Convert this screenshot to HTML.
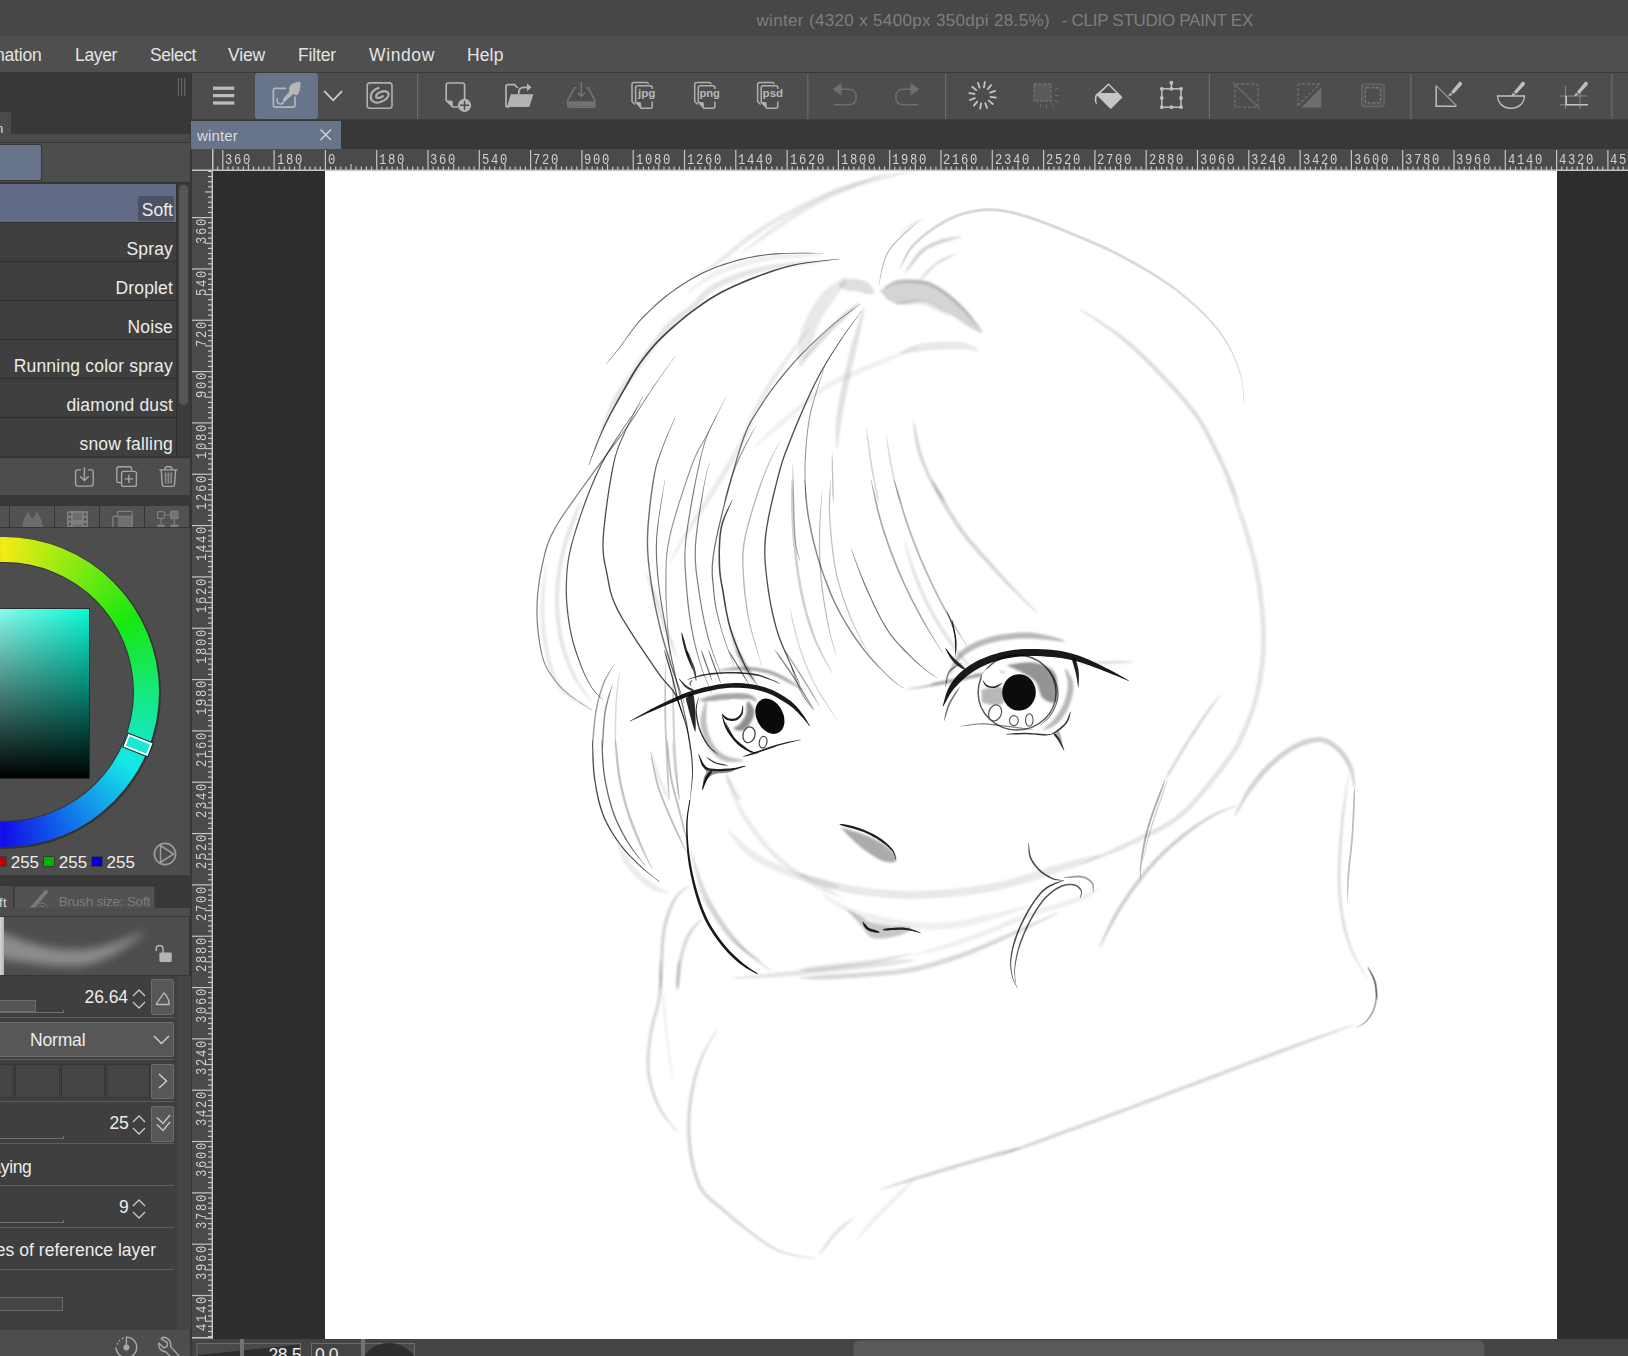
<!DOCTYPE html>
<html><head><meta charset="utf-8"><title>winter - CLIP STUDIO PAINT EX</title>
<style>
*{box-sizing:border-box;margin:0;padding:0}
html,body{width:1628px;height:1356px;overflow:hidden;background:#4d4d4d;font-family:"Liberation Sans",sans-serif;color:#e6e6e6}
.abs,.abs>div,.abs>svg{position:absolute}
#title{left:0;top:0;width:1628px;height:36px;background:#474747}
#menu{left:0;top:36px;width:1628px;height:36px;background:#4f4f4f}
#toolbar{left:192px;top:72px;width:1436px;height:48px;background:#4d4d4d}
#tabstrip{left:190px;top:120px;width:1438px;height:30px;background:#383838}
#doctab{left:191px;top:121px;width:150px;height:28px;background:#68738c}
#hruler{left:192px;top:149px;width:1436px;height:22px;background:#4a4a4a;overflow:hidden}
#vruler{left:192px;top:171px;width:21px;height:1168px;background:#4a4a4a;overflow:hidden}
#canvasbg{left:213px;top:171px;width:1415px;height:1168px;background:#2e2e2e}
#paper{left:325px;top:171px;width:1232px;height:1168px;background:#fff;overflow:hidden}
#status{left:190px;top:1339px;width:1438px;height:17px;background:#444;overflow:hidden}
#left{left:0;top:72px;width:191px;height:1284px;background:#363636;overflow:hidden}
#gap{left:190px;top:72px;width:2px;height:1284px;background:#363636}
#left .row{left:0;width:176px;height:38px;background:#3f3f3f}
#left .sep{left:0;width:177px;height:1px;background:#2f2f2f}
#left .psep{left:0;width:174px;height:1px;background:#5c5c5c}
#left .btn{background:#575757;border:1px solid #6c6c6c;border-radius:2px}
</style></head><body>
<div id="title" class="abs"><span style="position:absolute;left:756.50px;top:11.61px;font-family:'Liberation Sans',sans-serif;font-size:17px;line-height:17px;letter-spacing:0.337px;color:#7e7e7e;white-space:pre;">winter (4320 x 5400px 350dpi 28.5%) </span><span style="position:absolute;left:1061.70px;top:11.61px;font-family:'Liberation Sans',sans-serif;font-size:17px;line-height:17px;letter-spacing:-0.279px;color:#7e7e7e;white-space:pre;">- CLIP STUDIO PAINT EX</span></div>
<div id="menu" class="abs"><span style="position:absolute;left:-34.50px;top:11.19px;font-family:'Liberation Sans',sans-serif;font-size:17.5px;line-height:17.5px;letter-spacing:-0.203px;color:#e4e4e4;white-space:pre;">Animation</span><span style="position:absolute;left:75.00px;top:11.19px;font-family:'Liberation Sans',sans-serif;font-size:17.5px;line-height:17.5px;letter-spacing:-0.356px;color:#e4e4e4;white-space:pre;">Layer</span><span style="position:absolute;left:150.00px;top:11.19px;font-family:'Liberation Sans',sans-serif;font-size:17.5px;line-height:17.5px;letter-spacing:-0.440px;color:#e4e4e4;white-space:pre;">Select</span><span style="position:absolute;left:228.00px;top:11.19px;font-family:'Liberation Sans',sans-serif;font-size:17.5px;line-height:17.5px;letter-spacing:-0.156px;color:#e4e4e4;white-space:pre;">View</span><span style="position:absolute;left:298.00px;top:11.19px;font-family:'Liberation Sans',sans-serif;font-size:17.5px;line-height:17.5px;letter-spacing:-0.148px;color:#e4e4e4;white-space:pre;">Filter</span><span style="position:absolute;left:369.00px;top:11.19px;font-family:'Liberation Sans',sans-serif;font-size:17.5px;line-height:17.5px;letter-spacing:0.625px;color:#e4e4e4;white-space:pre;">Window</span><span style="position:absolute;left:467.00px;top:11.19px;font-family:'Liberation Sans',sans-serif;font-size:17.5px;line-height:17.5px;letter-spacing:0.125px;color:#e4e4e4;white-space:pre;">Help</span></div>
<div id="gap" class="abs"></div>
<div id="left" class="abs"><!-- coordinates are relative to #left (page y - 72) -->
<div style="left:0;top:0;width:191px;height:30px;background:#383838"></div>
<svg width="9" height="20" viewBox="0 0 9 20" style="left:177px;top:6px"><path d="M1.3 0V18M4.6 0V18M7.8 0V18" stroke="#767676" stroke-width="0.9"/></svg>
<div style="left:0;top:30px;width:191px;height:32px;background:#383838;border-top:1px solid #333"></div>
<div style="left:0;top:40px;width:11px;height:22px;background:#4a4a4a"></div>
<span style="position:absolute;left:-140.00px;top:120.50px;font-family:'Liberation Sans',sans-serif;font-size:13.0px;line-height:13.0px;letter-spacing:1.335px;color:#dcdcdc;white-space:pre;margin-top:-71px">Sub tool: Decoration</span>
<div style="left:0;top:62px;width:190px;height:8px;background:#4a4a4a"></div>
<div style="left:0;top:70px;width:190px;height:1px;background:#363636"></div>
<div style="left:0;top:71px;width:190px;height:39px;background:#4d4d4d"></div>
<div style="left:-4px;top:72px;width:46px;height:37px;background:#68738c;border:1px solid #363636;border-radius:3px"></div>
<div style="left:0;top:110px;width:190px;height:2px;background:#363636"></div>
<!-- list -->
<div style="left:0;top:112px;width:177px;height:274px;background:#2f2f2f"></div>
<div class="row" style="top:112px;background:#616b85"></div>
<div style="left:138px;top:124px;width:36px;height:25px;background:#4c5263;border-radius:2px"></div>
<div class="row" style="top:151px"></div>
<div class="row" style="top:190px"></div>
<div class="row" style="top:229px"></div>
<div class="row" style="top:268px"></div>
<div class="row" style="top:307px"></div>
<div class="row" style="top:346px"></div>
<span style="position:absolute;left:141.80px;top:200.69px;font-family:'Liberation Sans',sans-serif;font-size:17.5px;line-height:17.5px;letter-spacing:0.015px;color:#ececec;white-space:pre;margin-top:-71px">Soft</span>
<span style="position:absolute;left:126.50px;top:239.69px;font-family:'Liberation Sans',sans-serif;font-size:17.5px;line-height:17.5px;letter-spacing:0.156px;color:#ececec;white-space:pre;margin-top:-71px">Spray</span>
<span style="position:absolute;left:115.50px;top:278.69px;font-family:'Liberation Sans',sans-serif;font-size:17.5px;line-height:17.5px;letter-spacing:0.154px;color:#ececec;white-space:pre;margin-top:-71px">Droplet</span>
<span style="position:absolute;left:127.50px;top:317.69px;font-family:'Liberation Sans',sans-serif;font-size:17.5px;line-height:17.5px;letter-spacing:0.150px;color:#ececec;white-space:pre;margin-top:-71px">Noise</span>
<span style="position:absolute;left:13.70px;top:356.69px;font-family:'Liberation Sans',sans-serif;font-size:17.5px;line-height:17.5px;letter-spacing:0.193px;color:#ececec;white-space:pre;margin-top:-71px">Running color spray</span>
<span style="position:absolute;left:66.50px;top:395.69px;font-family:'Liberation Sans',sans-serif;font-size:17.5px;line-height:17.5px;letter-spacing:0.118px;color:#ececec;white-space:pre;margin-top:-71px">diamond dust</span>
<span style="position:absolute;left:79.50px;top:434.69px;font-family:'Liberation Sans',sans-serif;font-size:17.5px;line-height:17.5px;letter-spacing:0.171px;color:#ececec;white-space:pre;margin-top:-71px">snow falling</span>
<!-- list scrollbar -->
<div style="left:177px;top:112px;width:13px;height:274px;background:#3c3c3c"></div>
<div style="left:178.5px;top:113px;width:9.5px;height:220px;background:#565656;border-radius:5px"></div>
<div style="left:0;top:384px;width:190px;height:2px;background:#363636"></div>
<!-- icon bar -->
<div style="left:0;top:386px;width:190px;height:37px;background:#4d4d4d"></div>
<div style="left:0;top:423px;width:190px;height:11px;background:#383838"></div>
<!-- colour tabs -->
<div style="left:0;top:434px;width:190px;height:22px;background:#353535"></div>
<div style="left:-36px;top:434px;width:45px;height:21px;background:#525252"></div>
<div style="left:10px;top:434px;width:44px;height:21px;background:#525252"></div>
<div style="left:55px;top:434px;width:44px;height:21px;background:#525252"></div>
<div style="left:100px;top:434px;width:44px;height:21px;background:#525252"></div>
<div style="left:145px;top:434px;width:44px;height:21px;background:#525252"></div>
<!-- colour panel -->
<div style="left:0;top:456px;width:190px;height:347px;background:#4d4d4d"></div>
<div style="left:-151.5px;top:464.5px;width:312px;height:312px;border-radius:50%;background:#333"></div>
<div style="left:-150.7px;top:465.3px;width:310px;height:310px;border-radius:50%;background:conic-gradient(#f2ec14 0deg,#18e810 60deg,#14e8e8 120deg,#1010e8 180deg,#e810e8 240deg,#e81010 300deg,#f2ec14 360deg)"></div>
<div style="left:-125.7px;top:490.3px;width:260px;height:260px;border-radius:50%;background:#333"></div>
<div style="left:-124.7px;top:491.3px;width:258px;height:258px;border-radius:50%;background:#4d4d4d"></div>
<div style="left:-81px;top:535.5px;width:171px;height:171px;background:#2a2a2a"></div>
<div style="left:-80px;top:536.5px;width:169px;height:169px;background:linear-gradient(to bottom,rgba(0,0,0,0),#000),linear-gradient(to right,#fff,#08f8d6)"></div>
<!-- hue marker -->
<div style="left:125px;top:666px;width:26px;height:14px;background:#19e8d6;border:2.5px solid #fff;outline:1px solid #222;transform:rotate(21.5deg)"></div>
<!-- rgb -->
<div style="left:-5px;top:783.5px;width:11.5px;height:11px;background:#c00000;border:1px solid #3a3a3a;border-radius:1.5px"></div>
<div style="left:43.3px;top:783.5px;width:11.5px;height:11px;background:#00b400;border:1px solid #3a3a3a;border-radius:1.5px"></div>
<div style="left:91.3px;top:783.5px;width:11.5px;height:11px;background:#0000d8;border:1px solid #3a3a3a;border-radius:1.5px"></div>
<span style="position:absolute;left:10.80px;top:852.61px;font-family:'Liberation Sans',sans-serif;font-size:17.0px;line-height:17.0px;letter-spacing:-0.058px;color:#ececec;white-space:pre;margin-top:-71px">255</span>
<span style="position:absolute;left:58.70px;top:852.61px;font-family:'Liberation Sans',sans-serif;font-size:17.0px;line-height:17.0px;letter-spacing:0.042px;color:#ececec;white-space:pre;margin-top:-71px">255</span>
<span style="position:absolute;left:106.60px;top:852.61px;font-family:'Liberation Sans',sans-serif;font-size:17.0px;line-height:17.0px;letter-spacing:0.008px;color:#ececec;white-space:pre;margin-top:-71px">255</span>
<svg width="26" height="26" viewBox="0 0 26 26" style="left:152px;top:768.5px"><circle cx="13" cy="13" r="10.6" fill="none" stroke="#9c9c9c" stroke-width="1.7"/><path d="M8.5 4.5L21.5 13L8.5 21.5Z" fill="none" stroke="#9c9c9c" stroke-width="1.5" stroke-linejoin="round"/></svg>
<!-- tool property tabs -->
<div style="left:0;top:803px;width:190px;height:11px;background:#383838"></div>
<div style="left:0;top:814px;width:190px;height:22px;background:#383838"></div>
<div style="left:0;top:814px;width:13px;height:22px;background:#4d4d4d"></div>
<span style="position:absolute;left:-104.00px;top:894.50px;font-family:'Liberation Sans',sans-serif;font-size:13.0px;line-height:13.0px;letter-spacing:0.279px;color:#dcdcdc;white-space:pre;margin-top:-71px">Tool property: Soft</span>
<div style="left:14px;top:814px;width:141px;height:22px;background:#525252;border:1px solid #404040;border-bottom:none"></div>
<span style="position:absolute;left:58.70px;top:894.07px;font-family:'Liberation Sans',sans-serif;font-size:13.5px;line-height:13.5px;letter-spacing:-0.203px;color:#7d7d7d;white-space:pre;margin-top:-71px">Brush size: Soft</span>
<div style="left:0;top:836px;width:190px;height:8px;background:#4d4d4d"></div>
<div style="left:0;top:844px;width:190px;height:1px;background:#363636"></div>
<!-- brush preview -->
<div style="left:0;top:845px;width:189px;height:58px;background:#4d4d4d;overflow:hidden">
<svg width="189" height="58" viewBox="0 0 189 58" style="position:absolute;left:0;top:0"><defs><filter id="bl" x="-20%" y="-100%" width="140%" height="300%"><feGaussianBlur stdDeviation="4"/></filter></defs><path d="M-8 12C10 18 40 33 74 33C95 33 120 26 143 14L143 17C125 32 100 49 74 49C45 49 15 44 -8 40Z" fill="#8c8c8c" filter="url(#bl)"/></svg>
<div style="position:absolute;left:0;top:0;width:4px;height:58px;background:linear-gradient(to right,#d6d6d6,#b4b4b4)"></div>
</div>
<div style="left:0;top:903px;width:190px;height:1px;background:#363636"></div>
<!-- properties -->
<div style="left:0;top:904px;width:177px;height:354px;background:#3f3f3f"></div>
<div style="left:177px;top:904px;width:14px;height:354px;background:#454545"></div>
<div class="psep" style="top:945px"></div>
<div class="psep" style="top:987px"></div>
<div class="psep" style="top:1029px"></div>
<div class="psep" style="top:1071px"></div>
<div class="psep" style="top:1113px"></div>
<div class="psep" style="top:1155px"></div>
<div class="psep" style="top:1197px"></div>
<!-- row1 -->
<div style="left:-2px;top:928px;width:38px;height:12px;background:#555;border:1px solid #6c6c6c"></div>
<div style="left:0;top:940px;width:63px;height:1px;background:#707070"></div>
<div style="left:62.5px;top:938px;width:1px;height:3px;background:#707070"></div>
<span style="position:absolute;left:84.50px;top:988.19px;font-family:'Liberation Sans',sans-serif;font-size:17.5px;line-height:17.5px;letter-spacing:-0.059px;color:#ececec;white-space:pre;margin-top:-71px">26.64</span>
<svg width="14" height="20" viewBox="0 0 14 20" style="left:131.5px;top:917px"><path d="M1 7L7 1L13 7M1 13L7 19L13 13" fill="none" stroke="#c8c8c8" stroke-width="1.3"/></svg>
<div class="btn" style="left:151px;top:907px;width:23px;height:36px"></div>
<svg width="16" height="14" viewBox="0 0 16 14" style="left:155px;top:920px"><path d="M1 12.5H14.5M1 12.5L8.5 1.5M8.5 0.5C11.5 3 14 8 14.3 12.5" fill="none" stroke="#bdbdbd" stroke-width="1.3"/></svg>
<!-- row2 dropdown -->
<div class="btn" style="left:-3px;top:949.5px;width:177px;height:35.5px"></div>
<span style="position:absolute;left:29.90px;top:1030.69px;font-family:'Liberation Sans',sans-serif;font-size:17.5px;line-height:17.5px;letter-spacing:-0.151px;color:#ececec;white-space:pre;margin-top:-71px">Normal</span>
<svg width="17" height="10" viewBox="0 0 17 10" style="left:152.5px;top:962.5px"><path d="M1 1L8.5 8.5L16 1" fill="none" stroke="#d0d0d0" stroke-width="1.4"/></svg>
<!-- row3 cells -->
<div style="left:-20px;top:992px;width:33.5px;height:33.5px;background:#444;border:1px solid #353535"></div>
<div style="left:15px;top:992px;width:45px;height:33.5px;background:#444;border:1px solid #353535"></div>
<div style="left:61px;top:992px;width:44px;height:33.5px;background:#444;border:1px solid #353535"></div>
<div style="left:106px;top:992px;width:44px;height:33.5px;background:#444;border:1px solid #353535"></div>
<div class="btn" style="left:151px;top:991.5px;width:23px;height:35px"></div>
<svg width="10" height="16" viewBox="0 0 10 16" style="left:157.5px;top:1001px"><path d="M1 1L8.5 8L1 15" fill="none" stroke="#d0d0d0" stroke-width="1.4"/></svg>
<!-- row4 -->
<div style="left:0;top:1065.5px;width:63px;height:1px;background:#707070"></div>
<div style="left:62.5px;top:1063.5px;width:1px;height:3px;background:#707070"></div>
<span style="position:absolute;left:109.50px;top:1114.19px;font-family:'Liberation Sans',sans-serif;font-size:17.5px;line-height:17.5px;letter-spacing:-0.284px;color:#ececec;white-space:pre;margin-top:-71px">25</span>
<svg width="14" height="20" viewBox="0 0 14 20" style="left:131.5px;top:1043px"><path d="M1 7L7 1L13 7M1 13L7 19L13 13" fill="none" stroke="#c8c8c8" stroke-width="1.3"/></svg>
<div class="btn" style="left:151px;top:1033.5px;width:23px;height:36px"></div>
<svg width="15" height="18" viewBox="0 0 15 18" style="left:155.5px;top:1042px"><path d="M1 3.5L7 9.5L14 1M1 10.5L7 16.5L14 8" fill="none" stroke="#c8c8c8" stroke-width="1.4"/></svg>
<!-- row5 -->
<span style="position:absolute;left:-121.00px;top:1157.69px;font-family:'Liberation Sans',sans-serif;font-size:17.5px;line-height:17.5px;letter-spacing:-0.376px;color:#ececec;white-space:pre;margin-top:-71px">Continuous spraying</span>
<!-- row6 -->
<div style="left:0;top:1149.5px;width:63px;height:1px;background:#707070"></div>
<div style="left:62.5px;top:1147.5px;width:1px;height:3px;background:#707070"></div>
<span style="position:absolute;left:119.00px;top:1197.69px;font-family:'Liberation Sans',sans-serif;font-size:17.5px;line-height:17.5px;letter-spacing:-0.334px;color:#ececec;white-space:pre;margin-top:-71px">9</span>
<svg width="14" height="20" viewBox="0 0 14 20" style="left:131.5px;top:1127px"><path d="M1 7L7 1L13 7M1 13L7 19L13 13" fill="none" stroke="#c8c8c8" stroke-width="1.3"/></svg>
<!-- row7 -->
<span style="position:absolute;left:-140.00px;top:1240.99px;font-family:'Liberation Sans',sans-serif;font-size:17.5px;line-height:17.5px;letter-spacing:0.033px;color:#ececec;white-space:pre;margin-top:-71px">Do not exceed lines of reference layer</span>
<!-- row8 -->
<div style="left:-3px;top:1224.5px;width:66px;height:14.5px;background:#444;border:1px solid #6c6c6c"></div>
<!-- bottom bar -->
<div style="left:0;top:1258px;width:190px;height:26px;background:#4d4d4d"></div>
<!-- icons overlay in page coords -->
<svg width="190" height="1284" viewBox="0 72 190 1284" style="left:0;top:0" fill="none">
<!-- import -->
<g stroke="#a6a6a6" stroke-width="1.4">
<path d="M81 469.9H77.6a2 2 0 0 0-2 2V484.1a2 2 0 0 0 2 2H91.2a2 2 0 0 0 2-2V471.9a2 2 0 0 0-2-2H87.8"/>
<path d="M84.4 467.2V480.4M80 476.3L84.4 480.6L88.8 476.3"/>
<path d="M121 482.6H118.8a2 2 0 0 1-2-2V468.7a2 2 0 0 1 2-2H129.6a2 2 0 0 1 2 2V470.6"/>
<rect x="121.6" y="471.4" width="14.8" height="15" rx="2"/>
<path d="M124.8 478.9H133M128.9 474.8V483"/>
<path d="M159.4 469.9H177.4M164.8 469.6C164.8 467.6 166 466.7 167.2 466.7H169.6C170.8 466.7 172 467.6 172 469.6M161.2 470.3L162.3 484.6a2 2 0 0 0 2 1.8H172.5a2 2 0 0 0 2-1.8L175.6 470.3"/>
</g>
<path d="M164.6 472.5H166.4V483.5H164.9ZM167.5 472.5H169.3V483.5H167.5ZM170.4 472.5H172.2L171.9 483.5H170.4Z" fill="#8a8a8a"/>
<!-- tab icons (clipped to tab row) -->
<clipPath id="tc"><rect x="0" y="506" width="190" height="21"/></clipPath>
<g clip-path="url(#tc)">
<path d="M22 529C22 522 25 516 28 512L32.5 519L37 512C40 516 43 522 43 529Z" fill="#6c6c6c"/>
<rect x="67" y="511" width="21" height="20" rx="1.5" fill="#7e7e7e"/>
<g fill="#525252"><rect x="68.6" y="513" width="2.4" height="2.4"/><rect x="68.6" y="518" width="2.4" height="2.4"/><rect x="68.6" y="523" width="2.4" height="2.4"/><rect x="84" y="513" width="2.4" height="2.4"/><rect x="84" y="518" width="2.4" height="2.4"/><rect x="84" y="523" width="2.4" height="2.4"/></g>
<rect x="73.2" y="513" width="8.6" height="7" fill="#6c6c6c"/><rect x="73.2" y="524.6" width="8.6" height="4" fill="#6c6c6c"/>
<path d="M117.6 516V513a1.6 1.6 0 0 1 1.6-1.6H130.6a1.6 1.6 0 0 1 1.6 1.6V530" stroke="#7e7e7e" stroke-width="1.3"/>
<rect x="112.8" y="516.4" width="19" height="14" rx="1.6" stroke="#7e7e7e" stroke-width="1.3"/>
<rect x="117.8" y="516.8" width="13.6" height="12" fill="#707070"/>
<rect x="157.6" y="511.6" width="6.8" height="6.8" rx="1" stroke="#7e7e7e" stroke-width="1.3"/>
<rect x="170.6" y="511.2" width="7.4" height="7.4" rx="1" fill="#747474" stroke="#7e7e7e" stroke-width="1.2"/>
<path d="M164.4 515H170.6M161 518.4V524.6M174.4 518.4V524.6" stroke="#7e7e7e" stroke-width="1.2"/>
<rect x="157" y="524.6" width="8" height="3" rx="1" fill="#7e7e7e"/><rect x="170.4" y="524.6" width="8" height="3" rx="1" fill="#7e7e7e"/>
</g>
<!-- brush tab icon -->
<clipPath id="tc2"><rect x="15" y="887" width="139" height="20.6"/></clipPath>
<g clip-path="url(#tc2)"><path d="M31 909L46 892" stroke="#7a7a7a" stroke-width="3.6" stroke-linecap="round"/><circle cx="41.5" cy="909" r="3" stroke="#7a7a7a" stroke-width="1"/><circle cx="41.5" cy="909" r="6" stroke="#7a7a7a" stroke-width="1"/></g>
<!-- lock -->
<path d="M156.2 951V949C156.2 946.7 157.8 945.4 159.6 945.4C161.4 945.4 163 946.7 163 949V953" stroke="#b4b4b4" stroke-width="1.5"/>
<rect x="159.4" y="952.6" width="12.4" height="9.4" rx="1.4" fill="#b4b4b4"/>
<!-- bottom icons -->
<clipPath id="bc"><rect x="0" y="1330" width="190" height="26"/></clipPath>
<g clip-path="url(#bc)" stroke="#a8a8a8" stroke-width="1.4">
<path d="M126.4 1347.4V1337.1A10.3 10.3 0 1 1 116.1 1347.4"/>
<circle cx="126.4" cy="1347.4" r="3" fill="#a8a8a8" stroke="none"/>
<g fill="#a8a8a8" stroke="none"><circle cx="117.4" cy="1343.8" r="0.9"/><circle cx="119.4" cy="1340.6" r="0.9"/><circle cx="122.6" cy="1338.4" r="0.9"/></g>
<path d="M161.2 1338.8L167.4 1342.6V1346.2L163.8 1348L158.9 1343C158 1347.5 161 1351.6 165.6 1351.8L174 1360L178.6 1355.4L170.6 1346.6C171.6 1342 168.6 1337.4 163.4 1337.2C162.4 1337.2 161.6 1337.6 161.2 1338.8Z" stroke-linejoin="round"/>
</g>
</svg>
</div>
<div id="toolbar" class="abs"><svg width="1436" height="48" viewBox="192 72 1436 48" style="left:0;top:0" fill="none" stroke-linecap="butt">
<rect x="192" y="72" width="1436" height="1" fill="#3a3a3a"/>
<rect x="192" y="119" width="1436" height="1" fill="#404040"/>
<!-- hamburger -->
<g fill="#bdbdbd"><rect x="213" y="86.6" width="21.3" height="3.2"/><rect x="213" y="94" width="21.3" height="3.2"/><rect x="213" y="101.4" width="21.3" height="3.2"/></g>
<!-- selected button -->
<rect x="255" y="73" width="63" height="46" rx="3" fill="#68738c"/>
<g stroke="#b6b6b6" stroke-width="1.7">
<path d="M286 88.3H275.2a1.8 1.8 0 0 0-1.8 1.8V105.3a1.8 1.8 0 0 0 1.8 1.8H293.2a1.8 1.8 0 0 0 1.8-1.8V96.5"/>
<path d="M277.4 98.2c-1 3 0.4 5.8 3 5.8c2.6 0 4-2.4 3.4-5" stroke-width="1.7"/>
</g>
<path d="M282.6 99.6L289.6 91.2C288.2 87.6 290.2 84.4 293.6 83.2C296.6 82.2 299.6 81.4 300.2 82C300.9 83 300.6 90.6 298.2 94C297 95.6 295.6 95.6 294.6 94.6C293.8 94 293 94.2 292.4 94.8L284.8 101.8Z" fill="#b6b6b6"/>
<!-- chevron -->
<path d="M324.3 91.2L333.2 100.3L342 91.2" stroke="#cfcfcf" stroke-width="1.7"/>
<!-- csp icon -->
<rect x="367.2" y="82.9" width="24.8" height="25.4" rx="2.8" stroke="#b0b0b0" stroke-width="1.6"/>
<path d="M378.5 88C374 89.5 370.5 93 370.8 97.5C371.2 102 376 103.5 380.5 102C385.5 100.3 389 97 388.5 93.8C388 91 384.5 90.5 381 91.8C377.5 93.2 375.5 95.3 376.2 97C377 98.6 380 98 382.8 96.3" stroke="#b0b0b0" stroke-width="2.3" stroke-linecap="round"/>
<!-- separators -->
<g fill="#6c6c6c"><rect x="417" y="74" width="1.2" height="45"/><rect x="807.2" y="74" width="1.2" height="45"/><rect x="945" y="74" width="1.2" height="45"/><rect x="1208.7" y="74" width="1.2" height="45"/><rect x="1410.2" y="74" width="1.2" height="45"/><rect x="1611.2" y="74" width="1.2" height="45"/></g>
<!-- new file -->
<path d="M464.6 101V85.2a2.2 2.2 0 0 0-2.2-2.2H448.4a2.2 2.2 0 0 0-2.2 2.2V100.5L452.8 107H458" stroke="#b4b4b4" stroke-width="1.7"/>
<path d="M446.2 100.5H450.8a2 2 0 0 1 2 2V107Z" fill="#b4b4b4"/>
<circle cx="464.5" cy="105.3" r="6.6" fill="#b4b4b4"/>
<path d="M460 105.3H469M464.5 100.8V109.8" stroke="#4d4d4d" stroke-width="1.5"/>
<!-- open -->
<path d="M509 107H508a2 2 0 0 1-2-2V86.6a2 2 0 0 1 2-2H514.5L517.8 88" stroke="#b4b4b4" stroke-width="1.7"/>
<path d="M510.8 94.3H533.4L529.6 106a1.5 1.5 0 0 1-1.4 1H506.8Z" fill="#b4b4b4"/>
<path d="M518.8 94.5V92.5C518.8 89 521 87.3 524 87.3H529" stroke="#b4b4b4" stroke-width="1.7"/>
<path d="M527 83.5L531.6 87.3L527 91.2Z" fill="#b4b4b4"/>
<!-- save (dim) -->
<g stroke="#727272" stroke-width="1.6">
<path d="M576.5 87.8H574.5L567.6 100.5V105.2a2 2 0 0 0 2 2H593a2 2 0 0 0 2-2V100.5L588.2 87.8H586"/>
<path d="M581.3 82V95.5M577.6 92.5L581.3 96.3L585 92.5"/>
</g>
<rect x="568.4" y="101.3" width="25.8" height="5.2" fill="#727272"/>
<!-- jpg png psd -->
<g id="fi" stroke="#b0b0b0" stroke-width="1.5">
<path d="M635 104.5L632 101.5V84.6a2 2 0 0 1 2-2H646.5a2 2 0 0 1 2 1.6"/>
<path d="M652.2 89V87.8a2 2 0 0 0-2-2H637.6a2 2 0 0 0-2 2V102L641.2 108.2H650.2a2 2 0 0 0 2-2V101.5"/>
<path d="M635.6 102H639.4a1.8 1.8 0 0 1 1.8 1.8V108.2Z" fill="#b0b0b0" stroke="none"/>
</g>
<use href="#fi" x="62.7"/><use href="#fi" x="125.6"/>
<g fill="#b8b8b8" font-family="'Liberation Sans',sans-serif" font-weight="700" font-size="10.5px" stroke="none">
<text x="638" y="97.2" textLength="17.5" lengthAdjust="spacingAndGlyphs">jpg</text>
<text x="699.4" y="97.2" textLength="20.5" lengthAdjust="spacingAndGlyphs">png</text>
<text x="762.6" y="97.2" textLength="20.5" lengthAdjust="spacingAndGlyphs">psd</text>
</g>
<!-- undo / redo (dim) -->
<g stroke="#6e6e6e" stroke-width="1.6">
<path d="M840 89.3H848.8C853.5 89.3 856.2 92.5 856.2 97C856.2 101.5 853.5 104.8 848.8 104.8H834"/>
<path d="M912 89.3H903.2C898.5 89.3 895.8 92.5 895.8 97C895.8 101.5 898.5 104.8 903.2 104.8H918"/>
</g>
<path d="M841.5 82.8V95.8L832.6 89.3Z" fill="#6e6e6e"/><path d="M910.5 82.8V95.8L919.4 89.3Z" fill="#6e6e6e"/>
<!-- burst -->
<g stroke="#c6c6c6" stroke-width="1.8" stroke-linecap="round" transform="translate(982.5 95.4)"><path d="M0 -8.2V-13.4" transform="rotate(10)"/><path d="M0 -8.2V-13.4" transform="rotate(40)"/><path d="M0 -8.2V-13.4" transform="rotate(70)"/><path d="M0 -8.2V-13.4" transform="rotate(100)"/><path d="M0 -8.2V-13.4" transform="rotate(130)"/><path d="M0 -8.2V-13.4" transform="rotate(160)"/><path d="M0 -8.2V-13.4" transform="rotate(190)"/><path d="M0 -8.2V-13.4" transform="rotate(220)"/><path d="M0 -8.2V-13.4" transform="rotate(250)"/><path d="M0 -8.2V-13.4" transform="rotate(280)"/><path d="M0 -8.2V-13.4" transform="rotate(310)"/><path d="M0 -8.2V-13.4" transform="rotate(340)"/></g>
<!-- dashed square w/ rays (dim) -->
<rect x="1034" y="84" width="17" height="17" fill="#5a5a5a" stroke="#727272" stroke-width="1.3" stroke-dasharray="3 1.6"/>
<g stroke="#6a6a6a" stroke-width="1.1" stroke-linecap="round"><path d="M1054.5 90L1058 88.5M1055 95.5H1059M1054.5 100L1058 102M1051.5 103.5L1053.5 107M1046.5 104.5V108M1041.5 104L1040 107.5"/></g>
<!-- fill bucket -->
<path d="M1108.5 83.2L1122.6 97.3L1111.5 108.4a1 1 0 0 1-1.4 0L1097 95.4C1095.8 99 1096.5 103.5 1097.6 104.4C1096 104.6 1094.6 102 1094.8 98C1095 95 1096.2 93.6 1097.6 93.2Z" fill="#c6c6c6"/>
<path d="M1100.6 93L1108.5 85.2L1116.3 93Z" fill="#4d4d4d"/>
<!-- transform -->
<g stroke="#c0c0c0" stroke-width="1.5"><rect x="1161.8" y="88.8" width="19.2" height="18.4"/><path d="M1171.4 88.8V83.5"/></g>
<g fill="#c0c0c0"><circle cx="1171.4" cy="82.7" r="2"/><circle cx="1161.8" cy="88.8" r="1.9"/><circle cx="1171.4" cy="88.8" r="1.9"/><circle cx="1181" cy="88.8" r="1.9"/><circle cx="1161.8" cy="98" r="1.9"/><circle cx="1181" cy="98" r="1.9"/><circle cx="1161.8" cy="107.2" r="1.9"/><circle cx="1171.4" cy="107.2" r="1.9"/><circle cx="1181" cy="107.2" r="1.9"/></g>
<!-- deselect (dim) -->
<g stroke="#6e6e6e" stroke-width="1.3"><rect x="1234.8" y="84" width="23.2" height="23.2" rx="1.5" stroke-dasharray="3.2 1.8"/><path d="M1233 82.6L1260 108.8"/></g>
<!-- invert (dim) -->
<g stroke="#6e6e6e" stroke-width="1.3"><path d="M1320 84H1299.5a1.5 1.5 0 0 0-1.5 1.5V106" stroke-dasharray="3.2 1.8"/><path d="M1298 105.5L1319.5 84" stroke-dasharray="3.2 1.8"/></g>
<path d="M1321.3 87.5V107.4H1301.4Z" fill="#6e6e6e"/>
<!-- border select (dim) -->
<rect x="1361.6" y="84" width="22.6" height="22.6" rx="2.5" stroke="#686868" stroke-width="1.2" fill="#555"/>
<rect x="1365.4" y="87.8" width="15" height="15" rx="1" stroke="#7a7a7a" stroke-width="1.3" stroke-dasharray="3 1.7" fill="#4d4d4d"/>
<!-- snap ruler -->
<g stroke="#bebebe" stroke-width="1.5"><path d="M1436.2 85.5V106.2H1456" /><path d="M1436.5 85.8L1456.8 106" stroke="#9a9a9a" stroke-width="1.1"/></g>
<g id="pen"><path d="M1451 92L1458.8 82.4a1.6 1.6 0 0 1 2.4-0.2L1461.6 82.6a1.6 1.6 0 0 1 0.1 2.3L1453.4 94Z" fill="#bebebe"/><path d="M1450.2 92.8L1452.6 94.8L1448 96.4Z" fill="#bebebe"/></g>
<!-- snap special ruler -->
<path d="M1497.5 96H1524.5C1524 104 1518 108.2 1511 108.2C1504 108.2 1498 104 1497.5 96Z" stroke="#bebebe" stroke-width="1.4"/>
<use href="#pen" x="62.8" y="0"/>
<!-- snap grid -->
<g stroke="#8a8a8a" stroke-width="1"><path d="M1565.5 86V109M1580 93V109M1560 96H1587M1560 104.8H1569"/></g>
<path d="M1566.2 96V104.8H1588" stroke="#c4c4c4" stroke-width="1.6"/>
<use href="#pen" x="125.8" y="0"/>
</svg>
</div>
<div id="tabstrip" class="abs"></div>
<div id="doctab" class="abs"><span style="position:absolute;left:6.00px;top:6.80px;font-family:'Liberation Sans',sans-serif;font-size:15px;line-height:15px;letter-spacing:0.164px;color:#dcdcdc;white-space:pre;">winter</span><svg width="14" height="14" viewBox="0 0 14 14" style="left:128px;top:7px"><path d="M1.5 1.5L12 12M12 1.5L1.5 12" stroke="#d6d6d6" stroke-width="1.4" fill="none"/></svg></div>
<div id="canvasbg" class="abs"></div>
<div id="paper" class="abs"><svg width="1232" height="1168" viewBox="325 171 1232 1168" style="left:0;top:0" fill="#000" stroke="none">
<defs><filter id="sb" x="-5%" y="-5%" width="110%" height="110%"><feGaussianBlur stdDeviation="0.9"/></filter></defs>
<g filter="url(#sb)"><path d="M917.9 169.4L909.2 171.0L897.2 173.1L882.9 175.7L867.6 178.9L852.4 182.8L838.6 187.3L825.6 192.5L812.5 198.4L799.6 204.8L787.1 211.4L775.3 218.0L764.4 224.4L754.4 230.8L745.1 237.6L736.6 244.5L728.9 251.1L721.9 257.0L715.6 262.0L710.0 266.1L705.0 269.4L700.7 272.1L697.0 274.3L694.0 276.1L691.7 277.6L692.3 278.7L694.7 277.4L697.9 275.9L701.7 273.9L706.3 271.5L711.5 268.5L717.5 264.7L724.2 260.0L731.6 254.4L739.5 248.1L748.1 241.6L757.2 235.0L767.0 228.6L777.7 222.3L789.5 215.8L801.8 209.2L814.6 202.9L827.5 197.1L840.3 192.0L853.8 187.5L868.7 183.3L883.7 179.4L897.8 175.8L909.6 172.9L918.2 170.6Z" fill-opacity="0.08750000000000001"/>
<path d="M888.3 171.9L881.4 174.1L871.6 177.2L860.2 180.9L848.1 185.3L836.4 190.1L826.0 194.8L816.9 199.5L808.1 204.4L799.7 209.5L791.7 214.6L784.0 219.6L776.6 224.5L769.4 229.6L762.2 235.0L755.5 240.5L749.5 245.6L744.5 249.9L740.8 253.0L741.5 254.0L745.5 251.3L751.0 247.6L757.5 243.2L764.6 238.4L772.0 233.4L779.4 228.6L786.7 223.8L794.3 218.8L802.3 213.7L810.6 208.7L819.3 203.9L828.2 199.3L838.4 194.7L849.9 189.8L861.7 184.9L872.7 180.1L882.1 176.1L888.8 173.0Z" fill-opacity="0.075"/>
<path d="M827.1 260.2L820.2 260.6L810.6 261.1L799.3 261.8L787.3 262.7L775.6 264.0L765.2 265.7L755.8 267.8L746.6 270.3L737.8 273.1L729.6 276.2L721.9 279.5L715.1 282.9L709.3 286.5L704.5 290.3L700.6 294.3L697.1 298.2L693.7 301.9L690.0 305.3L686.2 308.4L682.3 311.1L678.3 313.9L674.1 317.0L669.8 320.7L665.2 325.2L660.4 330.8L655.4 337.2L650.3 344.1L645.1 351.2L640.2 358.2L635.5 364.8L631.1 370.9L626.8 376.9L622.7 382.7L618.7 388.8L614.9 395.3L611.2 402.3L607.6 410.6L603.9 420.0L600.5 429.7L597.4 438.9L594.9 446.7L593.0 452.3L594.4 452.8L596.7 447.4L599.8 439.8L603.5 430.9L607.5 421.4L611.6 412.4L615.5 404.5L619.4 397.9L623.3 391.8L627.4 386.0L631.6 380.3L635.9 374.5L640.4 368.3L645.1 361.7L650.0 354.7L655.1 347.6L660.2 340.8L665.1 334.6L669.6 329.3L673.8 325.1L677.8 321.7L681.8 318.8L685.7 316.1L689.8 313.2L694.0 309.9L697.9 306.1L701.5 302.2L704.9 298.5L708.6 294.8L712.8 291.4L718.0 288.1L724.4 284.9L731.8 281.8L739.8 278.8L748.4 275.9L757.2 273.2L766.2 270.9L776.3 268.8L787.8 266.9L799.7 265.2L810.9 263.8L820.4 262.6L827.2 261.7Z" fill-opacity="0.1"/>
<path d="M822.2 254.1L815.9 254.0L807.2 253.7L796.9 253.6L785.9 253.8L775.1 254.7L765.3 256.0L756.3 257.8L747.4 259.9L738.7 262.4L730.4 265.1L722.6 268.0L715.6 271.0L709.1 274.5L703.1 278.5L697.8 282.7L693.3 286.6L689.5 290.0L686.7 292.3L687.4 293.4L690.6 291.4L694.7 288.5L699.7 285.2L705.3 281.7L711.3 278.4L717.6 275.4L724.4 272.7L732.0 269.9L740.2 267.2L748.7 264.8L757.4 262.7L766.1 260.9L775.6 259.6L786.2 258.7L797.1 257.8L807.3 256.9L816.0 256.1L822.2 255.4Z" fill-opacity="0.0625"/>
<path d="M845.6 276.8L842.9 278.3L839.2 280.2L834.8 282.6L830.1 285.7L825.6 289.4L821.6 293.5L818.3 297.9L815.1 302.6L811.9 307.7L808.9 313.0L806.0 318.7L803.4 324.8L801.0 331.7L799.1 339.4L798.1 347.4L798.0 355.1L798.2 361.5L798.4 366.2L801.8 366.9L804.0 362.8L806.8 356.9L809.7 350.1L812.4 342.8L814.4 335.7L816.5 329.7L818.7 324.6L821.2 319.6L823.9 314.9L826.8 310.4L829.7 306.0L832.6 302.0L835.4 298.0L838.3 293.8L841.3 289.5L844.0 285.5L846.3 282.0L848.0 279.4Z" fill-opacity="0.08750000000000001"/>
<path d="M874.6 291.5L873.6 289.7L872.3 287.2L870.3 284.5L867.5 282.3L864.1 280.7L860.3 279.6L856.3 279.1L852.2 278.9L848.1 279.2L844.4 280.6L841.5 282.5L839.4 284.0L839.5 287.0L841.8 288.3L844.9 289.8L848.5 290.8L852.1 290.9L855.4 291.0L857.8 291.3L859.9 292.0L862.2 293.0L865.0 293.8L868.0 294.2L870.9 294.2L873.1 294.2Z" fill-opacity="0.125"/>
<path d="M863.3 307.4L861.1 313.8L858.0 322.7L854.7 333.4L851.4 344.7L848.7 355.9L846.3 365.9L844.3 374.9L842.4 383.7L840.6 392.2L839.0 400.4L837.6 408.1L836.6 415.3L836.0 422.1L835.8 428.6L835.8 434.6L835.9 439.9L836.1 444.3L836.2 447.6L837.7 447.7L838.2 444.4L838.7 440.1L839.3 434.8L840.1 429.0L841.1 422.7L842.2 416.1L843.5 409.1L844.9 401.5L846.5 393.4L848.3 384.9L850.2 376.2L852.2 367.2L854.5 357.3L857.2 346.2L859.8 334.7L861.9 323.7L863.6 314.4L864.7 307.8Z" fill-opacity="0.11249999999999999"/>
<path d="M858.6 302.2L854.7 305.0L849.3 308.9L843.0 313.8L836.7 319.4L830.7 325.1L825.3 330.4L820.4 335.8L815.6 341.5L811.1 347.3L807.3 352.9L804.3 357.7L802.1 361.3L803.0 362.0L806.0 359.1L810.0 355.1L814.6 350.2L819.4 344.7L824.2 339.1L828.9 333.9L834.1 328.7L840.1 323.1L846.2 317.4L851.8 311.7L856.3 306.8L859.5 303.1Z" fill-opacity="0.15"/>
<path d="M917.8 346.3L913.2 347.9L907.0 350.1L899.6 352.7L891.6 355.6L883.3 358.7L875.3 361.9L867.4 365.1L859.0 368.5L850.4 372.1L841.8 375.8L833.5 379.8L825.8 384.1L818.8 388.6L812.4 393.4L806.3 398.4L800.5 403.5L794.6 408.7L788.7 413.8L782.2 419.5L775.3 425.8L768.5 432.3L762.1 438.3L756.8 443.5L753.0 447.2L753.8 448.1L758.0 444.8L763.8 440.2L770.6 434.8L777.9 428.9L785.2 423.0L791.8 417.6L797.9 412.4L803.7 407.3L809.5 402.3L815.5 397.4L821.7 392.7L828.4 388.4L835.8 384.3L843.9 380.4L852.4 376.7L860.9 373.1L869.3 369.7L877.2 366.3L885.0 362.8L893.0 359.1L900.8 355.6L907.9 352.3L913.9 349.5L918.3 347.5Z" fill-opacity="0.0625"/>
<path d="M809.4 326.9L804.2 333.7L796.8 343.1L788.2 354.3L779.2 366.4L770.7 378.6L763.6 389.9L758.0 400.1L753.3 409.9L749.1 419.6L744.9 429.5L740.0 439.9L734.0 451.3L726.3 464.7L717.1 479.8L707.3 495.5L697.8 510.9L689.4 524.8L682.9 536.0L678.4 544.4L675.1 550.8L672.9 555.5L671.3 559.1L670.1 561.9L669.1 564.2L670.2 564.8L671.4 562.5L672.8 559.8L674.6 556.4L677.2 551.9L680.8 545.8L685.8 537.7L692.8 526.9L701.7 513.4L711.5 498.2L721.3 482.4L730.6 467.2L738.4 453.8L744.5 442.1L749.4 431.5L753.7 421.6L757.9 412.0L762.4 402.4L767.8 392.4L774.7 381.2L782.8 368.9L791.1 356.4L799.0 344.7L805.7 334.8L810.4 327.6Z" fill-opacity="0.08125"/>
<path d="M905.3 273.5L907.4 271.1L910.2 267.7L913.5 263.6L916.9 259.4L920.2 255.5L923.3 252.4L926.2 250.1L929.3 248.2L932.5 246.7L935.8 245.3L939.1 244.1L942.3 242.9L945.7 241.8L949.4 240.7L953.1 239.6L956.5 238.7L959.4 237.9L961.5 237.3L961.3 236.4L959.2 236.6L956.2 236.9L952.6 237.2L948.7 237.8L944.8 238.5L941.2 239.6L937.9 240.8L934.5 242.0L931.1 243.5L927.6 245.2L924.3 247.2L920.9 249.8L917.6 253.1L914.2 257.3L911.1 261.9L908.3 266.4L906.2 270.2L904.6 272.9Z" fill-opacity="0.17500000000000002"/>
<path d="M919.9 280.8L922.0 279.1L924.9 276.6L928.1 273.6L931.4 270.3L934.6 267.1L937.7 264.6L941.0 262.5L944.6 260.5L948.3 258.6L951.7 256.8L954.6 255.1L956.7 253.9L956.4 253.2L954.1 253.9L950.9 254.9L947.2 256.1L943.3 257.8L939.5 259.9L936.0 262.2L932.7 264.9L929.2 268.1L926.0 271.6L923.2 275.1L921.0 278.1L919.4 280.3Z" fill-opacity="0.125"/>
<path d="M900.2 236.5L901.7 235.3L903.8 233.4L906.1 231.2L908.4 228.8L910.8 226.6L912.9 224.9L914.9 223.6L917.2 222.6L919.5 221.6L921.6 220.8L923.4 220.0L924.6 219.4L924.5 218.9L923.1 219.2L921.2 219.5L918.9 220.0L916.5 220.8L914.0 221.9L911.7 223.2L909.4 225.1L907.0 227.3L904.7 229.8L902.6 232.3L901.0 234.6L899.8 236.2Z" fill-opacity="0.1"/>
<path d="M880.0 291.0C881.7 289.7 886.7 284.9 890.0 283.0C893.3 281.1 894.2 279.9 900.0 279.5C905.8 279.1 917.7 278.8 925.0 280.5C932.3 282.2 937.5 285.5 944.0 290.0C950.5 294.5 957.7 300.7 964.0 307.5C970.3 314.3 980.3 327.3 982.0 331.0C983.7 334.7 979.5 332.6 974.0 329.7C968.5 326.8 957.2 318.4 949.0 313.7C940.8 309.0 933.2 303.1 925.0 301.5C916.8 299.9 906.2 304.2 900.0 304.0C893.8 303.8 890.0 300.7 888.0 300.0Z" fill-opacity="0.17"/>
<path d="M884.2 288.3L885.8 287.7L888.1 286.7L890.7 285.6L893.7 284.5L896.9 283.7L900.2 283.2L903.8 282.9L907.8 282.8L912.2 282.9L916.5 283.2L920.7 283.7L924.6 284.5L928.2 285.6L931.7 287.0L935.1 288.8L938.4 290.7L941.8 292.9L945.1 295.2L948.5 297.8L952.0 300.7L955.4 303.7L958.8 306.9L962.0 310.0L965.0 312.9L968.0 315.9L970.8 319.0L973.6 322.1L976.1 325.0L978.2 327.5L979.7 329.2L980.3 328.8L978.9 326.9L977.1 324.2L974.9 321.1L972.4 317.7L969.7 314.3L967.0 311.1L964.0 308.0L960.8 304.7L957.5 301.5L953.9 298.4L950.4 295.4L946.9 292.8L943.4 290.4L940.0 288.2L936.5 286.1L933.0 284.3L929.3 282.8L925.4 281.5L921.2 280.7L916.8 280.2L912.2 280.0L907.8 280.0L903.6 280.4L899.8 280.8L896.4 281.7L893.1 282.9L890.1 284.3L887.6 285.7L885.4 286.8L883.8 287.7Z" fill-opacity="0.15"/>
<path d="M895.1 304.5L898.5 304.8L903.1 304.9L908.5 304.9L914.1 304.6L919.5 304.6L924.1 305.1L928.4 306.4L932.9 308.5L937.6 310.8L942.0 312.8L945.9 314.4L948.8 315.5L949.4 314.4L947.1 312.5L943.9 309.8L939.8 306.7L935.1 304.0L930.1 301.7L925.1 300.2L919.7 299.6L913.9 299.6L908.1 300.2L902.7 301.2L898.2 302.4L895.0 303.3Z" fill-opacity="0.1"/>
<path d="M900.3 354.0L903.0 353.8L906.5 353.4L910.8 352.8L915.4 352.2L920.2 351.6L925.1 350.9L930.6 350.3L936.9 349.9L943.6 349.6L950.2 349.4L956.2 349.5L961.1 349.4L965.1 349.5L968.5 349.8L971.5 350.2L974.2 350.7L976.5 351.2L978.3 351.5L979.0 349.7L977.5 348.7L975.6 347.4L973.1 345.9L970.0 344.3L966.2 342.9L961.7 341.9L956.4 341.5L950.1 341.4L943.3 341.6L936.4 341.9L929.9 342.4L924.1 342.9L918.7 343.9L913.7 345.4L909.2 347.3L905.3 349.2L902.1 350.9L899.7 352.1Z" fill-opacity="0.08750000000000001"/>
<path d="M1079.1 309.2L1083.6 312.4L1089.9 316.7L1097.3 321.8L1105.2 327.3L1113.0 333.0L1120.0 338.5L1126.3 343.8L1132.5 349.3L1138.5 354.9L1144.5 360.7L1150.5 366.6L1156.5 372.9L1162.9 379.5L1169.4 386.5L1176.0 393.7L1182.3 400.9L1188.1 407.9L1193.2 414.4L1197.5 420.5L1201.1 426.4L1204.3 432.0L1207.2 437.5L1209.9 443.0L1212.7 448.5L1215.5 454.1L1218.1 459.6L1220.7 465.1L1223.0 470.5L1225.3 475.6L1227.5 480.4L1229.6 484.9L1231.8 489.5L1233.9 493.7L1235.8 497.6L1237.4 500.8L1238.6 503.1L1239.5 502.7L1238.7 500.2L1237.6 496.8L1236.2 492.8L1234.7 488.3L1232.9 483.5L1231.0 478.8L1229.0 474.0L1226.7 468.9L1224.3 463.5L1221.8 457.9L1219.1 452.3L1216.3 446.7L1213.5 441.2L1210.7 435.7L1207.8 430.1L1204.6 424.3L1200.8 418.3L1196.4 412.1L1191.2 405.4L1185.3 398.3L1179.0 391.0L1172.4 383.8L1165.8 376.7L1159.4 370.1L1153.3 363.8L1147.3 357.8L1141.2 352.0L1135.1 346.3L1128.8 340.9L1122.2 335.7L1114.9 330.4L1106.8 325.0L1098.6 319.8L1090.9 315.2L1084.3 311.3L1079.6 308.4Z" fill-opacity="0.1375"/>
<path d="M913.1 420.7L913.5 424.2L914.0 429.1L914.6 434.9L915.5 441.2L916.7 447.3L918.2 453.0L919.9 458.2L921.9 463.4L924.0 468.6L926.2 473.6L928.4 478.3L930.6 482.7L933.0 487.0L935.6 491.2L938.2 495.2L940.9 498.6L943.3 501.2L945.1 503.1L945.8 502.7L944.6 500.3L942.9 497.1L940.7 493.5L938.1 489.6L935.6 485.5L933.3 481.3L931.1 477.0L928.9 472.3L926.7 467.4L924.6 462.3L922.8 457.2L921.1 452.1L919.7 446.7L918.3 440.6L917.0 434.5L915.8 428.8L914.7 424.0L913.9 420.6Z" fill-opacity="0.17500000000000002"/>
<path d="M580.7 499.8L578.3 504.7L575.0 511.4L571.5 519.5L568.1 528.3L565.0 537.3L562.6 545.6L560.7 553.3L559.0 561.1L557.6 568.8L556.5 576.6L555.6 584.3L555.2 592.1L555.0 600.0L555.2 608.0L555.7 616.0L556.5 623.8L557.6 631.4L558.9 638.7L560.5 645.6L562.4 652.2L564.6 658.5L567.0 664.6L569.6 670.3L572.3 675.9L575.5 681.3L579.1 686.7L582.9 691.9L586.5 696.5L589.6 700.3L591.8 703.1L592.6 702.5L590.6 699.5L587.8 695.5L584.6 690.7L581.2 685.4L577.9 679.9L575.2 674.4L572.7 668.9L570.4 663.2L568.2 657.2L566.2 651.0L564.3 644.6L562.8 637.9L561.5 630.8L560.5 623.4L559.7 615.6L559.2 607.8L559.0 600.0L559.2 592.3L559.6 584.7L560.4 577.1L561.5 569.5L562.9 561.8L564.6 554.2L566.5 546.6L568.9 538.5L571.9 529.7L575.1 520.9L577.9 512.5L580.1 505.4L581.6 500.2Z" fill-opacity="0.1"/>
<path d="M545.6 564.5L544.8 569.5L543.7 576.4L542.5 584.6L541.4 593.4L540.6 602.3L540.4 610.6L540.7 618.6L541.3 626.7L542.1 634.8L543.2 642.7L544.5 650.3L546.0 657.2L547.5 663.4L549.1 669.2L550.9 674.6L553.1 679.7L555.9 684.6L559.4 689.3L564.2 693.9L570.2 698.2L576.6 702.2L582.9 705.6L588.2 708.5L591.9 710.6L592.5 709.8L588.9 707.3L583.9 703.9L578.0 700.0L572.0 695.7L566.5 691.2L562.3 686.8L559.2 682.5L556.7 677.9L554.6 673.2L552.9 668.0L551.4 662.4L549.9 656.3L548.4 649.5L547.2 642.1L546.1 634.3L545.3 626.4L544.7 618.4L544.4 610.6L544.4 602.5L544.8 593.7L545.3 584.8L545.8 576.6L546.3 569.6L546.6 564.6Z" fill-opacity="0.08750000000000001"/>
<path d="M646.2 573.9L647.0 577.0L648.3 581.3L649.8 586.3L651.5 591.7L653.3 597.1L655.1 602.0L656.6 606.6L658.1 611.2L659.6 615.8L661.1 620.4L662.6 625.0L664.3 629.7L666.2 634.6L668.4 639.9L670.8 645.1L673.1 649.9L675.1 654.0L676.6 656.9L677.4 656.5L676.4 653.4L675.0 649.2L673.3 644.1L671.4 638.7L669.4 633.4L667.6 628.5L666.0 623.9L664.4 619.3L662.9 614.7L661.4 610.1L659.9 605.5L658.4 600.8L656.6 595.9L654.5 590.6L652.3 585.4L650.2 580.6L648.3 576.5L647.0 573.6Z" fill-opacity="0.125"/>
<path d="M730.0 629.2L730.5 632.4L731.3 636.8L732.5 642.0L734.1 647.4L735.9 652.7L737.8 657.5L740.0 662.1L742.4 666.8L745.1 671.3L747.9 675.3L750.3 678.6L752.1 680.9L753.0 680.4L751.9 677.7L750.3 673.9L748.3 669.5L745.9 664.9L743.6 660.3L741.5 655.9L739.7 651.3L737.9 646.1L736.1 640.8L734.1 635.9L732.3 631.8L730.9 628.9Z" fill-opacity="0.17500000000000002"/>
<path d="M718.3 670.7L721.0 670.7L724.7 670.5L729.1 670.4L733.9 670.2L738.5 670.1L742.8 670.2L746.9 670.3L751.1 670.6L755.3 671.1L759.4 671.7L763.3 672.4L767.0 673.2L770.3 674.2L773.5 675.4L776.4 676.7L779.3 678.1L782.2 679.5L785.1 680.9L788.1 682.4L791.3 684.1L794.4 685.8L797.3 687.4L799.8 688.7L801.6 689.7L802.1 688.9L800.4 687.7L798.2 686.0L795.5 684.0L792.6 681.9L789.6 679.9L786.6 678.1L783.8 676.5L780.9 674.9L777.9 673.5L774.8 672.1L771.4 670.9L767.9 669.8L764.0 668.9L760.0 668.2L755.7 667.6L751.4 667.2L747.1 666.9L742.9 666.7L738.4 666.8L733.6 667.3L728.9 667.9L724.6 668.7L720.9 669.4L718.2 669.8Z" fill-opacity="0.35000000000000003"/>
<path d="M705.3 701.5L704.5 703.8L703.5 707.1L702.3 711.0L701.2 715.3L700.6 719.7L700.6 724.0L701.2 728.1L702.1 732.2L703.4 736.3L704.9 740.3L706.5 744.0L708.3 747.4L710.3 750.3L712.6 753.0L715.0 755.4L717.6 757.5L720.3 759.3L723.3 760.7L726.8 761.7L730.6 762.0L734.3 762.0L737.8 761.7L740.7 761.5L742.8 761.3L742.9 759.8L740.8 759.4L738.0 758.9L734.6 758.2L731.2 757.5L728.1 756.6L725.5 755.5L723.3 754.2L721.1 752.7L719.0 751.0L717.0 749.0L715.2 746.8L713.5 744.3L711.9 741.4L710.4 738.0L709.1 734.4L707.9 730.7L707.1 726.9L706.5 723.4L706.2 719.8L706.2 715.8L706.3 711.6L706.5 707.6L706.7 704.2L706.7 701.7Z" fill-opacity="0.25"/>
<path d="M700.0 701.1L702.7 701.2L706.6 701.2L711.0 701.1L715.8 700.7L720.4 700.1L724.7 699.7L728.9 699.4L733.3 699.2L737.8 699.1L742.0 699.2L745.7 699.1L748.6 699.0L750.6 699.2L752.1 699.6L753.2 700.2L754.2 700.9L755.1 701.6L755.8 702.1L756.9 701.1L756.5 700.4L756.0 699.4L755.2 698.1L753.9 696.7L752.0 695.4L749.4 694.3L746.1 693.6L742.2 693.2L737.8 693.1L733.2 693.2L728.6 693.4L724.2 693.7L719.7 694.1L714.9 694.8L710.2 695.9L705.9 697.3L702.3 698.7L699.7 699.6Z" fill-opacity="0.35000000000000003"/>
<path d="M746.8 701.9L746.6 703.4L746.5 705.5L746.4 707.8L746.3 710.0L746.4 711.9L746.3 713.2L745.8 714.6L745.0 716.5L743.8 718.5L742.5 720.4L741.2 722.1L740.3 723.2L739.7 724.0L738.8 724.8L737.7 725.6L736.3 726.4L735.0 727.1L734.1 727.6L734.4 729.6L735.4 729.9L736.7 730.3L738.5 730.7L740.7 730.8L743.1 730.4L745.4 729.1L747.3 727.3L749.0 725.2L750.6 722.8L752.1 720.2L753.3 717.5L754.2 714.6L754.3 711.5L753.7 708.6L752.5 706.1L751.0 704.0L749.7 702.5L748.7 701.3Z" fill-opacity="0.4375"/>
<path d="M650.4 752.1L651.1 755.2L652.0 759.5L653.2 764.5L654.8 769.8L656.5 774.9L658.1 779.4L659.8 783.6L661.7 787.7L663.6 791.7L665.4 795.3L667.3 798.2L668.9 800.1L669.4 799.9L668.8 797.4L667.7 794.2L665.9 790.6L664.0 786.7L662.1 782.6L660.5 778.5L658.9 774.1L657.2 769.0L655.6 763.8L653.8 758.9L652.2 754.8L651.0 751.9Z" fill-opacity="0.1"/>
<path d="M725.2 773.1L725.6 775.4L726.4 778.7L727.7 782.3L729.4 786.0L731.1 789.4L732.5 792.2L733.8 794.5L735.1 796.4L736.3 798.0L737.5 799.2L738.9 799.9L740.0 800.3L740.8 799.7L740.7 798.5L740.3 797.0L739.5 795.6L738.3 794.1L737.2 792.3L736.0 790.3L734.7 787.7L733.1 784.3L731.4 780.7L729.5 777.3L727.6 774.5L726.1 772.6Z" fill-opacity="0.1"/>
<path d="M736.4 650.2L736.7 652.1L737.6 654.5L739.1 657.1L740.7 659.9L742.4 662.7L744.0 665.5L745.7 668.4L747.6 671.7L749.5 675.0L751.6 678.0L753.4 680.4L754.8 682.1L755.5 681.8L754.7 679.7L753.5 676.8L752.0 673.5L750.2 670.2L748.3 666.9L746.6 664.0L745.0 661.2L743.3 658.3L741.7 655.5L740.2 653.0L738.5 651.0L737.0 649.8Z" fill-opacity="0.25"/>
<path d="M903.9 540.9L904.9 544.8L906.3 550.1L907.9 556.3L909.8 563.1L911.8 569.9L914.0 576.4L916.3 582.5L918.8 588.6L921.5 594.8L924.3 601.0L927.4 607.3L930.6 613.5L934.2 619.7L938.1 626.1L942.1 632.5L946.3 638.7L950.5 644.8L954.8 650.5L959.4 656.2L964.5 661.9L969.6 667.3L974.4 672.2L978.5 676.3L981.5 679.4L982.0 678.9L979.3 675.6L975.5 671.2L971.0 666.0L966.2 660.3L961.5 654.4L957.1 648.7L953.0 643.0L948.8 637.0L944.6 630.8L940.6 624.5L936.8 618.2L933.3 612.0L930.0 605.9L927.0 599.7L924.2 593.6L921.6 587.4L919.1 581.4L916.7 575.4L914.3 569.1L911.9 562.4L909.7 555.8L907.7 549.7L905.9 544.5L904.7 540.7Z" fill-opacity="0.125"/>
<path d="M931.5 480.2L932.7 483.4L934.4 487.8L936.6 492.9L939.2 498.4L942.1 503.7L945.0 508.7L947.8 513.3L950.7 517.9L953.7 522.6L956.8 527.2L960.1 531.9L963.6 536.5L967.3 541.2L971.3 546.0L975.4 550.7L979.6 555.4L983.7 559.9L987.7 564.3L991.5 568.4L995.1 572.4L998.8 576.2L1002.5 580.1L1006.2 583.9L1010.2 587.9L1014.7 592.3L1019.7 597.1L1024.9 602.0L1029.7 606.5L1033.8 610.3L1036.7 613.1L1037.4 612.4L1034.6 609.5L1030.8 605.4L1026.2 600.7L1021.3 595.6L1016.5 590.5L1012.3 585.9L1008.5 581.8L1004.9 577.8L1001.3 573.9L997.8 569.9L994.3 565.9L990.6 561.7L986.6 557.2L982.5 552.7L978.4 548.0L974.3 543.4L970.4 538.7L966.7 534.1L963.3 529.5L960.1 525.0L957.0 520.4L954.1 515.8L951.2 511.2L948.4 506.6L945.6 501.7L942.7 496.5L939.8 491.3L936.9 486.5L934.3 482.6L932.4 479.8Z" fill-opacity="0.1625"/>
<path d="M907.1 689.6L911.5 689.1L917.5 688.4L924.6 687.6L932.3 686.5L939.9 685.3L946.9 684.0L953.7 682.7L960.6 681.2L967.6 679.6L974.2 678.1L980.3 676.7L985.6 675.6L990.2 674.8L994.4 674.2L998.0 673.7L1001.2 673.4L1003.7 673.2L1005.7 673.0L1005.7 672.4L1003.7 672.4L1001.1 672.4L997.9 672.4L994.2 672.5L990.0 672.8L985.2 673.4L979.8 674.3L973.7 675.6L967.0 677.1L960.1 678.7L953.2 680.2L946.5 681.6L939.5 682.8L931.9 684.1L924.3 685.5L917.3 686.9L911.3 688.1L907.0 688.9Z" fill-opacity="0.25"/>
<path d="M950.0 674.5L951.5 672.3L953.4 669.1L955.7 665.5L958.2 661.7L961.0 658.3L964.0 655.5L967.3 653.2L971.1 650.9L975.3 648.8L979.6 646.8L984.2 645.1L988.9 643.5L993.8 642.2L999.1 641.0L1004.6 640.1L1010.1 639.4L1015.5 638.8L1020.4 638.5L1025.0 638.4L1029.5 638.5L1033.8 638.7L1038.0 639.1L1042.0 639.4L1045.8 639.7L1049.4 640.0L1053.0 640.4L1056.4 640.9L1059.5 641.3L1062.1 641.7L1064.0 642.0L1064.3 640.6L1062.5 639.9L1060.0 639.1L1057.1 638.1L1053.7 637.0L1050.1 636.0L1046.4 635.2L1042.7 634.4L1038.6 633.7L1034.4 633.0L1029.8 632.6L1025.1 632.4L1020.2 632.5L1015.0 632.9L1009.4 633.4L1003.7 634.2L998.0 635.1L992.4 636.3L987.2 637.8L982.2 639.4L977.3 641.3L972.6 643.4L968.2 645.8L964.1 648.5L960.5 651.6L957.4 655.3L954.8 659.5L952.7 663.9L951.0 668.0L949.7 671.4L948.7 673.8Z" fill-opacity="0.275"/>
<path d="M1064.8 669.3L1065.2 671.1L1065.8 673.5L1066.5 676.2L1067.2 679.2L1067.7 682.0L1067.8 684.7L1067.6 687.3L1067.3 690.3L1066.7 693.5L1065.9 696.7L1065.0 699.8L1064.0 702.7L1062.7 705.6L1061.2 708.5L1059.6 711.3L1057.8 714.0L1056.0 716.5L1054.4 718.7L1052.6 720.7L1050.5 722.7L1048.4 724.6L1046.2 726.4L1044.4 727.9L1043.1 729.0L1043.9 730.3L1045.5 729.6L1047.7 728.8L1050.3 727.7L1053.1 726.3L1055.9 724.6L1058.5 722.5L1060.7 720.1L1062.7 717.4L1064.7 714.5L1066.5 711.4L1068.1 708.2L1069.5 705.0L1070.7 701.7L1071.7 698.2L1072.6 694.7L1073.2 691.2L1073.5 687.7L1073.4 684.3L1072.8 681.0L1071.5 677.8L1070.0 674.9L1068.4 672.3L1067.1 670.2L1066.1 668.7Z" fill-opacity="0.275"/>
<path d="M1006.1 665.1C1010.6 664.7 1025.2 661.5 1033.2 662.6C1041.2 663.6 1049.8 666.7 1053.8 671.6C1057.9 676.5 1057.7 687.1 1057.7 692.2C1057.7 697.4 1056.4 701.7 1053.8 702.6C1051.3 703.4 1045.2 700.8 1042.2 697.4C1039.2 694.0 1039.4 686.2 1035.8 681.9C1032.1 677.6 1022.9 673.3 1020.3 671.6Z" fill-opacity="0.42"/>
<path d="M981.6 689.7C984.8 689.2 997.3 684.9 1000.9 687.1C1004.6 689.2 1004.6 699.5 1003.5 702.6C1002.5 705.6 998.2 705.1 994.5 705.1C990.8 705.1 983.7 703.0 981.6 702.6Z" fill-opacity="0.28"/>
<path d="M930.1 684.8L933.0 684.7L936.9 684.3L941.5 683.5L946.5 682.5L951.4 681.5L956.0 680.6L960.4 679.7L964.8 678.7L969.1 677.8L973.4 676.9L977.7 676.1L981.8 675.4L986.0 674.8L990.5 674.1L994.9 673.5L999.0 672.9L1002.4 672.3L1004.9 671.9L1004.8 671.3L1002.3 671.4L998.8 671.5L994.7 671.7L990.3 671.9L985.7 672.4L981.4 672.9L977.2 673.7L972.9 674.5L968.6 675.4L964.2 676.3L959.9 677.2L955.6 678.1L951.0 679.0L946.0 680.0L941.0 681.0L936.5 682.0L932.7 683.2L929.9 684.2Z" fill-opacity="0.275"/>
<path d="M1078.4 664.2L1081.1 664.4L1085.0 664.5L1089.5 664.6L1094.4 664.5L1099.4 664.3L1104.2 664.1L1109.3 663.9L1114.9 663.8L1120.6 663.6L1126.0 663.2L1130.6 662.7L1133.8 662.3L1133.8 661.5L1130.5 661.3L1126.0 660.9L1120.6 660.7L1114.8 660.8L1109.2 660.9L1104.1 661.1L1099.3 661.3L1094.2 661.5L1089.3 661.9L1084.8 662.5L1081.1 663.0L1078.3 663.5Z" fill-opacity="0.125"/>
<path d="M1226.4 480.2L1227.7 483.8L1229.5 488.6L1231.6 494.3L1233.9 500.7L1236.2 507.3L1238.3 513.9L1240.4 520.6L1242.7 527.8L1245.0 535.3L1247.2 542.9L1249.4 550.5L1251.2 558.0L1252.9 565.3L1254.4 572.6L1255.8 580.0L1257.0 587.3L1258.0 594.6L1258.9 602.0L1259.7 609.3L1260.3 616.6L1260.8 623.9L1261.2 631.2L1261.3 638.5L1261.1 645.8L1260.7 653.2L1260.1 660.6L1259.3 668.0L1258.3 675.4L1257.1 682.6L1255.6 689.7L1254.0 696.6L1252.0 703.4L1249.8 710.2L1247.5 716.7L1245.0 723.0L1242.5 729.1L1240.1 734.5L1238.0 739.2L1235.7 743.6L1233.0 748.2L1229.5 753.3L1225.1 759.6L1219.3 767.3L1212.4 776.3L1204.7 785.8L1196.8 795.3L1189.0 803.9L1181.6 811.1L1174.8 816.8L1168.0 821.4L1161.3 825.3L1154.5 828.8L1147.7 832.1L1140.9 835.5L1133.8 839.1L1126.4 842.6L1119.1 845.9L1112.1 849.2L1105.6 852.1L1100.0 854.8L1095.2 857.0L1091.0 859.0L1087.4 860.6L1084.3 862.0L1081.8 863.1L1079.8 864.0L1080.2 865.1L1082.3 864.4L1084.9 863.5L1088.1 862.5L1091.9 861.2L1096.3 859.6L1101.3 857.7L1107.1 855.5L1113.7 853.0L1120.9 850.1L1128.4 846.8L1135.8 843.4L1143.0 839.8L1149.8 836.3L1156.7 833.0L1163.6 829.5L1170.5 825.4L1177.6 820.6L1184.8 814.7L1192.4 807.2L1200.4 798.4L1208.4 788.8L1216.1 779.2L1223.1 770.2L1228.9 762.4L1233.5 756.1L1237.0 750.7L1239.8 745.9L1242.2 741.2L1244.5 736.4L1246.9 730.9L1249.4 724.8L1252.0 718.4L1254.3 711.7L1256.6 704.8L1258.5 697.8L1260.3 690.7L1261.8 683.5L1263.0 676.1L1264.1 668.6L1264.9 661.1L1265.5 653.5L1265.9 646.0L1266.0 638.6L1265.9 631.1L1265.6 623.7L1265.1 616.2L1264.4 608.8L1263.6 601.4L1262.7 594.0L1261.7 586.6L1260.4 579.1L1259.1 571.7L1257.5 564.3L1255.8 556.9L1253.9 549.3L1251.8 541.6L1249.5 533.9L1247.1 526.4L1244.7 519.2L1242.2 512.5L1239.6 506.0L1236.8 499.5L1234.0 493.3L1231.4 487.8L1229.2 483.2L1227.5 479.8Z" fill-opacity="0.10625000000000001"/>
<path d="M1220.1 694.4L1218.1 696.9L1215.3 700.3L1212.0 704.3L1208.5 708.8L1205.0 713.5L1201.6 718.2L1198.4 723.0L1195.1 728.1L1191.6 733.4L1188.2 738.7L1184.9 744.1L1181.7 749.3L1178.4 754.7L1174.9 760.5L1171.6 766.3L1168.5 771.6L1166.3 776.4L1164.8 779.8L1165.3 780.2L1167.6 777.1L1170.6 772.8L1173.7 767.5L1177.1 761.8L1180.5 756.0L1183.8 750.6L1187.0 745.4L1190.4 740.1L1193.8 734.7L1197.1 729.5L1200.5 724.4L1203.7 719.6L1206.9 714.9L1210.2 710.1L1213.5 705.4L1216.4 701.1L1218.8 697.5L1220.6 694.8Z" fill-opacity="0.17500000000000002"/>
<path d="M616.8 843.6L617.8 846.7L619.3 851.1L621.2 856.2L623.6 861.5L626.6 866.5L629.9 871.0L633.4 874.8L637.3 878.5L641.4 881.9L645.4 885.0L649.3 887.7L652.8 889.8L656.3 891.4L659.6 892.5L662.6 893.0L665.2 893.4L667.3 893.5L668.8 893.7L669.3 892.3L667.8 891.6L665.8 890.8L663.6 889.8L661.1 888.5L658.5 887.0L655.8 885.1L652.6 882.8L649.0 880.2L645.1 877.2L641.3 874.0L637.7 870.6L634.5 867.2L631.6 863.2L628.7 858.6L625.7 853.8L622.7 849.3L620.1 845.6L618.1 842.9Z" fill-opacity="0.075"/>
<path d="M690.8 850.7L691.7 854.8L692.9 860.5L694.4 867.3L696.2 874.5L698.3 881.7L700.6 888.1L703.3 894.0L706.2 899.8L709.2 905.5L712.5 911.1L715.8 916.4L719.2 921.6L722.7 926.7L726.2 931.6L729.8 936.3L733.5 940.9L737.5 945.3L741.6 949.5L746.4 953.8L751.8 958.0L757.3 962.0L762.6 965.6L767.0 968.6L770.2 970.8L770.7 970.1L767.8 967.6L763.6 964.2L758.7 960.2L753.5 955.9L748.4 951.4L744.0 947.1L740.0 942.9L736.2 938.6L732.5 934.1L729.0 929.5L725.5 924.7L722.1 919.7L718.8 914.6L715.5 909.3L712.3 903.8L709.3 898.2L706.4 892.6L703.8 886.8L701.4 880.6L699.0 873.7L696.7 866.7L694.6 860.1L692.9 854.5L691.6 850.5Z" fill-opacity="0.1625"/>
<path d="M696.4 884.0L698.2 887.8L700.6 893.1L703.6 899.4L706.9 905.9L710.5 912.3L713.9 917.8L717.1 922.6L720.3 927.3L723.6 931.7L727.0 936.0L730.6 940.0L734.4 943.9L738.8 947.7L743.8 951.3L749.0 954.6L753.9 957.4L758.1 959.8L761.0 961.6L761.4 960.9L758.7 958.8L754.8 956.0L750.2 952.7L745.4 949.1L740.6 945.4L736.5 941.7L732.8 938.0L729.3 934.1L726.0 929.9L722.8 925.5L719.6 921.0L716.4 916.2L713.0 910.7L709.4 904.5L705.7 898.2L702.2 892.2L699.2 887.2L697.0 883.6Z" fill-opacity="0.125"/>
<path d="M689.1 885.3L687.6 886.3L685.4 887.6L682.9 889.2L680.2 891.1L677.6 893.4L675.3 895.9L673.3 898.7L671.5 901.8L669.8 905.2L668.2 908.8L666.8 912.6L665.5 916.5L664.5 920.3L663.5 924.0L662.7 927.9L662.0 932.2L661.4 937.0L660.9 942.7L660.4 949.9L660.0 958.6L659.6 968.0L659.4 976.9L659.7 984.6L660.3 990.0L661.2 990.0L662.1 984.7L662.9 977.0L663.1 968.1L663.5 958.8L663.9 950.1L664.3 942.9L664.9 937.4L665.5 932.7L666.2 928.5L666.9 924.8L667.8 921.2L668.9 917.5L670.1 913.8L671.4 910.1L672.8 906.6L674.3 903.3L675.9 900.3L677.5 897.5L679.4 895.0L681.6 892.7L684.0 890.6L686.3 888.7L688.2 887.2L689.6 886.0Z" fill-opacity="0.1625"/>
<path d="M701.9 918.5L700.3 919.9L698.1 921.7L695.5 923.9L692.7 926.5L690.1 929.5L687.9 932.7L686.0 936.2L684.4 939.9L683.0 943.9L681.6 948.1L680.4 952.5L679.3 957.2L678.4 962.6L677.6 968.7L676.9 975.1L676.4 981.1L676.5 986.3L676.9 990.0L677.8 990.0L678.9 986.5L679.9 981.4L680.4 975.4L681.1 969.1L681.8 963.1L682.8 957.9L683.8 953.4L685.0 949.1L686.3 945.0L687.7 941.2L689.2 937.7L690.8 934.4L692.7 931.4L694.8 928.3L697.1 925.5L699.3 922.9L701.2 920.8L702.6 919.1Z" fill-opacity="0.15"/>
<path d="M725.6 777.1L727.1 781.2L729.0 786.9L731.3 793.6L734.1 800.9L737.2 808.2L740.7 815.0L744.6 821.3L748.8 827.7L753.4 834.1L758.2 840.4L763.3 846.6L768.7 852.4L774.4 857.9L780.6 863.4L787.0 868.6L793.5 873.5L799.9 878.1L806.0 882.2L812.1 886.0L818.6 889.4L824.9 892.4L830.9 894.6L836.0 896.1L839.7 897.3L840.2 896.1L837.0 894.0L832.4 891.2L827.0 888.1L820.9 885.0L814.6 881.7L808.7 878.0L802.8 874.0L796.5 869.5L790.1 864.7L783.8 859.6L777.8 854.3L772.2 848.9L767.1 843.3L762.1 837.3L757.4 831.2L752.9 824.9L748.8 818.6L744.9 812.5L741.2 806.2L737.6 799.3L734.2 792.4L731.2 786.0L728.7 780.6L726.8 776.6Z" fill-opacity="0.075"/>
<path d="M727.4 830.9L729.6 833.9L732.5 837.9L736.0 842.8L740.2 847.9L744.9 852.8L750.0 857.1L755.4 860.7L761.1 864.1L767.2 867.2L773.6 870.3L780.4 873.2L787.7 876.0L796.1 878.9L805.8 881.8L815.8 884.6L825.3 887.2L833.6 888.2L839.7 888.3L840.2 886.6L834.9 883.6L827.1 880.4L817.7 877.9L807.7 875.1L798.2 872.3L790.1 869.5L783.1 866.7L776.5 863.9L770.3 861.0L764.5 857.9L759.1 854.8L754.0 851.5L749.1 847.9L744.2 843.8L739.5 839.6L735.1 835.6L731.5 832.2L728.7 829.7Z" fill-opacity="0.075"/>
<path d="M840.6 827.6C843.9 828.5 854.1 830.9 860.8 833.5C867.6 836.0 875.6 839.3 881.1 842.7C886.7 846.1 891.6 850.6 894.0 853.7C896.4 856.9 897.3 860.3 895.5 861.5C893.7 862.7 888.1 863.0 883.0 861.1C877.8 859.2 870.1 854.1 864.5 850.1C859.0 846.1 852.2 839.3 849.8 837.2Z" fill-opacity="0.33"/>
<path d="M846.1 909.1C848.5 910.3 856.8 914.3 860.8 916.4C864.8 918.6 865.4 920.4 870.1 922.0C874.7 923.5 881.7 924.7 888.5 925.6C895.3 926.6 908.2 926.1 910.6 927.5C913.1 928.9 907.9 932.1 903.2 933.9C898.6 935.8 888.5 938.1 883.0 938.6C877.4 939.0 873.4 938.6 870.1 936.7C866.7 934.9 863.9 929.0 862.7 927.5Z" fill-opacity="0.22"/>
<path d="M799.6 875.0L803.2 876.9L808.1 879.6L813.9 882.7L820.7 885.9L828.1 888.7L836.0 890.8L844.3 892.5L853.3 894.1L862.8 895.4L872.6 896.6L882.4 897.6L891.9 898.3L901.3 898.7L910.6 898.9L919.9 898.8L929.2 898.5L938.5 898.1L947.8 897.4L957.1 896.5L966.4 895.4L975.7 894.2L985.0 892.7L994.4 891.0L1003.7 889.0L1013.2 886.6L1022.9 883.9L1032.5 880.9L1041.9 877.9L1050.9 875.0L1059.3 872.3L1067.5 869.8L1075.7 867.0L1083.4 864.0L1090.3 861.0L1096.0 858.5L1100.3 856.5L1099.7 854.6L1095.1 855.4L1088.9 856.6L1081.6 858.0L1073.5 859.9L1065.2 862.2L1056.9 864.7L1048.5 867.3L1039.4 870.3L1030.1 873.3L1020.6 876.2L1011.1 878.9L1001.9 881.2L992.8 883.1L983.7 884.8L974.6 886.3L965.4 887.5L956.3 888.5L947.2 889.4L938.0 890.1L928.9 890.5L919.8 890.8L910.6 890.9L901.5 890.7L892.4 890.3L883.1 889.6L873.5 888.7L863.9 887.5L854.6 886.2L845.8 884.6L837.8 883.0L830.3 881.2L823.0 879.2L816.0 877.3L809.7 875.6L804.4 874.1L800.4 873.1Z" fill-opacity="0.08750000000000001"/>
<path d="M821.7 895.1L825.0 897.4L829.5 900.6L834.9 904.4L841.0 908.5L847.5 912.3L854.2 915.5L861.3 918.2L868.8 920.6L876.7 922.7L884.9 924.5L893.0 926.0L900.9 927.3L908.7 928.3L916.5 929.0L924.3 929.5L932.1 929.7L939.9 929.6L947.8 929.1L955.8 928.2L963.8 926.9L971.9 925.3L979.7 923.4L987.2 921.3L994.3 919.3L1001.4 917.1L1008.6 914.7L1015.5 912.1L1021.7 909.7L1026.9 907.7L1030.7 906.2L1030.2 904.5L1026.2 905.5L1020.8 906.9L1014.3 908.5L1007.3 910.3L1000.0 912.0L992.8 913.5L985.7 915.1L978.1 916.7L970.4 918.4L962.6 920.0L954.8 921.3L947.2 922.2L939.7 922.6L932.2 922.7L924.6 922.5L917.0 922.0L909.5 921.3L901.9 920.3L894.2 919.1L886.3 917.6L878.4 915.9L870.6 914.0L863.2 912.1L856.4 910.0L849.8 907.5L843.2 904.5L836.8 901.2L831.0 898.1L826.2 895.4L822.6 893.6Z" fill-opacity="0.0625"/>
<path d="M910.8 955.8L914.8 955.0L920.4 954.0L927.1 952.7L934.3 951.3L941.4 949.7L948.1 948.0L954.2 946.3L960.2 944.4L966.2 942.4L972.3 940.2L978.6 937.9L985.3 935.4L992.4 932.5L1000.0 929.5L1007.8 926.2L1015.7 923.0L1023.6 919.8L1031.3 916.9L1039.2 914.2L1047.4 911.6L1055.6 909.1L1063.6 906.7L1071.0 904.4L1077.4 902.2L1083.0 899.9L1087.8 897.4L1091.9 895.0L1095.4 892.7L1098.1 890.8L1100.2 889.3L1099.7 888.2L1097.2 889.1L1094.1 890.3L1090.3 891.8L1086.0 893.5L1081.1 895.4L1075.7 897.5L1069.4 899.7L1062.1 902.0L1054.2 904.4L1045.9 906.9L1037.6 909.5L1029.6 912.2L1021.8 915.2L1013.8 918.3L1005.9 921.6L998.1 924.8L990.6 927.9L983.5 930.7L976.8 933.2L970.5 935.5L964.5 937.7L958.7 939.8L952.8 941.8L946.9 943.8L940.4 945.9L933.4 948.0L926.4 950.0L919.9 951.8L914.4 953.4L910.5 954.5Z" fill-opacity="0.0625"/>
<path d="M800.1 970.9L804.2 971.3L809.8 971.5L816.4 971.0L823.5 970.2L830.6 969.4L837.2 968.7L843.3 968.0L849.4 967.3L855.6 966.5L861.8 965.7L867.9 964.7L874.1 963.6L880.7 962.3L887.7 960.7L894.8 958.9L901.3 957.3L906.8 955.8L910.7 954.8L910.5 953.6L906.4 954.3L900.8 955.2L894.2 956.3L887.1 957.5L880.0 958.6L873.4 959.6L867.3 960.3L861.2 961.0L855.0 961.7L848.9 962.3L842.7 963.0L836.6 963.7L830.0 964.5L822.9 965.3L815.9 966.0L809.3 966.9L803.9 968.4L799.9 969.6Z" fill-opacity="0.125"/>
<path d="M800.0 978.8L806.1 979.1L814.4 979.4L824.3 979.5L835.0 979.2L845.6 978.6L855.5 977.9L864.8 977.2L874.3 976.6L883.8 975.8L893.1 974.9L902.3 973.8L911.1 972.4L919.5 970.6L927.6 968.6L935.5 966.4L943.1 964.1L950.4 961.7L957.5 959.4L964.2 957.0L970.6 954.6L976.7 952.1L982.6 949.6L988.5 947.0L994.5 944.3L1000.7 941.5L1007.0 938.5L1013.4 935.5L1019.6 932.5L1025.5 929.7L1031.1 926.9L1036.5 924.3L1041.9 921.6L1047.0 919.0L1051.6 916.7L1055.5 914.7L1058.4 913.3L1057.8 912.2L1054.9 913.5L1050.9 915.2L1046.2 917.3L1040.9 919.6L1035.4 922.0L1029.9 924.3L1024.2 926.8L1018.1 929.4L1011.8 932.1L1005.4 934.9L999.0 937.6L992.7 940.2L986.6 942.7L980.7 945.2L974.8 947.6L968.8 950.0L962.5 952.3L955.9 954.6L948.9 957.0L941.6 959.3L934.1 961.6L926.4 963.8L918.4 965.8L910.2 967.4L901.6 968.8L892.6 969.9L883.3 970.8L873.9 971.6L864.5 972.3L855.1 972.9L845.3 973.6L834.7 974.2L824.1 974.8L814.3 975.8L806.0 976.8L800.0 977.6Z" fill-opacity="0.15"/>
<path d="M1100.0 947.3L1102.5 942.9L1105.8 936.8L1109.7 929.6L1114.0 921.8L1118.4 914.0L1122.8 906.7L1127.4 899.8L1132.3 892.6L1137.6 885.4L1143.0 878.4L1148.3 871.8L1153.6 865.7L1158.7 860.1L1163.9 854.9L1169.0 850.0L1174.2 845.4L1179.3 841.1L1184.3 836.9L1189.2 833.0L1194.0 829.3L1198.8 825.8L1203.6 822.6L1208.2 819.7L1212.6 817.0L1217.2 814.5L1221.9 812.3L1226.6 810.3L1230.8 808.6L1234.4 807.2L1237.1 806.1L1236.7 805.3L1234.1 806.2L1230.4 807.4L1226.1 808.9L1221.3 810.7L1216.4 812.7L1211.6 815.0L1207.0 817.6L1202.2 820.4L1197.3 823.5L1192.3 826.8L1187.2 830.4L1182.2 834.3L1177.1 838.4L1171.9 842.8L1166.7 847.4L1161.4 852.4L1156.2 857.7L1150.9 863.3L1145.6 869.6L1140.2 876.3L1134.8 883.3L1129.5 890.6L1124.5 897.8L1119.8 904.9L1115.4 912.3L1111.1 920.3L1107.3 928.4L1104.0 935.9L1101.2 942.3L1099.2 946.9Z" fill-opacity="0.2"/>
<path d="M1235.4 816.3L1237.0 813.5L1239.3 809.7L1241.9 805.3L1244.8 800.4L1247.9 795.7L1251.0 791.3L1254.1 787.2L1257.4 783.1L1260.8 778.9L1264.4 774.8L1268.0 770.9L1271.7 767.2L1275.5 763.7L1279.5 760.3L1283.6 757.0L1287.7 754.0L1291.8 751.3L1295.9 749.0L1299.9 747.1L1304.1 745.3L1308.2 743.9L1312.2 742.8L1315.9 742.2L1319.3 742.1L1322.5 742.5L1325.4 743.5L1328.3 744.8L1331.1 746.6L1333.8 748.6L1336.4 750.7L1338.7 753.1L1341.0 755.8L1343.1 758.8L1345.1 762.0L1346.9 765.2L1348.5 768.3L1349.8 771.6L1351.0 775.3L1351.9 779.2L1352.8 782.8L1353.4 786.0L1353.9 788.2L1355.2 788.0L1355.0 785.7L1354.9 782.6L1354.6 778.8L1354.2 774.6L1353.5 770.5L1352.4 766.7L1351.0 763.2L1349.2 759.6L1347.2 756.1L1344.9 752.8L1342.4 749.8L1339.8 747.1L1336.9 744.7L1334.0 742.4L1330.7 740.4L1327.3 738.8L1323.5 737.7L1319.6 737.1L1315.5 737.2L1311.2 737.9L1306.7 739.1L1302.3 740.6L1297.9 742.5L1293.5 744.6L1289.2 747.1L1284.9 749.9L1280.5 753.0L1276.3 756.4L1272.2 760.0L1268.2 763.6L1264.4 767.4L1260.6 771.5L1257.1 775.8L1253.7 780.2L1250.5 784.6L1247.6 789.1L1244.8 793.8L1242.1 798.9L1239.6 804.0L1237.4 808.8L1235.6 812.8L1234.3 815.7Z" fill-opacity="0.17500000000000002"/>
<path d="M1348.1 773.6L1347.2 779.0L1346.1 786.4L1344.7 795.1L1343.3 804.6L1342.0 814.1L1341.0 823.1L1340.2 831.7L1339.4 840.6L1338.8 849.5L1338.3 858.3L1338.0 866.8L1337.8 874.8L1337.9 882.5L1338.2 889.8L1338.7 896.9L1339.3 903.6L1340.1 910.1L1340.9 916.3L1342.0 922.2L1343.3 927.9L1344.7 933.2L1346.2 938.3L1347.8 943.0L1349.5 947.4L1351.2 951.6L1353.1 955.5L1355.0 959.1L1356.9 962.4L1358.7 965.3L1360.2 968.0L1361.6 970.4L1363.0 972.6L1364.1 974.4L1365.2 976.0L1366.0 977.2L1366.7 978.2L1367.2 977.9L1366.6 976.9L1365.8 975.6L1364.9 974.0L1363.8 972.1L1362.6 969.9L1361.3 967.4L1359.8 964.7L1358.2 961.6L1356.4 958.3L1354.7 954.7L1353.0 950.9L1351.4 946.7L1349.9 942.3L1348.4 937.6L1347.0 932.6L1345.7 927.3L1344.5 921.8L1343.4 915.9L1342.5 909.8L1341.8 903.4L1341.2 896.7L1340.7 889.7L1340.4 882.4L1340.3 874.8L1340.5 866.8L1340.8 858.4L1341.3 849.6L1341.9 840.7L1342.7 831.9L1343.4 823.3L1344.2 814.4L1345.2 804.8L1346.3 795.3L1347.3 786.5L1348.1 779.1L1348.7 773.7Z" fill-opacity="0.15"/>
<path d="M733.1 979.1L739.3 978.9L747.9 978.6L758.0 978.3L769.2 977.7L780.8 977.0L792.2 976.0L803.9 974.9L816.6 973.7L829.7 972.4L842.7 971.1L854.9 969.8L866.0 968.6L876.2 967.5L886.0 966.3L895.2 965.1L903.3 963.6L909.9 961.9L914.9 960.6L914.8 959.4L909.6 959.4L902.7 959.5L894.6 960.1L885.4 961.3L875.6 962.5L865.4 963.7L854.4 964.8L842.2 966.1L829.2 967.4L816.1 968.7L803.5 969.9L791.8 971.0L780.4 972.1L768.9 973.3L757.7 974.6L747.7 975.9L739.2 977.0L733.0 977.8Z" fill-opacity="0.1"/>
<path d="M660.2 960.0L659.8 964.0L659.4 969.6L659.1 976.1L658.8 983.2L658.5 990.2L657.8 996.7L656.8 1002.7L655.3 1008.8L653.6 1014.9L651.9 1021.0L650.4 1027.2L649.2 1033.5L648.3 1039.7L647.5 1046.0L646.9 1052.3L646.5 1058.6L646.5 1064.7L646.8 1070.7L647.5 1076.6L648.7 1082.4L650.2 1088.0L651.9 1093.4L653.7 1098.4L655.6 1103.0L657.6 1107.2L659.8 1110.9L662.1 1114.3L664.4 1117.4L666.6 1120.1L668.5 1122.6L670.3 1124.9L672.1 1126.9L673.8 1128.7L675.3 1130.1L676.5 1131.3L677.5 1132.2L678.0 1131.7L677.1 1130.7L676.0 1129.5L674.6 1127.9L673.1 1126.1L671.4 1124.0L669.8 1121.7L668.0 1119.1L666.0 1116.2L663.9 1113.1L661.8 1109.7L659.9 1106.0L658.1 1102.0L656.4 1097.5L654.7 1092.5L653.1 1087.2L651.6 1081.7L650.5 1076.1L649.7 1070.4L649.5 1064.7L649.5 1058.7L649.9 1052.6L650.5 1046.3L651.3 1040.1L652.2 1034.0L653.3 1027.9L654.8 1021.8L656.5 1015.7L658.2 1009.5L659.7 1003.3L660.8 997.1L661.5 990.4L661.8 983.3L661.9 976.1L661.6 969.6L661.2 964.0L660.9 960.0Z" fill-opacity="0.1625"/>
<path d="M678.6 960.0L677.1 964.8L676.8 969.7L676.5 974.6L676.2 979.6L676.1 984.5L676.6 989.5L677.4 989.5L678.6 984.7L679.2 979.8L679.5 974.8L679.8 969.9L680.1 965.0L679.3 960.0Z" fill-opacity="0.15"/>
<path d="M661.5 984.6L661.7 990.0L662.1 997.4L662.7 1006.2L663.5 1015.6L664.5 1025.1L665.4 1033.8L666.5 1042.6L667.6 1052.1L668.9 1061.5L670.3 1070.2L671.6 1077.6L672.5 1082.9L673.1 1082.8L672.7 1077.4L672.1 1070.0L671.2 1061.2L670.1 1051.8L668.9 1042.3L667.9 1033.6L667.0 1024.8L666.0 1015.4L665.0 1006.0L663.9 997.2L662.9 989.9L662.1 984.5Z" fill-opacity="0.0625"/>
<path d="M716.7 1029.8L715.1 1032.2L712.9 1035.5L710.3 1039.5L707.6 1043.9L704.9 1048.4L702.6 1052.9L700.6 1057.4L698.7 1062.0L696.9 1066.8L695.2 1071.8L693.6 1077.1L692.2 1082.5L690.9 1088.3L689.8 1094.3L688.8 1100.6L688.0 1107.0L687.4 1113.4L687.0 1119.6L686.9 1125.9L687.0 1132.2L687.4 1138.6L687.9 1144.8L688.6 1150.9L689.5 1156.9L690.7 1162.7L692.0 1168.5L693.6 1174.3L695.3 1179.7L697.3 1184.8L699.6 1189.3L702.0 1193.1L704.6 1196.2L707.3 1198.8L710.3 1201.3L713.5 1203.9L717.2 1206.9L721.5 1210.7L726.4 1214.8L731.6 1219.2L736.9 1223.5L742.1 1227.6L746.9 1231.3L751.4 1234.7L755.8 1237.9L760.0 1240.9L764.1 1243.7L768.0 1246.2L771.8 1248.4L775.4 1250.2L778.7 1251.7L781.9 1252.8L785.0 1253.8L788.3 1254.7L791.8 1255.6L796.0 1256.4L800.6 1257.1L805.4 1257.7L809.9 1258.2L813.8 1258.6L816.5 1259.0L816.6 1258.1L813.9 1257.7L810.1 1257.2L805.6 1256.6L800.8 1255.8L796.2 1255.0L792.2 1254.1L788.7 1253.1L785.5 1252.2L782.5 1251.2L779.4 1249.9L776.3 1248.4L772.8 1246.6L769.2 1244.3L765.3 1241.8L761.4 1239.0L757.2 1235.9L753.0 1232.6L748.6 1229.2L743.9 1225.4L738.8 1221.2L733.5 1216.8L728.4 1212.4L723.6 1208.2L719.4 1204.5L715.7 1201.3L712.4 1198.7L709.6 1196.3L707.1 1193.9L704.8 1191.1L702.6 1187.7L700.5 1183.4L698.6 1178.5L696.9 1173.3L695.4 1167.7L694.1 1162.0L693.0 1156.3L692.1 1150.5L691.4 1144.5L690.8 1138.3L690.5 1132.1L690.4 1125.9L690.5 1119.8L690.9 1113.6L691.4 1107.3L692.2 1101.0L693.1 1094.9L694.1 1088.9L695.2 1083.2L696.4 1077.8L697.8 1072.6L699.3 1067.7L700.9 1062.9L702.7 1058.3L704.5 1053.8L706.6 1049.3L709.0 1044.7L711.5 1040.2L713.9 1036.2L716.0 1032.8L717.4 1030.3Z" fill-opacity="0.1625"/>
<path d="M819.3 1255.1L821.5 1252.8L824.4 1249.5L827.7 1245.6L831.0 1241.3L834.3 1237.2L837.3 1233.8L840.3 1230.8L843.6 1227.8L846.7 1225.0L849.6 1222.3L852.0 1220.0L853.7 1218.3L853.2 1217.7L851.1 1219.0L848.3 1220.8L845.1 1223.0L841.6 1225.6L838.3 1228.6L835.1 1231.7L832.0 1235.3L828.7 1239.4L825.4 1243.8L822.5 1248.1L820.3 1251.9L818.7 1254.6Z" fill-opacity="0.125"/>
<path d="M856.2 1240.4L858.9 1238.0L862.5 1234.6L866.6 1230.5L871.0 1225.9L875.4 1221.3L879.4 1216.9L883.5 1212.7L887.9 1208.3L892.3 1203.9L896.6 1199.7L900.5 1195.7L903.8 1192.2L906.6 1189.2L909.0 1186.4L911.0 1184.0L912.7 1182.0L914.1 1180.3L915.2 1179.0L914.5 1178.3L913.2 1179.4L911.5 1180.8L909.5 1182.5L907.1 1184.6L904.3 1186.9L901.3 1189.7L897.8 1192.9L893.8 1196.8L889.5 1201.1L885.0 1205.5L880.7 1209.9L876.5 1214.2L872.4 1218.6L868.2 1223.3L864.2 1228.2L860.6 1232.9L857.6 1236.9L855.5 1239.8Z" fill-opacity="0.0625"/>
<path d="M880.6 1190.1L884.2 1189.1L889.0 1187.7L894.9 1186.0L901.4 1184.1L908.3 1182.2L915.3 1180.1L922.6 1178.0L930.4 1175.7L938.6 1173.3L947.0 1170.8L955.7 1168.2L964.5 1165.6L974.1 1162.8L984.7 1159.8L995.5 1156.7L1005.7 1153.8L1014.1 1150.8L1020.1 1148.4L1019.9 1147.5L1013.5 1148.6L1004.8 1150.5L994.6 1153.3L983.7 1156.4L973.1 1159.5L963.5 1162.3L954.7 1164.8L946.0 1167.4L937.6 1169.9L929.4 1172.4L921.6 1174.9L914.4 1177.2L907.4 1179.6L900.7 1181.9L894.3 1184.2L888.6 1186.3L883.8 1188.0L880.3 1189.3Z" fill-opacity="0.17500000000000002"/>
<path d="M1000.1 1155.7L1011.0 1152.4L1026.0 1147.5L1043.6 1141.5L1062.5 1134.6L1081.4 1127.8L1098.9 1121.3L1115.3 1115.3L1131.7 1109.1L1148.0 1103.0L1164.4 1096.8L1180.8 1090.6L1197.2 1084.5L1214.0 1078.2L1231.4 1071.6L1248.8 1065.1L1265.6 1058.7L1281.3 1052.9L1295.4 1047.6L1308.2 1042.8L1320.0 1038.3L1330.8 1034.3L1340.2 1030.7L1348.0 1027.8L1354.0 1025.5L1353.7 1024.7L1347.6 1026.6L1339.7 1029.1L1330.1 1032.2L1319.1 1035.8L1307.1 1039.9L1294.3 1044.4L1280.1 1049.6L1264.4 1055.5L1247.5 1061.8L1230.2 1068.3L1212.8 1074.9L1195.9 1081.2L1179.6 1087.4L1163.2 1093.5L1146.8 1099.7L1130.4 1105.9L1114.0 1112.0L1097.7 1118.1L1080.2 1124.5L1061.3 1131.3L1042.4 1138.2L1025.0 1144.7L1010.4 1150.6L999.9 1154.9Z" fill-opacity="0.1625"/></g>
<g><path d="M823.4 252.9L817.1 252.9L808.2 252.8L797.6 252.8L786.4 252.9L775.5 253.3L765.6 254.2L756.8 255.5L748.2 257.2L739.8 259.1L731.7 261.4L723.9 263.8L716.4 266.5L709.2 269.4L702.3 272.5L695.7 275.9L689.3 279.5L683.1 283.4L676.9 287.5L670.8 291.9L664.7 296.6L658.7 301.5L653.0 306.7L647.6 311.9L642.4 317.0L637.6 322.5L633.1 328.2L628.8 334.0L624.9 339.7L621.3 344.8L618.0 349.2L615.2 352.8L612.6 355.9L610.4 358.6L608.6 360.8L607.1 362.6L605.9 364.0L606.1 364.2L607.3 362.8L608.9 361.0L610.8 358.9L613.0 356.2L615.6 353.2L618.5 349.6L621.8 345.2L625.5 340.1L629.5 334.6L633.9 328.8L638.4 323.1L643.3 317.8L648.4 312.7L653.8 307.5L659.5 302.4L665.4 297.5L671.5 292.8L677.6 288.4L683.7 284.4L689.9 280.5L696.3 276.9L702.8 273.6L709.6 270.5L716.8 267.6L724.3 264.9L732.1 262.5L740.1 260.3L748.4 258.3L757.0 256.7L765.8 255.3L775.5 254.4L786.5 253.8L797.6 253.5L808.2 253.4L817.1 253.3L823.4 253.2Z" fill-opacity="0.6"/>
<path d="M839.4 258.7L834.0 259.3L826.6 260.0L817.9 260.9L808.4 262.0L798.9 263.4L790.1 265.2L781.7 267.4L773.2 270.0L764.7 272.9L756.3 276.0L748.3 279.1L740.8 282.2L733.9 285.3L727.6 288.3L721.5 291.3L715.7 294.6L709.8 298.1L703.8 302.0L697.5 306.4L691.0 311.2L684.5 316.3L678.3 321.5L672.3 326.6L666.8 331.5L662.0 336.1L657.5 340.6L653.4 345.0L649.6 349.4L645.9 353.9L642.2 358.7L638.6 363.7L635.2 368.8L632.0 374.1L628.8 379.5L625.7 385.1L622.5 390.7L619.2 396.6L615.8 402.7L612.4 408.9L609.1 415.2L606.0 421.5L603.0 427.7L600.2 434.4L597.3 441.5L594.6 448.6L592.1 455.2L590.1 460.7L588.6 464.8L589.0 464.9L590.6 460.9L592.7 455.4L595.3 448.9L598.1 441.8L601.1 434.8L604.1 428.2L607.1 422.1L610.3 415.8L613.7 409.6L617.1 403.4L620.5 397.4L623.9 391.5L627.1 385.9L630.3 380.4L633.4 375.0L636.6 369.7L640.0 364.6L643.5 359.7L647.2 355.0L650.9 350.5L654.7 346.1L658.7 341.8L663.1 337.4L668.0 332.8L673.4 327.9L679.3 322.8L685.6 317.6L692.0 312.5L698.5 307.7L704.7 303.4L710.7 299.5L716.5 296.0L722.3 292.8L728.3 289.8L734.6 286.8L741.5 283.8L748.9 280.7L756.9 277.5L765.2 274.4L773.7 271.4L782.1 268.7L790.4 266.4L799.1 264.6L808.5 263.0L818.0 261.7L826.7 260.7L834.1 259.8L839.4 259.2Z" fill-opacity="0.72"/>
<path d="M674.7 356.6L672.4 359.7L669.4 363.9L665.8 368.9L661.8 374.4L657.7 380.2L653.6 386.0L649.7 391.9L645.6 398.1L641.5 404.5L637.1 411.2L632.5 418.1L627.7 425.2L622.5 432.4L616.9 439.9L611.2 447.5L605.3 455.4L599.3 463.5L593.2 471.8L586.7 480.8L579.8 490.4L572.7 500.2L565.9 509.9L559.8 519.1L554.8 527.4L551.0 534.5L548.3 540.7L546.2 546.5L544.6 552.1L543.2 557.9L541.8 564.4L540.3 571.6L539.0 579.1L537.9 586.9L537.0 594.9L536.5 602.8L536.3 610.6L536.5 618.6L537.0 626.9L537.9 635.1L539.0 643.1L540.4 650.4L541.9 656.8L543.6 662.3L545.7 666.9L547.9 670.9L550.2 674.4L552.6 677.7L555.0 680.9L557.3 683.9L559.5 686.5L561.9 688.9L564.3 691.1L566.9 693.3L569.9 695.7L573.4 698.3L577.6 701.1L581.9 703.9L586.1 706.5L589.6 708.7L592.1 710.3L592.3 710.0L589.8 708.4L586.3 706.2L582.2 703.5L577.8 700.7L573.7 697.8L570.2 695.2L567.4 692.8L564.8 690.6L562.4 688.4L560.1 686.0L557.9 683.4L555.6 680.4L553.3 677.2L551.0 673.9L548.7 670.4L546.5 666.5L544.6 661.9L542.9 656.6L541.5 650.2L540.2 642.9L539.1 635.0L538.2 626.8L537.7 618.5L537.5 610.6L537.7 602.9L538.2 595.0L539.1 587.1L540.2 579.3L541.5 571.8L543.0 564.7L544.4 558.2L545.8 552.4L547.4 546.9L549.4 541.2L552.2 535.0L555.8 528.0L560.8 519.7L566.9 510.6L573.7 500.9L580.8 491.1L587.7 481.5L594.2 472.6L600.3 464.2L606.3 456.1L612.2 448.2L617.9 440.6L623.4 433.1L628.6 425.8L633.4 418.7L637.9 411.8L642.2 405.0L646.4 398.6L650.3 392.3L654.2 386.4L658.2 380.6L662.2 374.7L666.2 369.2L669.7 364.1L672.7 359.9L674.9 356.8Z" fill-opacity="0.51"/>
<path d="M642.7 396.0L640.8 399.7L638.0 404.9L634.8 411.0L631.4 417.6L628.1 424.2L625.3 430.3L622.9 435.6L620.7 440.3L618.6 445.1L616.7 450.4L614.7 456.8L612.8 464.7L610.8 475.0L608.7 487.3L606.7 500.6L604.9 514.0L603.5 526.4L602.6 536.8L602.3 545.1L602.5 551.8L603.1 557.6L604.0 562.9L605.1 568.1L606.3 573.9L607.4 579.7L608.4 585.3L609.6 590.9L611.4 596.8L613.9 603.4L617.4 610.9L622.6 620.1L629.2 630.8L636.6 642.2L644.0 653.3L650.8 663.3L656.3 671.3L660.4 677.0L663.7 681.1L666.4 684.1L668.6 686.4L670.5 688.5L672.3 690.9L673.8 693.4L675.0 695.5L675.8 697.4L676.6 699.4L677.4 701.6L678.4 704.3L679.6 707.5L680.8 711.0L682.2 714.8L683.4 718.7L684.7 722.6L685.7 726.3L686.6 730.0L687.5 733.6L688.2 737.2L688.9 740.8L689.5 744.5L690.0 748.4L690.5 752.3L691.0 756.3L691.4 760.3L691.7 764.4L691.9 768.6L692.0 772.8L691.8 777.5L691.5 782.7L691.0 787.9L690.6 792.8L690.1 797.0L689.9 800.0L690.2 800.0L690.5 797.0L691.1 792.9L691.7 788.0L692.3 782.8L692.8 777.6L693.0 772.9L693.0 768.6L692.9 764.3L692.6 760.2L692.2 756.1L691.8 752.1L691.3 748.2L690.7 744.4L690.1 740.6L689.5 736.9L688.7 733.3L687.9 729.7L687.0 726.0L685.9 722.2L684.7 718.3L683.4 714.4L682.1 710.6L680.8 707.0L679.6 703.8L678.6 701.2L677.8 698.9L677.0 696.9L676.1 694.9L675.0 692.7L673.4 690.2L671.5 687.7L669.6 685.5L667.4 683.2L664.7 680.3L661.5 676.2L657.4 670.5L651.9 662.6L645.1 652.6L637.7 641.5L630.3 630.1L623.7 619.4L618.6 610.3L615.1 602.9L612.6 596.4L610.9 590.6L609.7 585.0L608.7 579.5L607.6 573.6L606.4 567.9L605.3 562.6L604.4 557.4L603.8 551.7L603.6 545.1L603.9 536.9L604.8 526.5L606.2 514.2L607.9 500.8L609.9 487.5L612.0 475.2L613.9 465.0L615.7 457.1L617.6 450.7L619.5 445.5L621.5 440.7L623.7 435.9L626.0 430.6L628.7 424.5L631.9 417.8L635.3 411.2L638.4 405.1L641.1 399.9L643.0 396.1Z" fill-opacity="0.7169999999999999"/>
<path d="M640.3 403.3L635.8 409.9L629.5 418.8L622.1 429.4L614.4 441.1L606.9 453.0L600.6 464.6L595.0 476.3L589.8 488.8L584.8 501.6L580.4 514.2L576.4 526.1L573.2 536.7L570.6 545.9L568.8 554.0L567.5 561.4L566.7 568.5L566.1 575.5L565.8 582.9L565.6 590.8L565.9 598.7L566.4 606.6L567.3 614.4L568.3 622.0L569.5 629.2L570.9 636.0L572.6 642.7L574.5 649.2L576.6 655.3L578.7 660.9L580.6 666.1L582.5 670.8L584.4 675.0L586.3 678.7L588.1 682.2L590.0 685.3L591.9 688.2L593.9 691.0L596.1 693.4L598.2 695.6L600.2 697.5L601.9 699.0L603.1 700.1L603.4 699.9L602.2 698.7L600.5 697.2L598.6 695.3L596.5 693.1L594.4 690.6L592.5 687.9L590.7 684.9L588.8 681.8L587.0 678.3L585.2 674.6L583.4 670.4L581.6 665.7L579.7 660.5L577.7 654.9L575.7 648.8L573.8 642.4L572.1 635.8L570.7 628.9L569.5 621.8L568.5 614.3L567.7 606.5L567.1 598.6L566.9 590.7L567.0 583.0L567.3 575.6L567.9 568.6L568.7 561.6L570.0 554.3L571.8 546.2L574.3 537.0L577.6 526.4L581.5 514.6L586.0 502.0L590.9 489.3L596.2 476.8L601.6 465.1L607.9 453.5L615.1 441.6L622.8 429.8L630.0 419.1L636.2 410.1L640.5 403.5Z" fill-opacity="0.66"/>
<path d="M860.2 303.8L856.6 306.4L851.7 310.0L845.9 314.3L839.5 319.1L833.0 324.2L826.9 329.4L820.8 334.9L814.5 340.7L808.1 346.9L801.8 353.3L795.6 359.8L789.8 366.2L784.4 372.6L779.1 379.1L774.0 385.7L769.1 392.3L764.5 398.9L760.3 405.5L756.5 411.4L753.2 416.4L750.2 421.4L747.3 427.3L744.1 434.8L740.5 445.0L736.2 458.9L731.3 476.1L726.2 495.1L721.3 514.1L717.2 531.6L714.2 546.0L712.5 557.0L711.7 565.8L711.6 573.2L712.0 579.6L712.7 585.7L713.3 592.2L714.0 598.9L715.0 605.2L716.2 611.3L717.6 617.2L719.2 623.1L720.9 629.2L722.9 635.7L725.3 642.8L727.9 649.9L730.4 656.4L732.5 662.0L734.0 666.0L734.3 665.9L732.8 661.9L730.8 656.3L728.4 649.7L725.9 642.6L723.5 635.5L721.6 629.0L720.0 622.9L718.5 617.0L717.1 611.1L716.0 605.1L715.1 598.8L714.4 592.1L713.8 585.6L713.2 579.5L712.8 573.1L712.9 565.9L713.7 557.1L715.4 546.2L718.4 531.9L722.5 514.4L727.4 495.4L732.5 476.5L737.4 459.2L741.7 445.4L745.3 435.3L748.4 427.8L751.3 422.0L754.3 417.0L757.5 412.0L761.3 406.2L765.6 399.6L770.1 393.0L774.9 386.4L780.0 379.9L785.3 373.4L790.7 366.9L796.4 360.5L802.5 354.1L808.8 347.6L815.2 341.4L821.4 335.5L827.4 330.0L833.5 324.7L839.9 319.6L846.2 314.7L852.0 310.4L856.8 306.7L860.4 304.0Z" fill-opacity="0.57"/>
<path d="M861.4 311.2L859.0 314.4L855.7 318.7L851.8 323.9L847.5 329.6L843.2 335.7L839.1 341.8L835.1 347.9L831.0 354.3L826.8 361.0L822.6 368.1L818.4 375.5L814.3 383.5L810.0 392.3L805.6 402.0L801.2 412.1L796.9 422.1L793.0 431.6L789.6 440.0L786.9 447.0L784.6 452.9L782.7 458.3L781.0 463.7L779.2 469.7L777.3 477.0L775.1 485.8L772.6 495.7L770.2 506.3L767.9 517.0L766.1 527.3L764.8 536.8L764.2 545.3L764.1 553.3L764.4 560.8L765.0 568.2L765.8 575.5L766.7 583.1L767.7 590.9L769.0 598.8L770.5 606.7L772.1 614.5L773.9 622.1L775.9 629.2L778.1 636.2L780.6 643.0L783.4 649.5L786.1 655.6L788.6 661.2L790.9 666.1L792.8 670.5L794.6 674.3L796.3 677.6L797.7 680.4L798.9 682.7L799.8 684.4L800.1 684.3L799.3 682.5L798.2 680.2L796.8 677.3L795.3 674.0L793.6 670.1L791.7 665.7L789.6 660.7L787.2 655.1L784.6 649.0L781.9 642.5L779.4 635.7L777.2 628.9L775.3 621.7L773.5 614.2L771.8 606.5L770.3 598.6L769.1 590.7L768.0 582.9L767.1 575.4L766.3 568.0L765.7 560.7L765.4 553.2L765.6 545.4L766.2 536.9L767.4 527.5L769.3 517.3L771.5 506.6L774.0 496.0L776.4 486.1L778.6 477.3L780.6 470.1L782.3 464.1L784.0 458.7L785.9 453.4L788.2 447.5L790.9 440.5L794.3 432.1L798.2 422.6L802.4 412.6L806.8 402.5L811.2 392.8L815.4 384.0L819.5 376.1L823.6 368.6L827.7 361.5L831.8 354.8L835.8 348.4L839.8 342.2L843.8 336.1L848.0 330.0L852.2 324.2L856.1 319.0L859.3 314.6L861.7 311.4Z" fill-opacity="0.69"/>
<path d="M824.5 366.5L822.7 371.8L820.2 379.2L817.2 387.9L814.2 397.4L811.5 406.8L809.4 415.6L808.0 423.9L806.8 432.4L806.0 440.9L805.3 449.2L804.8 457.3L804.5 464.8L804.4 472.3L804.5 479.8L804.8 487.0L805.3 493.5L805.8 498.9L806.1 502.9L806.4 502.9L806.3 498.9L806.1 493.4L805.8 486.9L805.5 479.7L805.4 472.3L805.5 464.9L805.9 457.3L806.4 449.3L807.0 441.0L807.8 432.6L809.0 424.1L810.4 415.8L812.5 407.1L815.1 397.6L818.0 388.2L820.8 379.4L823.2 372.0L824.8 366.6Z" fill-opacity="0.42"/>
<path d="M866.2 428.0L866.6 432.0L867.0 437.6L867.7 444.1L868.5 451.2L869.5 458.3L870.5 465.0L871.7 471.7L873.1 479.0L874.5 486.3L875.9 493.2L877.3 498.9L878.5 503.0L878.9 502.9L878.5 498.6L877.5 492.8L876.1 486.0L874.7 478.7L873.3 471.4L872.2 464.7L871.1 458.1L870.2 451.0L869.2 443.9L868.2 437.4L867.3 431.9L866.6 428.0Z" fill-opacity="0.1625"/>
<path d="M885.9 435.4L886.5 440.2L887.3 446.9L888.5 454.8L889.9 463.0L891.4 470.8L892.7 477.3L894.0 482.8L895.4 488.1L896.8 492.9L898.2 497.1L899.6 500.5L900.6 503.0L901.0 502.9L900.5 500.2L899.7 496.6L898.4 492.4L897.0 487.6L895.6 482.4L894.3 477.0L892.9 470.5L891.5 462.7L890.1 454.5L888.7 446.7L887.3 440.0L886.3 435.3Z" fill-opacity="0.15"/>
<path d="M831.9 452.6L831.7 461.0L831.8 469.4L832.0 477.8L832.2 486.1L832.4 494.5L833.1 502.9L833.4 502.9L833.7 494.5L833.5 486.1L833.3 477.7L833.1 469.3L832.8 460.9L832.2 452.6Z" fill-opacity="0.25"/>
<path d="M792.6 464.8L792.6 473.2L792.6 485.3L792.9 499.4L793.3 513.8L793.8 526.8L794.4 536.9L795.1 544.0L796.0 549.4L797.1 553.5L798.2 556.5L799.1 558.9L799.8 560.9L800.1 560.8L799.7 558.7L799.0 556.3L798.2 553.2L797.2 549.2L796.3 543.8L795.6 536.8L795.0 526.8L794.6 513.7L794.2 499.3L793.8 485.3L793.3 473.2L792.9 464.8Z" fill-opacity="0.3125"/>
<path d="M780.3 440.2L778.4 443.9L775.8 448.8L772.6 454.8L769.3 461.6L765.9 469.0L762.7 476.9L759.5 485.8L756.1 496.0L752.6 506.8L749.4 517.6L746.6 527.8L744.5 536.7L743.2 544.1L742.4 550.5L742.1 556.1L742.1 561.6L742.4 567.4L742.7 573.8L743.1 580.9L743.7 588.5L744.5 596.3L745.6 604.2L746.8 612.2L748.3 620.0L750.2 628.2L752.7 637.0L755.3 645.9L757.9 654.1L760.1 661.0L761.6 666.0L762.0 665.9L760.5 660.8L758.5 653.9L756.1 645.6L753.6 636.8L751.3 627.9L749.5 619.7L748.1 611.9L746.9 604.0L745.9 596.1L745.1 588.4L744.5 580.8L744.0 573.7L743.7 567.3L743.5 561.6L743.5 556.2L743.8 550.6L744.6 544.3L745.9 537.0L748.0 528.1L750.7 518.0L753.9 507.2L757.3 496.4L760.7 486.2L763.8 477.3L766.8 469.4L770.1 462.0L773.3 455.1L776.3 449.1L778.8 444.1L780.6 440.3Z" fill-opacity="0.28125"/>
<path d="M726.3 396.0L724.0 400.4L720.9 406.5L717.2 413.7L713.3 421.4L709.6 428.7L706.3 435.1L703.6 440.1L701.3 444.1L699.1 447.8L696.8 452.0L694.3 457.4L691.4 464.6L687.9 474.5L683.9 486.5L679.6 499.6L675.4 513.0L671.8 525.7L669.0 536.7L667.3 546.0L666.2 554.1L665.7 561.5L665.5 568.6L665.4 575.6L665.3 583.0L665.3 590.8L665.5 598.7L665.9 606.6L666.4 614.4L666.9 621.9L667.3 629.1L667.8 636.2L668.4 643.4L669.0 650.4L669.6 656.7L670.0 662.0L670.4 665.9L670.7 665.9L670.4 662.0L670.0 656.7L669.5 650.4L669.1 643.4L668.6 636.1L668.2 629.0L667.8 621.9L667.4 614.3L667.0 606.6L666.7 598.7L666.5 590.7L666.5 583.0L666.6 575.6L666.6 568.6L666.8 561.6L667.4 554.2L668.4 546.2L670.2 537.0L672.9 526.0L676.5 513.4L680.7 500.0L685.0 486.8L689.0 474.9L692.5 465.0L695.4 457.8L697.8 452.5L700.0 448.3L702.2 444.6L704.5 440.6L707.1 435.6L710.3 429.1L714.0 421.7L717.8 414.0L721.3 406.7L724.4 400.5L726.5 396.1Z" fill-opacity="0.42"/>
<path d="M716.4 415.6L714.8 419.1L712.6 423.4L709.9 428.7L707.0 435.3L704.1 443.1L701.4 452.4L698.6 464.2L695.6 478.5L692.5 494.0L689.7 509.7L687.3 524.4L685.6 536.8L684.7 546.7L684.3 555.1L684.3 562.3L684.6 569.1L685.1 575.8L685.6 583.0L686.2 590.8L686.9 598.7L687.8 606.7L688.8 614.5L690.0 622.0L691.2 629.2L692.5 636.0L694.0 642.5L695.5 648.8L697.2 654.8L698.9 660.5L700.6 666.0L702.5 671.5L704.7 677.0L706.8 682.2L708.9 686.8L710.6 690.7L711.9 693.6L712.2 693.5L711.0 690.6L709.3 686.7L707.3 682.0L705.2 676.7L703.1 671.3L701.3 665.8L699.7 660.3L698.0 654.5L696.5 648.5L695.0 642.3L693.6 635.7L692.3 629.0L691.1 621.8L690.0 614.3L689.0 606.5L688.1 598.6L687.4 590.7L686.8 582.9L686.3 575.7L685.8 569.0L685.5 562.3L685.4 555.1L685.8 546.8L686.8 536.9L688.5 524.6L690.9 509.9L693.7 494.2L696.6 478.7L699.6 464.4L702.2 452.7L704.9 443.4L707.6 435.5L710.4 429.0L713.0 423.6L715.1 419.2L716.7 415.8Z" fill-opacity="0.51"/>
<path d="M674.6 418.1L673.2 421.3L671.2 425.7L668.9 430.9L666.4 436.6L664.1 442.2L662.1 447.5L660.4 452.0L658.8 456.2L657.3 460.3L655.9 464.9L654.6 470.3L653.3 477.0L651.9 485.4L650.5 495.2L649.2 505.9L648.1 516.8L647.2 527.3L646.8 536.9L646.7 545.4L647.1 553.3L647.6 560.8L648.5 568.2L649.4 575.5L650.5 583.1L651.7 590.9L653.1 598.8L654.6 606.7L656.3 614.5L658.0 622.1L659.7 629.2L661.4 635.9L663.2 642.2L665.0 648.3L666.9 654.2L668.8 660.1L670.8 666.2L673.0 672.7L675.5 679.8L678.1 686.9L680.6 693.4L682.7 698.9L684.2 702.9L684.5 702.7L683.2 698.7L681.3 693.1L679.1 686.5L676.7 679.4L674.3 672.3L672.1 665.7L670.2 659.7L668.3 653.8L666.4 647.9L664.6 641.8L662.8 635.5L661.1 628.9L659.4 621.7L657.7 614.2L656.0 606.4L654.5 598.5L653.1 590.6L651.9 582.9L650.8 575.3L649.9 568.0L649.1 560.7L648.5 553.2L648.2 545.3L648.2 536.9L648.7 527.4L649.5 516.9L650.6 506.0L651.9 495.4L653.3 485.6L654.6 477.2L655.8 470.6L657.1 465.2L658.4 460.7L659.8 456.5L661.3 452.4L662.9 447.8L664.9 442.5L667.1 436.9L669.5 431.2L671.7 425.9L673.6 421.4L675.0 418.2Z" fill-opacity="0.5625"/>
<path d="M664.8 479.6L663.8 485.9L662.2 494.8L660.4 505.3L658.6 516.4L657.1 527.3L656.2 536.8L655.8 545.2L655.8 553.1L656.1 560.6L656.6 568.1L657.2 575.5L658.0 583.0L658.9 590.7L660.0 598.4L661.2 606.1L662.6 613.8L664.0 621.5L665.4 629.2L666.8 636.8L668.2 644.5L669.7 652.2L671.3 659.9L672.9 667.6L674.6 675.3L676.4 683.2L678.4 691.3L680.5 699.4L682.4 707.3L684.2 714.7L685.6 721.4L686.8 727.4L687.7 733.2L688.4 738.4L688.9 743.1L689.4 746.9L689.8 749.8L690.0 749.8L689.8 746.9L689.5 743.0L689.1 738.4L688.6 733.1L687.8 727.3L686.8 721.1L685.3 714.4L683.6 707.0L681.6 699.1L679.5 691.0L677.5 682.9L675.7 675.0L674.1 667.3L672.4 659.7L670.9 652.0L669.4 644.3L667.9 636.6L666.5 629.0L665.1 621.3L663.7 613.6L662.4 605.9L661.1 598.2L660.0 590.6L659.1 582.9L658.4 575.4L657.7 568.0L657.2 560.6L657.0 553.1L656.9 545.2L657.2 536.9L658.1 527.4L659.4 516.5L661.1 505.4L662.7 494.9L664.1 486.0L665.1 479.6Z" fill-opacity="0.57"/>
<path d="M878.9 285.5L879.8 281.7L881.0 276.5L882.3 270.2L884.1 263.6L886.2 257.2L889.1 251.4L893.1 245.9L898.5 240.2L904.3 234.6L910.0 229.4L914.8 225.0L918.1 221.7L917.9 221.5L914.4 224.5L909.3 228.7L903.5 233.7L897.6 239.4L892.2 245.1L888.0 250.8L885.1 256.7L882.9 263.3L881.2 270.0L880.1 276.3L879.3 281.6L878.6 285.4Z" fill-opacity="0.25"/>
<path d="M755.7 425.5L753.4 429.7L750.1 435.5L746.3 442.5L742.4 450.1L738.7 457.6L735.6 464.6L733.0 471.5L730.5 478.8L728.2 486.2L726.2 492.9L724.8 498.7L723.8 502.9L724.1 503.0L725.6 498.9L727.4 493.3L729.4 486.5L731.7 479.2L734.2 471.9L736.8 465.1L739.9 458.2L743.5 450.6L747.3 443.1L750.9 436.0L753.9 430.0L756.0 425.6Z" fill-opacity="0.375"/>
<path d="M900.3 268.4L901.9 265.8L903.9 262.3L906.3 258.1L909.0 253.5L912.2 249.0L915.8 244.8L920.3 240.6L925.6 236.1L931.4 231.7L937.6 227.5L943.8 223.7L949.8 220.5L955.7 217.9L961.7 215.8L967.8 214.0L973.9 212.7L980.0 211.8L986.1 211.3L992.0 211.2L997.7 211.6L1003.4 212.4L1009.3 213.5L1015.6 215.1L1022.4 216.9L1029.9 219.2L1037.8 221.9L1046.1 225.0L1054.6 228.4L1063.1 231.8L1071.4 235.3L1079.6 238.6L1087.8 242.1L1096.0 245.6L1104.1 249.3L1112.3 253.1L1120.5 257.2L1128.8 261.7L1137.3 266.4L1145.8 271.2L1154.1 276.3L1162.1 281.4L1169.6 286.4L1176.6 291.6L1183.3 296.9L1189.7 302.2L1195.7 307.6L1201.3 312.9L1206.5 318.1L1211.1 323.0L1215.3 327.9L1219.1 332.6L1222.5 337.4L1225.7 342.3L1228.6 347.2L1231.4 352.5L1233.9 357.9L1236.1 363.4L1238.0 368.8L1239.7 374.1L1241.1 379.0L1242.0 383.7L1242.6 388.5L1242.9 393.1L1243.0 397.3L1243.1 400.8L1243.2 403.4L1243.8 403.4L1243.7 400.8L1243.7 397.3L1243.6 393.1L1243.4 388.5L1242.9 383.6L1242.0 378.7L1240.7 373.8L1239.1 368.5L1237.2 363.0L1235.0 357.4L1232.6 351.9L1229.9 346.6L1226.9 341.5L1223.8 336.6L1220.4 331.7L1216.6 326.8L1212.4 321.9L1207.8 316.8L1202.7 311.5L1197.1 306.1L1191.1 300.7L1184.7 295.2L1178.0 289.8L1171.0 284.5L1163.5 279.3L1155.5 274.1L1147.1 269.0L1138.6 264.0L1130.1 259.2L1121.8 254.8L1113.6 250.6L1105.4 246.6L1097.2 242.9L1088.9 239.3L1080.8 235.9L1072.6 232.5L1064.2 229.1L1055.7 225.6L1047.2 222.2L1038.8 219.1L1030.8 216.3L1023.3 214.0L1016.4 212.1L1010.0 210.6L1003.9 209.4L998.0 208.6L992.0 208.2L985.9 208.3L979.7 208.8L973.3 209.8L967.0 211.1L960.8 212.9L954.6 215.1L948.5 217.8L942.3 221.1L935.9 224.9L929.7 229.3L923.7 233.8L918.3 238.3L913.7 242.7L909.8 247.2L906.6 252.1L904.2 257.0L902.3 261.5L900.9 265.4L899.7 268.1Z" fill-opacity="0.15"/>
<path d="M614.1 664.0L612.8 666.1L611.0 668.9L608.8 672.2L606.5 676.0L604.4 680.0L602.6 684.1L601.1 688.2L599.7 692.4L598.4 696.9L597.2 701.6L596.1 706.6L595.1 711.9L594.3 718.1L593.5 725.2L592.8 732.6L592.3 739.6L592.0 745.5L592.0 749.8L592.4 749.8L593.1 745.6L593.7 739.7L594.3 732.7L595.0 725.3L595.7 718.3L596.6 712.1L597.6 706.9L598.6 701.9L599.8 697.3L601.1 692.9L602.5 688.7L603.9 684.6L605.6 680.6L607.6 676.6L609.7 672.7L611.6 669.3L613.3 666.3L614.5 664.2Z" fill-opacity="0.375"/>
<path d="M612.3 684.3L611.3 687.2L609.9 691.0L608.3 695.6L606.8 700.8L605.4 706.3L604.3 711.9L603.6 718.1L603.0 725.2L602.5 732.6L602.1 739.6L602.0 745.6L602.1 749.8L602.5 749.8L603.2 745.6L603.6 739.7L604.0 732.7L604.5 725.3L605.1 718.2L605.8 712.1L606.9 706.7L608.2 701.2L609.6 696.0L610.8 691.3L611.9 687.4L612.6 684.4Z" fill-opacity="0.4375"/>
<path d="M619.7 671.4L619.1 674.6L618.3 678.9L617.4 684.1L616.6 690.0L615.9 696.2L615.4 702.8L615.1 710.2L614.9 719.0L614.7 728.3L614.6 737.0L614.7 744.5L615.0 749.8L615.4 749.8L615.9 744.5L616.1 737.1L616.2 728.3L616.4 719.1L616.6 710.3L616.9 702.8L617.4 696.4L618.0 690.1L618.7 684.3L619.2 679.1L619.7 674.7L620.0 671.5Z" fill-opacity="0.15"/>
<path d="M732.1 499.9L730.7 502.8L728.7 506.6L726.3 511.3L724.0 516.5L721.9 522.0L720.5 527.5L719.6 533.3L719.0 539.5L718.6 546.1L718.5 552.6L718.5 558.8L718.6 564.6L718.9 569.6L719.3 574.2L719.9 578.5L720.6 582.8L721.4 587.3L722.3 592.3L723.2 597.9L724.2 603.9L725.3 610.2L726.6 616.6L728.0 623.0L729.7 629.3L731.8 635.6L734.2 642.2L736.8 648.8L739.5 655.1L742.2 661.0L744.7 666.2L747.2 670.7L749.8 674.9L752.3 678.6L754.6 681.7L756.5 684.3L758.0 686.3L758.3 686.1L756.9 684.1L755.1 681.4L752.9 678.2L750.5 674.5L748.0 670.3L745.7 665.7L743.3 660.5L740.8 654.6L738.2 648.3L735.6 641.7L733.2 635.1L731.2 628.8L729.5 622.6L728.1 616.3L726.8 609.9L725.8 603.7L724.8 597.7L723.9 592.1L723.0 587.0L722.1 582.5L721.4 578.2L720.9 574.0L720.4 569.5L720.2 564.5L720.1 558.8L720.0 552.6L720.2 546.1L720.5 539.7L721.1 533.5L722.0 527.8L723.4 522.4L725.3 517.0L727.5 511.8L729.5 507.0L731.3 503.0L732.5 500.1Z" fill-opacity="0.72"/>
<path d="M681.3 632.8L681.6 634.9L682.0 637.7L682.5 641.0L683.3 644.6L684.2 648.2L685.2 651.5L686.2 654.8L687.5 658.3L689.0 661.8L690.4 665.0L691.5 667.8L692.4 669.7L692.9 669.5L692.3 667.5L691.5 664.6L690.5 661.3L689.4 657.7L688.3 654.1L687.3 650.9L686.3 647.6L685.4 644.1L684.5 640.6L683.5 637.3L682.6 634.6L681.9 632.7Z" fill-opacity="0.85"/>
<path d="M629.9 721.5L632.9 720.1L636.9 718.2L641.7 716.0L646.9 713.6L652.3 711.2L657.4 709.0L662.6 706.8L667.9 704.6L673.4 702.3L678.9 700.1L684.3 698.1L689.5 696.3L694.6 694.7L699.6 693.3L704.6 692.0L709.4 690.9L714.1 689.9L718.6 689.1L723.0 688.5L727.0 688.1L731.0 687.8L734.9 687.7L738.7 687.7L742.7 687.9L746.7 688.3L750.8 688.8L754.9 689.5L758.9 690.4L762.8 691.4L766.6 692.7L770.4 694.3L774.3 696.1L778.1 698.2L781.8 700.4L785.2 702.5L788.3 704.5L791.0 706.4L793.3 708.3L795.3 710.2L797.3 712.1L799.1 714.0L800.9 715.9L802.7 717.8L804.4 719.8L806.0 721.8L807.5 723.6L808.7 725.2L809.6 726.3L810.0 726.0L809.3 724.8L808.3 723.1L807.1 721.0L805.8 718.8L804.3 716.5L802.7 714.3L801.2 712.3L799.5 710.1L797.8 707.9L795.8 705.7L793.4 703.4L790.8 701.1L787.7 698.9L784.2 696.5L780.4 694.2L776.4 692.0L772.3 690.1L768.2 688.4L764.1 687.0L760.0 685.9L755.7 685.0L751.5 684.3L747.2 683.7L743.0 683.3L738.9 683.1L734.8 683.1L730.8 683.2L726.6 683.5L722.4 683.9L717.9 684.6L713.3 685.4L708.4 686.4L703.4 687.5L698.4 688.9L693.2 690.4L688.1 692.1L682.8 694.1L677.4 696.4L671.9 698.9L666.5 701.4L661.3 704.0L656.3 706.5L651.2 709.1L646.0 711.9L641.0 714.7L636.4 717.3L632.5 719.5L629.7 721.0Z" fill-opacity="0.9"/>
<path d="M687.6 679.7L689.6 679.2L692.2 678.4L695.4 677.6L698.9 676.7L702.5 675.9L706.1 675.3L709.8 674.8L713.8 674.4L718.0 674.0L722.2 673.8L726.4 673.6L730.6 673.5L734.7 673.6L738.9 673.7L743.2 673.9L747.3 674.3L751.3 674.8L755.0 675.4L758.5 676.1L762.0 677.1L765.3 678.2L768.3 679.3L771.1 680.3L773.4 681.1L775.2 681.8L776.6 682.4L777.7 682.9L778.4 683.3L779.1 683.7L779.6 684.0L779.8 683.6L779.3 683.3L778.7 682.9L777.9 682.4L776.9 681.8L775.5 681.1L773.7 680.3L771.5 679.4L768.8 678.2L765.7 676.9L762.4 675.7L758.9 674.6L755.3 673.8L751.5 673.2L747.5 672.7L743.3 672.4L739.0 672.1L734.7 672.0L730.6 671.9L726.4 672.0L722.1 672.2L717.8 672.4L713.7 672.8L709.6 673.3L705.9 673.9L702.2 674.6L698.6 675.6L695.1 676.7L692.0 677.8L689.4 678.7L687.5 679.3Z" fill-opacity="0.8"/>
<path d="M692.4 680.0L692.0 680.3L691.4 680.6L690.8 681.1L690.3 681.7L689.8 682.4L689.5 683.1L689.5 683.8L689.7 684.5L690.1 685.1L690.5 685.6L690.9 686.0L691.1 686.3L691.4 686.2L691.3 685.8L691.1 685.3L690.9 684.7L690.7 684.1L690.5 683.6L690.5 683.3L690.7 682.9L691.1 682.3L691.5 681.8L692.0 681.2L692.3 680.6L692.6 680.2Z" fill-opacity="0.7"/>
<path d="M678.8 679.0L679.5 680.0L680.5 681.5L681.7 683.1L683.0 684.8L684.4 686.4L685.7 687.6L687.1 688.6L688.6 689.4L690.1 690.1L691.4 690.7L692.6 690.9L693.6 690.8L693.8 690.3L693.2 689.5L692.2 688.8L690.9 688.3L689.5 687.6L688.2 686.9L687.0 686.1L685.7 685.0L684.2 683.6L682.7 682.2L681.3 680.7L680.1 679.5L679.2 678.7Z" fill-opacity="0.8"/>
<path d="M685.7 698.5C687.1 698.1 692.1 690.6 693.7 696.1C695.3 701.5 696.2 727.9 695.6 731.1C694.9 734.3 690.9 717.8 690.0 715.1Z" fill-opacity="0.85"/>
<path d="M664.1 650.0L664.7 652.8L665.6 656.6L666.9 660.9L668.3 665.7L669.7 670.4L671.0 674.7L672.1 678.9L673.1 683.1L674.1 687.3L675.1 691.5L676.1 695.5L677.1 699.3L678.2 703.1L679.5 706.9L680.8 710.6L682.0 714.0L683.0 716.8L683.7 718.8L684.0 718.7L683.4 716.6L682.6 713.8L681.6 710.4L680.5 706.6L679.4 702.8L678.4 699.0L677.4 695.2L676.4 691.2L675.4 687.0L674.4 682.8L673.3 678.6L672.2 674.4L671.0 670.0L669.6 665.3L668.1 660.6L666.8 656.2L665.4 652.6L664.4 650.0Z" fill-opacity="0.72"/>
<path d="M698.5 696.6L698.1 698.2L697.5 700.3L696.8 702.8L696.1 705.6L695.7 708.5L695.5 711.4L695.7 714.4L696.1 717.5L696.7 720.7L697.4 723.9L698.3 727.1L699.2 730.1L700.4 733.0L701.7 735.9L703.2 738.8L704.8 741.5L706.4 744.0L708.0 746.2L709.8 748.1L711.7 749.9L713.7 751.4L715.5 752.7L717.1 753.7L718.2 754.6L718.4 754.3L717.3 753.4L715.9 752.2L714.1 750.8L712.3 749.2L710.5 747.4L708.9 745.5L707.4 743.3L705.9 740.8L704.3 738.1L702.9 735.3L701.6 732.5L700.5 729.6L699.5 726.7L698.7 723.6L698.0 720.4L697.4 717.3L697.0 714.2L696.8 711.4L696.8 708.6L697.1 705.8L697.6 703.0L698.1 700.4L698.5 698.3L698.8 696.7Z" fill-opacity="0.8"/>
<ellipse cx="769.9" cy="716.3" rx="13.3" ry="18.6" transform="rotate(-27 769.9 716.3)" fill="#0a0a0a"/>
<circle cx="733.4" cy="708.5" r="9.2" fill="#fff"/>
<path d="M721.8 714.1L722.1 714.7L722.6 715.7L723.3 716.8L724.1 718.0L725.2 719.0L726.4 719.8L727.8 720.3L729.4 720.6L731.0 720.9L732.7 720.9L734.3 720.8L735.8 720.5L737.2 719.9L738.5 719.0L739.7 718.0L740.8 716.8L741.7 715.6L742.4 714.3L742.9 712.7L743.1 711.0L743.2 709.3L743.2 707.6L743.1 706.3L743.1 705.3L742.6 705.3L742.4 706.2L742.3 707.6L742.0 709.2L741.7 710.8L741.4 712.3L740.8 713.5L740.1 714.5L739.3 715.5L738.3 716.4L737.3 717.3L736.2 717.9L735.1 718.4L734.0 718.6L732.6 718.7L731.2 718.7L729.8 718.5L728.4 718.2L727.3 717.8L726.4 717.3L725.5 716.6L724.5 715.8L723.6 714.9L722.8 714.2L722.2 713.7Z" fill-opacity="0.9"/>
<path d="M721.7 715.2L722.1 716.7L722.6 718.8L723.2 721.2L723.9 723.9L724.9 726.6L726.0 729.1L727.3 731.4L728.9 733.9L730.5 736.3L732.3 738.6L734.1 740.8L736.0 742.8L738.0 744.7L740.2 746.4L742.4 748.0L744.6 749.4L746.6 750.6L748.6 751.6L750.4 752.4L752.2 752.8L753.9 753.1L755.4 753.3L756.6 753.3L757.5 753.4L757.6 752.9L756.8 752.7L755.6 752.3L754.2 751.9L752.7 751.4L751.1 750.7L749.4 749.9L747.6 748.8L745.6 747.7L743.5 746.3L741.4 744.8L739.3 743.2L737.4 741.4L735.6 739.5L733.9 737.4L732.1 735.1L730.5 732.8L729.1 730.4L727.8 728.2L726.6 725.8L725.5 723.3L724.4 720.8L723.5 718.5L722.8 716.5L722.2 715.0Z" fill-opacity="0.9"/>
<path d="M725.5 722.5L726.3 724.4L727.3 727.0L728.7 730.1L730.3 733.3L732.0 736.3L733.8 738.8L735.8 741.0L738.2 743.0L740.6 744.8L743.0 746.3L745.0 747.5L746.4 748.4L746.6 748.2L745.3 747.1L743.4 745.6L741.2 743.9L738.9 742.1L736.6 740.1L734.7 738.1L733.0 735.6L731.3 732.7L729.7 729.6L728.2 726.7L726.8 724.2L725.8 722.4Z" fill-opacity="0.8"/>
<ellipse cx="749" cy="734.8" rx="6" ry="8" transform="rotate(15 749 734.8)" fill="#fff" stroke="#444" stroke-width="1.3"/>
<ellipse cx="763.1" cy="742.2" rx="3.8" ry="5.8" transform="rotate(12 763.1 742.2)" fill="#fff" stroke="#444" stroke-width="1.2"/>
<path d="M742.9 757.1L745.0 756.6L747.8 755.9L751.2 755.0L754.7 753.9L758.3 752.7L761.6 751.6L764.6 750.5L767.6 749.5L770.6 748.4L773.7 747.4L776.7 746.3L779.9 745.3L783.5 744.3L787.4 743.3L791.4 742.2L795.2 741.3L798.4 740.5L800.6 739.9L800.5 739.5L798.2 739.9L795.0 740.5L791.2 741.3L787.1 742.1L783.1 743.0L779.5 743.9L776.2 744.8L773.1 745.7L770.0 746.8L767.0 747.8L764.0 748.8L761.0 749.9L757.7 751.0L754.2 752.2L750.7 753.4L747.4 754.7L744.7 755.8L742.8 756.7Z" fill-opacity="0.85"/>
<path d="M698.3 754.5L698.7 755.9L699.3 757.7L699.9 760.0L700.7 762.3L701.6 764.4L702.6 766.1L703.6 767.4L704.5 768.5L705.7 769.3L707.0 770.1L708.7 770.6L710.8 771.0L713.5 771.2L716.7 771.3L720.3 771.3L724.0 771.1L727.5 770.8L730.7 770.4L733.6 769.8L736.6 769.1L739.3 768.3L741.8 767.5L743.9 766.9L745.4 766.4L745.2 765.8L743.7 766.1L741.5 766.6L739.0 767.1L736.2 767.7L733.3 768.1L730.5 768.4L727.3 768.6L723.9 768.8L720.2 768.9L716.7 768.9L713.6 768.8L711.1 768.6L709.2 768.2L707.9 767.8L707.0 767.3L706.2 766.7L705.4 765.9L704.4 764.8L703.4 763.4L702.4 761.5L701.3 759.4L700.3 757.3L699.5 755.6L698.9 754.3Z" fill-opacity="0.85"/>
<path d="M711.3 770.8L710.1 771.2L709.0 772.2L707.9 773.5L706.8 775.1L705.8 776.7L704.9 778.5L704.2 780.4L703.5 782.5L703.0 784.8L702.6 786.9L702.3 788.7L702.0 790.0L702.6 790.1L703.1 788.9L703.8 787.2L704.6 785.3L705.5 783.2L706.3 781.2L707.1 779.5L708.0 778.1L709.0 776.5L710.0 775.1L711.0 773.8L711.7 772.4L711.8 771.2Z" fill-opacity="0.85"/>
<path d="M699.9 758.1C700.7 759.5 702.8 764.7 704.8 766.7C706.7 768.8 707.2 770.0 711.5 770.4C715.8 770.8 725.1 769.6 730.6 768.9C736.0 768.2 744.1 765.6 744.1 766.1C744.1 766.6 735.6 770.5 730.6 771.9C725.5 773.2 718.0 772.9 714.0 774.3C710.0 775.8 708.5 777.8 706.6 780.5C704.7 783.1 703.0 790.5 702.6 790.0C702.1 789.6 703.2 780.8 703.8 777.8C704.4 774.7 706.7 773.8 706.2 771.6C705.8 769.5 702.1 766.0 701.3 764.9Z" fill-opacity="0.45"/>
<path d="M705.9 757.0L706.9 757.8L708.2 759.0L709.8 760.3L711.7 761.6L713.6 762.7L715.6 763.6L717.7 764.3L720.1 764.8L722.5 765.2L724.8 765.5L726.7 765.6L728.1 765.6L728.1 765.3L726.8 765.0L724.9 764.5L722.7 764.0L720.3 763.6L718.0 763.0L716.1 762.4L714.2 761.6L712.3 760.5L710.5 759.3L708.7 758.2L707.2 757.4L706.1 756.7Z" fill-opacity="0.8"/>
<path d="M774.7 650.1L776.3 652.8L778.6 656.3L781.5 660.4L784.7 665.0L788.1 669.9L791.5 674.9L795.1 680.6L799.3 687.3L803.6 694.2L807.8 700.8L811.4 706.4L814.0 710.3L814.2 710.1L811.9 706.0L808.6 700.3L804.6 693.6L800.3 686.6L796.2 679.9L792.5 674.2L789.2 669.2L785.8 664.3L782.5 659.7L779.6 655.6L776.9 652.3L774.9 649.9Z" fill-opacity="0.5"/>
<path d="M784.5 650.1L786.4 653.7L789.4 658.5L793.0 664.2L796.8 670.1L800.5 675.9L803.7 681.0L806.7 685.8L809.6 690.6L812.4 695.2L815.0 699.3L817.2 702.8L818.9 705.4L819.2 705.2L817.7 702.5L815.7 698.9L813.3 694.6L810.6 689.9L807.7 685.1L804.8 680.4L801.6 675.3L797.9 669.5L794.1 663.5L790.4 657.9L787.2 653.1L784.8 649.9Z" fill-opacity="0.375"/>
<path d="M686.1 650.1L686.4 652.4L687.5 655.4L688.9 658.8L690.4 662.4L691.7 665.9L692.7 668.7L693.4 671.2L694.0 673.6L694.6 675.9L695.1 677.8L695.5 679.5L695.9 680.8L696.4 680.7L696.4 679.4L696.3 677.7L696.2 675.6L695.9 673.2L695.4 670.7L694.7 668.1L693.7 665.1L692.3 661.7L690.8 658.0L689.4 654.6L688.0 651.7L686.6 649.9Z" fill-opacity="0.72"/>
<path d="M708.3 650.1L710.0 655.7L712.0 661.3L714.0 666.8L716.1 672.3L718.2 677.8L720.6 683.2L720.9 683.1L719.1 677.5L717.2 671.9L715.1 666.4L713.1 660.9L711.0 655.3L708.6 649.9Z" fill-opacity="0.6"/>
<path d="M728.0 650.1L731.1 656.0L734.6 661.8L738.1 667.5L741.5 673.2L745.1 678.9L748.9 684.5L749.1 684.3L745.9 678.4L742.5 672.6L739.1 666.9L735.6 661.2L732.1 655.4L728.2 649.9Z" fill-opacity="0.6"/>
<path d="M700.9 650.0L702.4 655.3L704.2 660.4L706.1 665.6L707.9 670.7L709.8 675.8L712.0 680.8L712.3 680.7L710.7 675.4L709.0 670.3L707.2 665.2L705.3 660.0L703.5 654.9L701.2 650.0Z" fill-opacity="0.6"/>
<path d="M665.2 662.3L665.0 668.8L664.7 677.7L664.4 688.2L664.3 699.9L664.3 711.9L664.5 723.7L665.0 736.5L665.6 750.9L666.4 765.7L667.1 779.7L668.0 791.6L668.9 800.0L669.4 800.0L669.4 791.5L669.0 779.6L668.2 765.6L667.5 750.8L666.8 736.4L666.4 723.7L666.2 711.9L666.1 699.9L666.0 688.2L665.9 677.7L665.8 668.8L665.7 662.3Z" fill-opacity="0.22499999999999998"/>
<path d="M672.6 668.4L672.5 675.8L672.3 686.1L672.2 698.2L672.4 711.3L672.7 724.2L673.1 736.0L673.8 747.7L674.7 760.0L675.7 772.3L676.6 783.6L677.7 793.1L678.7 800.0L679.2 800.0L679.1 793.0L678.5 783.5L677.5 772.1L676.5 759.9L675.7 747.5L675.0 736.0L674.6 724.1L674.3 711.2L674.0 698.2L673.7 686.1L673.4 675.8L673.1 668.4Z" fill-opacity="0.1875"/>
<path d="M791.5 480.0L791.2 486.0L790.9 494.4L790.9 504.2L791.2 514.9L791.7 525.5L792.3 535.4L793.2 544.8L794.2 554.2L795.3 563.7L796.6 573.1L798.1 582.2L799.7 590.9L801.5 599.2L803.4 607.3L805.5 615.2L807.7 622.8L810.2 630.1L812.8 637.2L815.9 644.3L819.5 651.5L823.3 658.4L826.9 664.7L829.9 669.9L832.1 673.7L832.7 673.4L830.7 669.5L828.0 664.1L824.7 657.7L821.3 650.6L818.0 643.4L815.1 636.3L812.7 629.2L810.4 622.0L808.1 614.4L806.1 606.7L804.2 598.6L802.4 590.4L800.8 581.7L799.3 572.7L798.0 563.4L796.9 553.9L795.9 544.5L795.1 535.2L794.4 525.4L794.0 514.8L793.7 504.2L793.3 494.3L792.7 486.0L792.2 480.0Z" fill-opacity="0.17500000000000002"/>
<path d="M804.6 480.0L804.8 483.9L805.0 489.2L805.3 495.6L805.8 502.6L806.6 509.9L807.7 517.0L809.1 524.2L810.6 531.7L812.3 539.5L814.3 547.4L816.5 555.4L818.8 563.2L821.4 570.9L824.2 578.8L827.1 586.6L830.3 594.4L833.7 602.0L837.3 609.4L841.2 616.6L845.3 623.8L849.7 630.8L854.1 637.5L858.7 644.0L863.2 650.0L867.9 655.8L872.9 661.4L878.0 666.7L882.9 671.5L887.3 675.8L891.2 679.4L894.4 682.2L897.1 684.3L899.5 685.8L901.4 686.9L903.0 687.7L904.2 688.5L904.4 688.2L903.2 687.4L901.6 686.5L899.7 685.4L897.4 683.8L894.8 681.7L891.6 678.8L887.9 675.2L883.5 670.9L878.8 665.9L873.8 660.6L868.9 655.0L864.3 649.2L859.8 643.1L855.3 636.7L850.9 630.0L846.5 623.0L842.4 615.9L838.6 608.7L835.0 601.4L831.6 593.8L828.5 586.1L825.5 578.3L822.7 570.5L820.2 562.7L817.8 555.0L815.7 547.1L813.7 539.2L812.0 531.4L810.5 523.9L809.1 516.8L808.1 509.7L807.2 502.5L806.5 495.5L805.9 489.2L805.4 483.9L804.9 480.0Z" fill-opacity="0.48"/>
<path d="M830.4 480.0L830.1 483.8L829.6 488.9L829.1 495.0L828.8 501.8L828.8 509.2L829.0 516.9L829.6 525.2L830.3 534.3L831.3 544.0L832.4 553.8L833.8 563.4L835.5 572.3L837.4 580.7L839.7 588.7L842.1 596.6L844.8 604.1L847.5 611.5L850.3 618.5L853.4 625.6L857.0 632.8L860.6 639.8L864.1 646.1L867.0 651.3L869.1 655.2L869.4 655.1L867.4 651.1L864.6 645.8L861.3 639.4L857.8 632.4L854.4 625.2L851.4 618.0L848.7 611.0L845.9 603.7L843.3 596.2L840.9 588.4L838.6 580.4L836.7 572.1L835.1 563.2L833.7 553.7L832.5 543.9L831.6 534.2L830.8 525.1L830.3 516.8L830.0 509.2L830.1 501.9L830.3 495.0L830.5 488.9L830.7 483.8L830.7 480.0Z" fill-opacity="0.25"/>
<path d="M822.1 489.2L821.7 494.2L821.0 501.1L820.3 509.4L819.7 518.2L819.1 527.1L818.9 535.3L818.9 543.0L818.9 550.7L819.2 558.4L819.5 566.1L820.0 573.8L820.7 581.5L821.6 589.4L822.8 597.5L824.1 605.7L825.5 613.6L826.9 621.0L828.2 627.6L829.6 633.6L831.1 639.2L832.6 644.3L833.9 648.7L835.1 652.4L835.9 655.2L836.2 655.1L835.5 652.3L834.4 648.6L833.2 644.1L831.8 639.0L830.5 633.4L829.2 627.4L828.0 620.8L826.7 613.4L825.3 605.5L824.0 597.4L822.9 589.2L822.0 581.3L821.3 573.7L820.8 566.0L820.4 558.3L820.2 550.7L820.1 543.0L820.1 535.3L820.3 527.1L820.7 518.3L821.2 509.4L821.7 501.2L822.1 494.2L822.4 489.2Z" fill-opacity="0.275"/>
<path d="M850.7 548.3L852.4 552.9L854.6 559.3L857.4 566.9L860.4 575.1L863.6 583.3L866.9 590.9L870.2 598.1L873.6 605.4L877.2 612.8L880.9 620.0L884.9 626.9L889.1 633.4L893.7 639.5L898.8 645.3L904.1 650.9L909.4 656.0L914.3 660.7L918.8 664.7L922.7 668.1L926.5 671.0L930.0 673.5L933.0 675.4L935.5 677.0L937.4 678.3L937.6 678.1L935.7 676.7L933.2 675.1L930.3 673.0L926.9 670.5L923.2 667.5L919.4 664.0L915.0 659.9L910.2 655.2L905.0 650.1L899.7 644.5L894.6 638.7L890.0 632.7L885.9 626.3L881.9 619.4L878.2 612.3L874.7 604.9L871.2 597.6L868.0 590.4L864.7 582.8L861.3 574.7L858.1 566.6L855.2 559.1L852.8 552.8L851.0 548.2Z" fill-opacity="0.54"/>
<path d="M870.9 480.0L871.8 485.1L873.1 492.0L874.7 500.1L876.7 508.9L879.0 517.9L881.4 526.3L884.0 534.5L886.9 542.9L889.9 551.4L893.2 559.8L896.5 568.2L899.9 576.2L903.4 584.0L907.1 591.8L910.8 599.4L914.7 606.8L918.4 613.8L922.1 620.5L925.9 627.0L929.9 633.5L933.9 639.7L937.5 645.3L940.6 650.0L942.9 653.4L943.2 653.2L941.1 649.7L938.1 644.9L934.7 639.2L930.9 632.9L927.0 626.3L923.4 619.8L919.8 613.1L916.1 606.0L912.3 598.7L908.5 591.1L904.9 583.4L901.4 575.5L898.0 567.5L894.7 559.3L891.5 550.8L888.4 542.3L885.6 534.0L883.0 525.9L880.6 517.5L878.3 508.6L876.3 499.8L874.4 491.7L872.6 484.9L871.3 480.0Z" fill-opacity="0.35000000000000003"/>
<path d="M893.9 480.1L895.1 485.1L896.8 492.2L899.0 500.4L901.6 509.3L904.4 518.2L907.1 526.4L909.9 534.2L912.9 542.0L915.9 549.8L919.1 557.6L922.3 565.2L925.6 572.6L928.9 579.7L932.2 586.8L935.6 593.7L939.1 600.4L942.5 606.9L946.0 613.2L949.6 619.5L953.6 625.9L957.6 632.2L961.4 637.8L964.5 642.6L966.8 646.1L967.2 645.8L965.1 642.2L962.1 637.4L958.6 631.6L954.8 625.2L951.0 618.7L947.5 612.3L944.1 606.0L940.7 599.5L937.3 592.8L933.9 586.0L930.6 579.0L927.3 571.8L924.1 564.4L920.8 556.9L917.7 549.1L914.6 541.3L911.7 533.5L908.9 525.8L906.2 517.6L903.4 508.8L900.8 499.9L898.3 491.7L896.1 484.9L894.4 479.9Z" fill-opacity="0.275"/>
<path d="M946.6 611.0L947.2 612.8L948.1 615.4L949.3 618.5L950.5 621.7L951.6 624.9L952.5 627.7L953.3 630.2L953.9 632.7L954.4 635.1L954.8 637.5L955.1 639.9L955.3 642.3L955.3 644.9L955.3 647.7L955.2 650.5L955.0 653.1L954.9 655.4L954.8 657.0L955.2 657.0L955.4 655.4L955.7 653.2L956.1 650.6L956.4 647.7L956.6 644.9L956.6 642.2L956.4 639.7L956.1 637.3L955.6 634.9L955.1 632.4L954.5 629.9L953.8 627.3L952.8 624.4L951.6 621.3L950.3 618.1L948.9 615.1L947.7 612.6L946.9 610.8Z" fill-opacity="0.66"/>
<path d="M945.6 648.8L946.3 650.3L947.3 652.5L948.6 655.0L950.1 657.6L951.8 660.0L953.5 662.1L955.4 663.9L957.5 665.7L959.7 667.2L961.9 668.4L963.7 669.3L965.0 670.1L965.3 669.7L964.1 668.7L962.5 667.5L960.5 666.0L958.5 664.4L956.4 662.7L954.7 661.1L953.1 659.1L951.5 656.7L949.9 654.2L948.4 651.9L947.0 650.0L946.0 648.6Z" fill-opacity="0.8"/>
<path d="M789.9 662.6L790.7 666.0L792.2 670.8L794.1 676.3L796.2 682.1L798.4 687.6L800.5 692.3L802.7 696.3L805.2 700.0L807.8 703.4L810.2 706.3L812.3 708.7L813.8 710.6L814.1 710.4L812.7 708.4L810.9 705.8L808.6 702.8L806.2 699.3L803.8 695.6L801.6 691.7L799.6 687.2L797.4 681.7L795.3 675.9L793.4 670.4L791.7 665.7L790.1 662.5Z" fill-opacity="0.375"/>
<path d="M789.8 609.1L790.5 613.2L791.5 618.8L793.0 625.4L794.7 632.5L796.5 639.6L798.5 646.2L800.5 652.3L802.7 658.4L805.0 664.5L807.5 670.7L810.2 676.9L813.3 683.1L817.1 690.0L821.5 697.4L826.4 704.8L831.0 711.7L835.0 717.5L837.8 721.6L838.1 721.4L835.5 717.1L831.8 711.2L827.4 704.1L822.8 696.6L818.4 689.2L814.6 682.5L811.6 676.2L808.9 670.1L806.4 664.0L804.1 657.9L802.0 651.8L799.9 645.7L798.0 639.2L796.1 632.1L794.4 625.0L792.8 618.5L791.4 613.0L790.2 609.0Z" fill-opacity="0.15"/>
<ellipse cx="1017.1" cy="692.5" rx="39" ry="37.5" fill="none" stroke="#000" stroke-opacity=".65" stroke-width="1.5"/>
<path d="M1046.0 666.5L1047.0 668.1L1048.4 670.2L1050.1 672.7L1051.9 675.4L1053.4 678.2L1054.6 680.8L1055.5 683.5L1056.2 686.2L1056.8 689.0L1057.2 691.8L1057.3 694.6L1057.1 697.3L1056.6 700.1L1055.8 703.0L1054.8 705.9L1053.6 708.7L1052.2 711.4L1050.8 713.8L1049.1 716.2L1047.0 718.5L1044.8 720.7L1042.7 722.7L1040.8 724.4L1039.5 725.7L1039.8 725.9L1041.1 724.7L1043.0 723.2L1045.3 721.3L1047.7 719.2L1049.9 716.9L1051.7 714.5L1053.3 712.0L1054.7 709.2L1055.9 706.3L1057.0 703.4L1057.8 700.4L1058.3 697.5L1058.5 694.6L1058.4 691.7L1058.0 688.8L1057.4 685.9L1056.6 683.1L1055.7 680.4L1054.4 677.7L1052.7 674.9L1050.8 672.3L1048.9 669.8L1047.3 667.8L1046.2 666.4Z" fill-opacity="0.55"/>
<ellipse cx="1019" cy="692.4" rx="16.8" ry="18.2" fill="#0c0c0c"/>
<circle cx="991.9" cy="678" r="10.3" fill="#fff"/>
<path d="M982.7 680.7L983.0 681.4L983.4 682.3L983.9 683.4L984.5 684.6L985.3 685.6L986.3 686.5L987.5 687.0L988.8 687.5L990.2 687.8L991.7 688.0L993.2 688.0L994.6 687.9L996.2 687.4L997.7 686.7L999.2 685.8L1000.5 684.8L1001.6 684.0L1002.3 683.4L1002.1 683.0L1001.2 683.4L1000.0 684.0L998.5 684.6L997.0 685.3L995.6 685.9L994.3 686.3L993.1 686.4L991.8 686.4L990.5 686.2L989.3 685.9L988.1 685.5L987.2 685.1L986.4 684.5L985.6 683.7L984.8 682.8L984.1 681.9L983.5 681.1L983.1 680.5Z" fill-opacity="0.85"/>
<ellipse cx="995.1" cy="712.9" rx="6.3" ry="8.2" transform="rotate(20 995.1 712.9)" fill="#fff" stroke="#555" stroke-width="1.2"/>
<ellipse cx="1013.9" cy="720.6" rx="4.4" ry="5" fill="#fff" stroke="#555" stroke-width="1.1"/>
<ellipse cx="1029.3" cy="720" rx="3.8" ry="6.2" fill="#fff" stroke="#555" stroke-width="1.1"/>
<rect x="925" y="600" width="230" height="100" fill="none"/>
<path d="M943.2 706.5L944.3 704.5L945.8 701.7L947.7 698.3L949.7 694.8L951.9 691.5L954.1 688.6L956.5 685.9L959.1 683.2L961.8 680.6L964.7 678.0L967.7 675.6L970.8 673.2L974.1 671.1L977.5 669.0L981.2 667.0L985.0 665.2L989.0 663.6L993.1 662.1L997.3 660.8L1001.7 659.6L1006.3 658.6L1010.9 657.7L1015.7 657.0L1020.6 656.5L1025.7 656.2L1031.0 656.1L1036.5 656.1L1041.9 656.3L1047.2 656.7L1052.2 657.1L1056.8 657.6L1061.1 658.1L1065.2 658.8L1069.2 659.6L1073.3 660.5L1077.5 661.6L1081.7 662.8L1086.0 664.2L1090.4 665.7L1094.7 667.4L1099.1 669.0L1103.4 670.7L1107.9 672.4L1112.8 674.4L1117.6 676.3L1122.0 678.2L1125.8 679.8L1128.5 680.9L1128.8 680.4L1126.2 678.9L1122.7 676.9L1118.4 674.6L1113.9 672.1L1109.2 669.6L1104.9 667.4L1100.7 665.3L1096.5 663.2L1092.3 661.2L1088.0 659.2L1083.6 657.4L1079.2 655.8L1074.9 654.5L1070.7 653.3L1066.5 652.2L1062.2 651.3L1057.7 650.6L1052.9 650.0L1047.8 649.5L1042.3 649.2L1036.7 648.9L1031.0 648.9L1025.4 649.0L1020.0 649.3L1014.8 649.8L1009.8 650.6L1004.8 651.5L1000.0 652.6L995.3 653.9L990.8 655.3L986.4 656.9L982.1 658.7L978.0 660.6L974.0 662.7L970.2 665.0L966.6 667.4L963.2 670.0L960.0 672.8L957.0 675.8L954.3 679.0L951.9 682.2L949.8 685.6L947.9 689.3L946.3 693.3L945.1 697.3L944.1 701.0L943.3 704.1L942.6 706.3Z" fill-opacity="0.9"/>
<path d="M1073.0 657.5L1072.4 659.3L1072.4 661.6L1073.2 664.1L1074.0 666.7L1074.8 669.4L1075.5 671.9L1076.0 674.5L1076.6 677.3L1077.1 680.3L1077.5 683.1L1077.9 685.4L1078.1 687.1L1078.5 687.1L1078.6 685.4L1078.7 683.0L1078.8 680.2L1078.9 677.1L1078.8 674.1L1078.6 671.3L1078.2 668.6L1077.6 665.8L1076.9 663.0L1076.2 660.5L1074.9 658.5L1073.4 657.4Z" fill-opacity="0.88"/>
<path d="M960.3 726.6L962.6 726.3L965.7 725.9L969.4 725.4L973.4 725.0L977.6 724.6L981.6 724.5L985.6 724.6L989.8 724.9L994.1 725.4L998.6 726.0L1003.0 726.5L1007.3 727.1L1011.9 727.6L1016.9 728.2L1021.8 728.7L1026.5 729.2L1030.4 729.5L1033.2 729.8L1033.2 729.5L1030.4 729.0L1026.6 728.4L1022.0 727.7L1017.0 727.0L1012.1 726.3L1007.5 725.8L1003.1 725.3L998.7 724.7L994.3 724.1L989.9 723.7L985.7 723.3L981.6 723.2L977.5 723.4L973.3 723.9L969.3 724.5L965.6 725.2L962.5 725.8L960.3 726.3Z" fill-opacity="0.5"/>
<path d="M1006.1 734.4L1008.4 734.4L1011.5 734.4L1015.2 734.4L1019.2 734.4L1023.2 734.3L1026.7 734.3L1030.1 734.4L1033.7 734.6L1037.2 735.0L1040.5 735.2L1043.5 735.4L1046.1 735.4L1048.2 735.2L1049.9 735.0L1051.3 734.6L1052.3 734.2L1053.2 733.9L1053.9 733.7L1053.8 733.3L1053.1 733.5L1052.2 733.7L1051.1 733.9L1049.8 734.1L1048.1 734.2L1046.1 734.2L1043.6 734.0L1040.6 733.8L1037.3 733.5L1033.8 733.2L1030.2 732.9L1026.8 732.8L1023.1 732.8L1019.2 732.9L1015.2 733.1L1011.5 733.4L1008.4 733.7L1006.1 734.0Z" fill-opacity="0.8"/>
<path d="M1070.4 711.5L1069.9 712.6L1069.3 714.2L1068.5 716.1L1067.8 718.0L1066.9 719.9L1066.1 721.5L1065.0 722.9L1063.9 724.3L1062.6 725.6L1061.2 726.8L1059.8 728.0L1058.5 729.0L1057.2 730.0L1055.8 731.0L1054.4 731.9L1053.1 732.7L1052.0 733.4L1051.2 734.0L1051.4 734.3L1052.2 734.0L1053.5 733.5L1054.9 732.9L1056.5 732.1L1058.0 731.3L1059.5 730.3L1060.8 729.2L1062.2 728.0L1063.7 726.7L1065.0 725.3L1066.3 723.9L1067.4 722.3L1068.4 720.6L1069.2 718.5L1069.8 716.5L1070.2 714.5L1070.5 712.8L1070.8 711.7Z" fill-opacity="0.8"/>
<path d="M1053.6 733.7L1053.8 734.7L1054.4 735.8L1055.3 736.8L1056.2 738.0L1057.2 739.2L1058.1 740.5L1059.0 742.1L1060.1 743.9L1061.2 745.9L1062.3 747.7L1063.2 749.3L1063.9 750.4L1064.4 750.2L1064.0 749.0L1063.3 747.2L1062.6 745.2L1061.7 743.1L1060.8 741.1L1059.9 739.4L1059.0 738.0L1057.9 736.6L1056.9 735.4L1056.0 734.3L1055.0 733.7L1054.0 733.3Z" fill-opacity="0.8"/>
<path d="M1053.8 733.8C1054.7 733.3 1057.5 729.3 1059.0 730.9C1060.5 732.6 1062.2 741.7 1062.9 743.8Z" fill-opacity="0.3"/>
<path d="M945.3 648.5L946.0 649.7L947.0 651.3L948.1 653.3L949.5 655.3L950.9 657.4L952.5 659.3L954.4 661.3L956.6 663.3L958.9 665.3L961.0 667.1L963.0 668.6L964.7 669.2L965.0 668.8L964.1 667.2L962.3 665.6L960.2 663.7L957.9 661.8L955.7 659.8L953.9 658.1L952.3 656.3L950.7 654.4L949.1 652.5L947.7 650.8L946.6 649.3L945.7 648.2Z" fill-opacity="0.8"/>
<path d="M951.8 620.0L951.8 621.9L952.2 624.5L952.9 627.5L953.5 630.7L954.1 633.9L954.5 636.8L954.8 639.8L954.9 643.0L955.1 646.2L955.3 649.2L955.5 651.7L955.6 653.5L956.0 653.5L956.1 651.7L956.2 649.2L956.3 646.2L956.2 643.0L956.1 639.7L955.8 636.7L955.4 633.7L954.8 630.4L954.1 627.2L953.5 624.2L952.8 621.7L952.1 620.0Z" fill-opacity="0.72"/>
<path d="M945.7 687.1L946.1 685.4L946.7 682.9L947.3 680.0L948.0 677.0L948.8 674.3L950.0 672.0L951.6 670.2L953.9 668.4L956.4 666.7L958.8 665.1L960.9 663.8L962.3 662.7L962.2 662.4L960.6 663.2L958.3 664.2L955.7 665.5L953.0 667.2L950.6 669.1L948.7 671.2L947.4 673.7L946.5 676.7L945.9 679.8L945.6 682.7L945.5 685.3L945.3 687.0Z" fill-opacity="0.5"/>
<path d="M944.4 720.7L945.0 718.9L945.9 716.4L946.8 713.5L947.8 710.3L948.9 707.1L950.1 704.2L951.6 701.3L953.5 698.1L955.5 694.8L957.3 691.8L958.8 689.1L959.8 687.2L959.5 687.0L958.2 688.7L956.3 691.1L954.2 694.0L952.1 697.2L950.2 700.5L948.6 703.5L947.4 706.6L946.3 709.8L945.4 713.1L944.8 716.1L944.3 718.7L944.0 720.6Z" fill-opacity="0.5625"/>
<path d="M689.4 799.9L689.0 802.3L688.5 805.5L687.8 809.4L687.1 813.7L686.6 818.3L686.2 822.9L686.1 827.7L686.1 832.7L686.2 838.0L686.5 843.5L686.9 849.0L687.4 854.4L688.1 859.9L688.9 865.5L689.9 871.1L691.0 876.8L692.3 882.3L693.6 887.8L695.1 893.2L696.8 898.7L698.5 904.1L700.4 909.3L702.5 914.5L704.7 919.4L707.2 924.2L709.8 928.8L712.6 933.3L715.5 937.6L718.5 941.6L721.5 945.5L724.5 949.1L727.6 952.6L730.8 955.8L734.0 958.8L737.1 961.5L740.2 964.0L743.4 966.3L746.7 968.4L750.0 970.3L753.0 971.9L755.5 973.2L757.3 974.2L757.8 973.4L756.0 972.2L753.7 970.7L750.8 968.9L747.8 966.8L744.7 964.5L741.7 962.1L738.8 959.6L735.8 956.8L732.7 953.8L729.6 950.7L726.5 947.3L723.6 943.8L720.7 940.0L717.8 936.0L714.9 931.8L712.1 927.4L709.5 922.9L707.1 918.2L705.0 913.4L702.9 908.4L701.0 903.2L699.3 897.9L697.6 892.5L696.1 887.2L694.7 881.8L693.4 876.2L692.2 870.7L691.1 865.1L690.2 859.6L689.4 854.2L688.8 848.8L688.3 843.4L688.0 838.0L687.7 832.7L687.6 827.7L687.6 823.0L687.9 818.4L688.3 813.9L688.9 809.6L689.5 805.7L690.0 802.4L690.3 800.0Z" fill-opacity="0.9"/>
<path d="M592.4 740.0L592.4 744.0L592.3 749.6L592.3 756.2L592.6 763.3L593.0 770.4L593.7 777.0L594.7 783.2L595.7 789.6L597.0 795.9L598.4 802.2L600.1 808.2L602.1 814.0L604.3 819.4L606.9 824.7L609.7 829.7L612.6 834.6L615.7 839.2L618.8 843.6L622.0 847.8L625.3 851.8L628.8 855.5L632.3 859.1L635.8 862.4L639.3 865.7L642.9 868.9L646.8 872.2L650.8 875.3L654.4 878.1L657.5 880.4L659.7 882.1L659.9 881.8L657.8 880.1L654.7 877.7L651.1 874.8L647.3 871.7L643.4 868.3L639.9 865.0L636.5 861.7L633.0 858.3L629.6 854.7L626.2 851.0L622.9 847.0L619.8 842.9L616.7 838.5L613.7 833.9L610.8 829.1L608.0 824.1L605.5 818.9L603.3 813.5L601.4 807.8L599.7 801.8L598.2 795.6L597.0 789.3L595.9 783.0L595.0 776.8L594.3 770.2L593.9 763.2L593.6 756.1L593.3 749.5L593.0 744.0L592.7 740.0Z" fill-opacity="0.72"/>
<path d="M601.6 740.0L601.6 744.0L601.7 749.6L601.9 756.2L602.4 763.3L603.0 770.4L603.9 777.0L605.0 783.2L606.3 789.6L607.8 795.9L609.4 802.2L611.2 808.2L613.1 814.0L615.3 819.4L617.6 824.7L620.1 829.7L622.7 834.5L625.3 839.2L628.0 843.6L630.9 847.9L634.1 852.3L637.4 856.4L640.5 860.1L643.1 863.2L645.0 865.5L645.2 865.3L643.4 862.9L640.9 859.7L638.0 855.9L634.9 851.7L631.8 847.3L629.0 842.9L626.4 838.5L623.8 833.9L621.2 829.1L618.8 824.1L616.5 818.9L614.4 813.5L612.4 807.8L610.7 801.8L609.0 795.6L607.6 789.3L606.3 783.0L605.2 776.8L604.3 770.2L603.7 763.2L603.2 756.1L602.8 749.5L602.3 744.0L601.9 740.0Z" fill-opacity="0.6"/>
<path d="M615.3 740.0L615.3 744.1L615.3 749.6L615.6 756.2L616.3 763.3L617.1 770.5L618.0 777.1L619.2 783.3L620.5 789.4L622.0 795.6L623.6 801.8L625.4 808.0L627.3 814.1L629.5 820.5L632.0 827.2L634.7 833.8L637.4 840.2L640.0 846.0L642.3 851.0L644.4 855.3L646.4 859.1L648.3 862.4L649.9 865.2L651.2 867.4L652.2 869.2L652.7 868.9L651.9 867.1L650.7 864.7L649.3 861.9L647.7 858.5L646.0 854.6L644.1 850.2L642.1 845.1L639.6 839.2L637.0 832.9L634.4 826.3L631.9 819.7L629.7 813.4L627.8 807.2L626.0 801.1L624.4 795.0L623.0 788.9L621.7 782.8L620.5 776.7L619.5 770.1L618.7 763.1L618.1 756.0L617.4 749.5L616.6 744.0L615.9 740.0Z" fill-opacity="0.22499999999999998"/>
<path d="M650.4 751.1L651.0 754.9L651.7 760.2L652.7 766.4L653.9 773.2L655.4 780.0L657.1 786.4L659.1 792.5L661.5 798.8L664.0 805.1L666.7 811.4L669.3 817.5L671.9 823.3L674.5 829.3L677.5 835.3L680.4 841.2L683.2 846.6L685.6 851.1L687.3 854.4L687.7 854.2L686.2 850.8L684.1 846.2L681.7 840.6L679.0 834.6L676.2 828.5L673.6 822.6L671.1 816.7L668.4 810.6L665.8 804.4L663.2 798.1L660.9 791.9L658.9 785.8L657.2 779.5L655.5 772.8L654.1 766.1L652.8 760.0L651.7 754.8L650.8 751.0Z" fill-opacity="0.25"/>
<path d="M667.0 740.0L667.0 744.1L667.1 749.6L667.5 756.2L668.2 763.3L669.0 770.4L670.0 777.0L671.2 783.3L672.7 789.7L674.4 796.0L676.1 802.2L677.7 808.3L679.2 814.0L680.7 819.6L682.2 825.4L683.7 831.0L685.2 836.0L686.4 840.2L687.3 843.3L687.7 843.2L687.0 840.0L686.1 835.8L685.0 830.6L683.8 825.0L682.4 819.2L681.0 813.5L679.5 807.8L677.9 801.8L676.2 795.5L674.5 789.2L673.1 782.9L671.8 776.7L670.9 770.2L670.1 763.1L669.4 756.1L668.8 749.5L668.1 744.0L667.4 740.0Z" fill-opacity="0.25"/>
<path d="M672.6 740.0L672.4 743.0L672.3 747.0L672.6 751.8L672.9 757.1L673.3 762.5L673.8 767.7L674.6 773.4L675.6 779.7L676.8 786.1L678.0 792.1L679.1 797.2L679.9 800.9L680.3 800.8L679.8 797.1L679.1 791.9L678.2 785.9L677.1 779.4L676.1 773.1L675.3 767.6L674.8 762.3L674.4 757.0L674.1 751.7L673.8 746.9L673.4 742.9L672.9 740.0Z" fill-opacity="0.15"/>
<path d="M839.6 824.5L841.8 825.5L845.0 826.6L848.8 827.6L852.9 828.6L856.9 829.7L860.4 830.9L863.7 832.1L866.9 833.6L870.1 835.1L873.1 836.7L876.0 838.3L878.7 840.0L881.2 841.7L883.7 843.5L886.0 845.3L888.1 847.1L890.0 848.9L891.6 850.5L892.8 852.1L893.7 853.8L894.4 855.5L894.9 857.1L895.2 858.4L895.6 859.4L896.1 859.2L895.9 858.2L895.6 856.9L895.3 855.2L894.8 853.4L893.9 851.5L892.8 849.6L891.2 847.7L889.4 845.8L887.3 843.8L885.0 841.8L882.5 839.8L879.9 838.0L877.1 836.3L874.2 834.6L871.1 833.0L867.9 831.5L864.6 830.0L861.2 828.7L857.6 827.5L853.5 826.3L849.4 825.3L845.5 824.5L842.1 824.1L839.7 824.0Z" fill-opacity="0.88"/>
<path d="M862.4 922.1L862.7 923.1L863.2 924.4L863.8 925.9L864.7 927.5L866.0 928.9L867.5 930.1L869.4 931.0L871.6 931.7L874.0 932.3L876.2 932.8L878.2 932.7L879.6 932.6L879.7 932.0L878.5 931.2L876.7 930.4L874.6 929.8L872.4 929.2L870.4 928.6L868.9 927.9L867.8 927.0L866.7 925.8L865.7 924.6L864.6 923.5L863.7 922.5L863.0 921.8Z" fill-opacity="0.85"/>
<path d="M882.6 930.0L884.8 930.5L887.8 930.4L891.4 930.1L895.1 929.9L898.5 929.7L901.4 929.7L903.6 929.8L905.6 930.0L907.4 930.2L909.1 930.5L910.7 930.8L912.3 931.0L913.9 931.4L915.5 931.8L917.1 932.2L918.6 932.7L919.8 933.0L920.7 933.3L920.9 932.8L920.0 932.4L918.9 931.9L917.5 931.3L915.9 930.6L914.3 930.0L912.7 929.5L911.1 929.0L909.5 928.6L907.8 928.2L905.9 927.9L903.8 927.6L901.4 927.5L898.5 927.5L894.9 927.7L891.2 928.0L887.7 928.2L884.7 928.7L882.6 929.4Z" fill-opacity="0.85"/>
<path d="M1028.4 842.7L1028.4 844.3L1028.4 846.6L1028.4 849.3L1028.6 852.2L1029.0 855.1L1029.7 857.7L1030.8 860.1L1032.2 862.5L1033.7 864.7L1035.5 866.9L1037.3 869.0L1039.1 870.9L1041.1 872.7L1043.3 874.3L1045.6 875.8L1047.9 877.2L1050.2 878.3L1052.3 879.3L1054.5 879.9L1056.7 880.3L1058.9 880.5L1060.8 880.6L1062.4 880.6L1063.6 880.7L1063.7 880.3L1062.5 880.1L1060.9 879.9L1059.0 879.6L1056.9 879.3L1054.8 878.7L1052.8 878.0L1050.8 877.0L1048.7 875.8L1046.4 874.5L1044.2 873.0L1042.1 871.5L1040.2 869.8L1038.4 867.9L1036.7 865.9L1035.0 863.8L1033.5 861.6L1032.2 859.4L1031.2 857.2L1030.4 854.7L1029.9 852.0L1029.5 849.2L1029.2 846.6L1029.0 844.3L1028.8 842.7Z" fill-opacity="0.72"/>
<path d="M1063.6 880.3L1061.5 880.9L1058.5 881.7L1055.1 882.8L1051.4 884.2L1047.9 886.0L1044.7 888.2L1042.0 890.6L1039.4 893.4L1036.9 896.4L1034.5 899.7L1032.1 903.2L1029.8 906.8L1027.4 910.7L1025.1 915.0L1022.8 919.4L1020.6 924.0L1018.6 928.4L1016.8 932.7L1015.3 936.9L1013.9 941.1L1012.8 945.3L1011.8 949.3L1011.0 953.2L1010.5 956.9L1010.2 960.4L1010.2 963.8L1010.3 966.9L1010.6 970.0L1011.1 972.8L1011.6 975.5L1012.4 978.2L1013.4 980.7L1014.6 983.2L1015.7 985.3L1016.7 987.1L1017.4 988.4L1017.7 988.2L1017.1 986.9L1016.2 985.1L1015.1 982.9L1014.0 980.5L1013.1 977.9L1012.4 975.3L1011.9 972.7L1011.6 969.8L1011.3 966.9L1011.2 963.7L1011.3 960.5L1011.7 957.1L1012.3 953.5L1013.1 949.6L1014.1 945.7L1015.4 941.6L1016.7 937.4L1018.3 933.3L1020.0 929.1L1022.0 924.6L1024.2 920.1L1026.5 915.7L1028.8 911.5L1031.1 907.6L1033.4 904.0L1035.7 900.6L1038.1 897.4L1040.5 894.4L1043.1 891.7L1045.7 889.4L1048.7 887.4L1052.1 885.7L1055.6 884.1L1058.9 882.8L1061.7 881.6L1063.7 880.7Z" fill-opacity="0.72"/>
<path d="M1080.4 898.0L1080.7 897.2L1081.1 896.1L1081.5 894.7L1081.9 893.3L1082.0 891.8L1081.7 890.4L1081.2 889.2L1080.4 887.9L1079.3 886.8L1078.0 885.7L1076.6 884.9L1074.9 884.3L1073.1 884.0L1071.1 883.7L1068.9 883.7L1066.5 883.9L1064.0 884.4L1061.5 885.3L1058.9 886.6L1056.1 888.1L1053.2 890.0L1050.2 892.2L1047.4 894.7L1044.6 897.5L1042.0 900.6L1039.4 904.0L1036.8 907.8L1034.4 911.7L1032.0 915.7L1029.8 919.8L1027.6 923.9L1025.5 928.3L1023.6 932.7L1021.8 937.2L1020.1 941.5L1018.7 945.7L1017.6 949.7L1016.6 953.7L1015.8 957.6L1015.2 961.3L1014.7 964.8L1014.4 968.0L1014.2 971.1L1014.4 974.1L1014.7 976.8L1015.0 979.3L1015.3 981.3L1015.5 982.8L1015.9 982.8L1015.8 981.3L1015.5 979.2L1015.2 976.8L1015.1 974.0L1015.0 971.1L1015.2 968.1L1015.6 964.9L1016.2 961.4L1016.9 957.8L1017.8 954.0L1018.8 950.1L1020.1 946.1L1021.5 942.0L1023.2 937.7L1025.0 933.3L1027.0 928.9L1029.0 924.6L1031.1 920.5L1033.4 916.5L1035.7 912.5L1038.1 908.6L1040.7 904.9L1043.2 901.5L1045.8 898.5L1048.4 895.9L1051.2 893.4L1054.1 891.3L1056.9 889.5L1059.6 887.9L1062.1 886.7L1064.5 885.9L1066.7 885.4L1068.9 885.2L1071.0 885.3L1072.8 885.5L1074.5 885.8L1075.9 886.3L1077.2 887.0L1078.3 887.9L1079.2 888.9L1080.0 889.9L1080.6 890.8L1080.9 891.9L1080.9 893.2L1080.7 894.6L1080.4 895.9L1080.2 897.1L1080.0 898.0Z" fill-opacity="0.66"/>
<path d="M1063.7 877.9L1065.8 878.0L1068.8 877.9L1072.3 877.7L1075.9 877.5L1079.2 877.5L1081.9 877.7L1084.0 878.3L1086.0 879.1L1087.7 880.2L1089.2 881.3L1090.5 882.6L1091.5 883.7L1092.1 885.0L1092.5 886.5L1092.7 888.3L1092.8 889.9L1092.8 891.4L1092.9 892.5L1093.4 892.5L1093.5 891.4L1093.7 890.0L1093.9 888.3L1094.0 886.4L1093.7 884.5L1093.0 882.8L1091.8 881.3L1090.4 879.9L1088.8 878.6L1086.8 877.5L1084.7 876.5L1082.2 875.9L1079.3 875.6L1075.8 875.7L1072.2 876.0L1068.7 876.5L1065.7 877.1L1063.6 877.5Z" fill-opacity="0.375"/>
<path d="M1164.8 779.8L1162.4 784.9L1159.4 792.2L1156.1 800.9L1152.7 810.2L1149.6 819.2L1147.2 827.1L1145.3 834.2L1143.8 841.1L1142.5 847.8L1141.5 854.0L1140.7 859.6L1140.2 864.4L1139.8 868.4L1139.8 871.5L1140.0 874.1L1140.3 876.1L1140.5 877.7L1140.7 879.0L1141.1 878.9L1141.1 877.6L1141.0 876.0L1140.9 874.0L1140.9 871.5L1141.1 868.4L1141.6 864.6L1142.4 859.9L1143.4 854.3L1144.4 848.2L1145.7 841.5L1147.2 834.6L1149.1 827.6L1151.5 819.8L1154.6 810.9L1158.0 801.6L1161.2 792.9L1163.8 785.4L1165.3 780.0Z" fill-opacity="0.3125"/>
<path d="M1167.6 779.8L1165.4 785.0L1162.6 792.5L1159.4 801.3L1156.1 810.6L1153.1 819.5L1150.6 827.2L1148.7 833.9L1147.0 840.5L1145.6 846.7L1144.4 852.3L1143.5 856.9L1142.8 860.3L1143.1 860.4L1144.0 857.0L1145.2 852.4L1146.6 846.9L1148.1 840.8L1149.9 834.2L1151.8 827.5L1154.3 819.9L1157.3 811.0L1160.6 801.8L1163.7 792.9L1166.3 785.4L1167.9 779.9Z" fill-opacity="0.1875"/>
<path d="M1354.3 788.1L1353.7 793.1L1353.2 800.0L1352.9 808.2L1352.5 817.0L1352.1 825.6L1351.6 833.5L1351.0 840.7L1350.2 848.0L1349.4 855.2L1348.7 862.2L1348.0 868.7L1347.5 874.8L1347.2 880.4L1347.1 885.8L1347.0 890.8L1347.1 895.2L1347.1 898.9L1347.1 901.7L1347.6 901.7L1347.7 898.9L1347.9 895.3L1348.2 890.8L1348.5 885.9L1348.8 880.5L1349.3 874.9L1349.8 868.9L1350.5 862.4L1351.3 855.5L1352.1 848.2L1352.8 840.9L1353.4 833.6L1353.9 825.7L1354.4 817.1L1354.7 808.3L1355.0 800.1L1355.0 793.1L1354.8 788.1Z" fill-opacity="0.25"/>
<path d="M1367.8 966.8L1368.4 968.2L1369.2 970.2L1370.3 972.5L1371.4 975.0L1372.5 977.6L1373.4 980.3L1374.1 983.4L1374.8 987.1L1375.3 991.0L1375.8 994.7L1376.3 997.8L1377.1 1000.0L1377.5 999.9L1377.6 997.6L1377.4 994.5L1376.9 990.8L1376.4 986.9L1375.7 983.1L1375.0 979.9L1374.0 977.1L1372.8 974.3L1371.5 971.9L1370.2 969.7L1369.0 967.9L1368.2 966.6Z" fill-opacity="0.375"/>
<path d="M1367.1 967.5L1368.1 969.4L1369.5 971.9L1371.1 974.9L1372.8 978.2L1374.1 981.5L1375.0 984.8L1375.4 988.1L1375.6 991.9L1375.4 995.7L1375.1 999.6L1374.5 1003.2L1373.8 1006.4L1372.8 1009.3L1371.6 1012.0L1370.1 1014.6L1368.6 1016.9L1367.0 1019.0L1365.5 1020.9L1364.0 1022.5L1362.2 1023.8L1360.4 1025.0L1358.7 1025.9L1357.2 1026.7L1356.2 1027.4L1356.4 1027.8L1357.5 1027.3L1359.0 1026.6L1360.9 1025.8L1362.9 1024.8L1364.8 1023.5L1366.7 1022.0L1368.3 1020.1L1370.1 1017.9L1371.7 1015.5L1373.3 1012.9L1374.6 1010.0L1375.6 1006.9L1376.4 1003.5L1376.9 999.8L1377.3 995.8L1377.5 991.8L1377.3 988.0L1376.8 984.4L1375.8 980.9L1374.2 977.5L1372.3 974.3L1370.3 971.4L1368.7 969.0L1367.5 967.3Z" fill-opacity="0.3125"/>
<path d="M709.8 462.6L709.3 464.0L708.6 465.3L707.9 467.2L706.9 469.9L705.9 474.0L704.7 479.9L703.1 488.4L701.2 499.1L699.1 511.2L697.2 523.7L695.7 535.6L694.8 546.1L694.6 554.9L694.9 563.0L695.5 570.4L696.4 577.6L697.4 584.8L698.5 592.3L699.7 600.1L701.1 608.0L702.6 615.9L704.2 623.7L706.0 631.3L707.8 638.4L710.0 645.5L712.5 652.7L715.1 659.7L717.5 666.0L719.6 671.3L721.1 675.2L721.4 675.1L720.0 671.2L718.0 665.8L715.7 659.5L713.2 652.5L710.9 645.2L708.8 638.1L707.1 631.0L705.3 623.5L703.7 615.7L702.2 607.8L700.9 599.9L699.7 592.1L698.6 584.6L697.6 577.5L696.7 570.3L696.1 562.9L695.8 554.9L696.0 546.1L696.9 535.7L698.4 523.8L700.2 511.3L702.2 499.2L703.9 488.5L705.3 480.1L706.4 474.2L707.4 470.0L708.2 467.3L709.0 465.4L709.6 464.1L710.0 462.8Z" fill-opacity="0.5"/></g>
</svg></div>
<div id="hruler" class="abs"><svg width="1436" height="22" viewBox="192 149 1436 22" style="left:0;top:0"><rect x="192" y="169.5" width="1436" height="1.5" fill="#c4c4c4"/><rect x="212" y="149" width="1.5" height="22" fill="#c4c4c4"/><rect x="217.07" y="166.5" width="1.2" height="3.5" fill="#c4c4c4"/><rect x="222.20" y="150" width="1.2" height="20" fill="#c4c4c4"/><rect x="227.33" y="166.5" width="1.2" height="3.5" fill="#c4c4c4"/><rect x="232.46" y="166.5" width="1.2" height="3.5" fill="#c4c4c4"/><rect x="237.59" y="166.5" width="1.2" height="3.5" fill="#c4c4c4"/><rect x="242.72" y="166.5" width="1.2" height="3.5" fill="#c4c4c4"/><rect x="247.85" y="164" width="1.2" height="6" fill="#c4c4c4"/><rect x="252.98" y="166.5" width="1.2" height="3.5" fill="#c4c4c4"/><rect x="258.11" y="166.5" width="1.2" height="3.5" fill="#c4c4c4"/><rect x="263.24" y="166.5" width="1.2" height="3.5" fill="#c4c4c4"/><rect x="268.37" y="166.5" width="1.2" height="3.5" fill="#c4c4c4"/><rect x="273.50" y="150" width="1.2" height="20" fill="#c4c4c4"/><rect x="278.63" y="166.5" width="1.2" height="3.5" fill="#c4c4c4"/><rect x="283.76" y="166.5" width="1.2" height="3.5" fill="#c4c4c4"/><rect x="288.89" y="166.5" width="1.2" height="3.5" fill="#c4c4c4"/><rect x="294.02" y="166.5" width="1.2" height="3.5" fill="#c4c4c4"/><rect x="299.15" y="164" width="1.2" height="6" fill="#c4c4c4"/><rect x="304.28" y="166.5" width="1.2" height="3.5" fill="#c4c4c4"/><rect x="309.41" y="166.5" width="1.2" height="3.5" fill="#c4c4c4"/><rect x="314.54" y="166.5" width="1.2" height="3.5" fill="#c4c4c4"/><rect x="319.67" y="166.5" width="1.2" height="3.5" fill="#c4c4c4"/><rect x="324.80" y="150" width="1.2" height="20" fill="#c4c4c4"/><rect x="329.93" y="166.5" width="1.2" height="3.5" fill="#c4c4c4"/><rect x="335.06" y="166.5" width="1.2" height="3.5" fill="#c4c4c4"/><rect x="340.19" y="166.5" width="1.2" height="3.5" fill="#c4c4c4"/><rect x="345.32" y="166.5" width="1.2" height="3.5" fill="#c4c4c4"/><rect x="350.45" y="164" width="1.2" height="6" fill="#c4c4c4"/><rect x="355.58" y="166.5" width="1.2" height="3.5" fill="#c4c4c4"/><rect x="360.71" y="166.5" width="1.2" height="3.5" fill="#c4c4c4"/><rect x="365.84" y="166.5" width="1.2" height="3.5" fill="#c4c4c4"/><rect x="370.97" y="166.5" width="1.2" height="3.5" fill="#c4c4c4"/><rect x="376.10" y="150" width="1.2" height="20" fill="#c4c4c4"/><rect x="381.23" y="166.5" width="1.2" height="3.5" fill="#c4c4c4"/><rect x="386.36" y="166.5" width="1.2" height="3.5" fill="#c4c4c4"/><rect x="391.49" y="166.5" width="1.2" height="3.5" fill="#c4c4c4"/><rect x="396.62" y="166.5" width="1.2" height="3.5" fill="#c4c4c4"/><rect x="401.75" y="164" width="1.2" height="6" fill="#c4c4c4"/><rect x="406.88" y="166.5" width="1.2" height="3.5" fill="#c4c4c4"/><rect x="412.01" y="166.5" width="1.2" height="3.5" fill="#c4c4c4"/><rect x="417.14" y="166.5" width="1.2" height="3.5" fill="#c4c4c4"/><rect x="422.27" y="166.5" width="1.2" height="3.5" fill="#c4c4c4"/><rect x="427.40" y="150" width="1.2" height="20" fill="#c4c4c4"/><rect x="432.53" y="166.5" width="1.2" height="3.5" fill="#c4c4c4"/><rect x="437.66" y="166.5" width="1.2" height="3.5" fill="#c4c4c4"/><rect x="442.79" y="166.5" width="1.2" height="3.5" fill="#c4c4c4"/><rect x="447.92" y="166.5" width="1.2" height="3.5" fill="#c4c4c4"/><rect x="453.05" y="164" width="1.2" height="6" fill="#c4c4c4"/><rect x="458.18" y="166.5" width="1.2" height="3.5" fill="#c4c4c4"/><rect x="463.31" y="166.5" width="1.2" height="3.5" fill="#c4c4c4"/><rect x="468.44" y="166.5" width="1.2" height="3.5" fill="#c4c4c4"/><rect x="473.57" y="166.5" width="1.2" height="3.5" fill="#c4c4c4"/><rect x="478.70" y="150" width="1.2" height="20" fill="#c4c4c4"/><rect x="483.83" y="166.5" width="1.2" height="3.5" fill="#c4c4c4"/><rect x="488.96" y="166.5" width="1.2" height="3.5" fill="#c4c4c4"/><rect x="494.09" y="166.5" width="1.2" height="3.5" fill="#c4c4c4"/><rect x="499.22" y="166.5" width="1.2" height="3.5" fill="#c4c4c4"/><rect x="504.35" y="164" width="1.2" height="6" fill="#c4c4c4"/><rect x="509.48" y="166.5" width="1.2" height="3.5" fill="#c4c4c4"/><rect x="514.61" y="166.5" width="1.2" height="3.5" fill="#c4c4c4"/><rect x="519.74" y="166.5" width="1.2" height="3.5" fill="#c4c4c4"/><rect x="524.87" y="166.5" width="1.2" height="3.5" fill="#c4c4c4"/><rect x="530.00" y="150" width="1.2" height="20" fill="#c4c4c4"/><rect x="535.13" y="166.5" width="1.2" height="3.5" fill="#c4c4c4"/><rect x="540.26" y="166.5" width="1.2" height="3.5" fill="#c4c4c4"/><rect x="545.39" y="166.5" width="1.2" height="3.5" fill="#c4c4c4"/><rect x="550.52" y="166.5" width="1.2" height="3.5" fill="#c4c4c4"/><rect x="555.65" y="164" width="1.2" height="6" fill="#c4c4c4"/><rect x="560.78" y="166.5" width="1.2" height="3.5" fill="#c4c4c4"/><rect x="565.91" y="166.5" width="1.2" height="3.5" fill="#c4c4c4"/><rect x="571.04" y="166.5" width="1.2" height="3.5" fill="#c4c4c4"/><rect x="576.17" y="166.5" width="1.2" height="3.5" fill="#c4c4c4"/><rect x="581.30" y="150" width="1.2" height="20" fill="#c4c4c4"/><rect x="586.43" y="166.5" width="1.2" height="3.5" fill="#c4c4c4"/><rect x="591.56" y="166.5" width="1.2" height="3.5" fill="#c4c4c4"/><rect x="596.69" y="166.5" width="1.2" height="3.5" fill="#c4c4c4"/><rect x="601.82" y="166.5" width="1.2" height="3.5" fill="#c4c4c4"/><rect x="606.95" y="164" width="1.2" height="6" fill="#c4c4c4"/><rect x="612.08" y="166.5" width="1.2" height="3.5" fill="#c4c4c4"/><rect x="617.21" y="166.5" width="1.2" height="3.5" fill="#c4c4c4"/><rect x="622.34" y="166.5" width="1.2" height="3.5" fill="#c4c4c4"/><rect x="627.47" y="166.5" width="1.2" height="3.5" fill="#c4c4c4"/><rect x="632.60" y="150" width="1.2" height="20" fill="#c4c4c4"/><rect x="637.73" y="166.5" width="1.2" height="3.5" fill="#c4c4c4"/><rect x="642.86" y="166.5" width="1.2" height="3.5" fill="#c4c4c4"/><rect x="647.99" y="166.5" width="1.2" height="3.5" fill="#c4c4c4"/><rect x="653.12" y="166.5" width="1.2" height="3.5" fill="#c4c4c4"/><rect x="658.25" y="164" width="1.2" height="6" fill="#c4c4c4"/><rect x="663.38" y="166.5" width="1.2" height="3.5" fill="#c4c4c4"/><rect x="668.51" y="166.5" width="1.2" height="3.5" fill="#c4c4c4"/><rect x="673.64" y="166.5" width="1.2" height="3.5" fill="#c4c4c4"/><rect x="678.77" y="166.5" width="1.2" height="3.5" fill="#c4c4c4"/><rect x="683.90" y="150" width="1.2" height="20" fill="#c4c4c4"/><rect x="689.03" y="166.5" width="1.2" height="3.5" fill="#c4c4c4"/><rect x="694.16" y="166.5" width="1.2" height="3.5" fill="#c4c4c4"/><rect x="699.29" y="166.5" width="1.2" height="3.5" fill="#c4c4c4"/><rect x="704.42" y="166.5" width="1.2" height="3.5" fill="#c4c4c4"/><rect x="709.55" y="164" width="1.2" height="6" fill="#c4c4c4"/><rect x="714.68" y="166.5" width="1.2" height="3.5" fill="#c4c4c4"/><rect x="719.81" y="166.5" width="1.2" height="3.5" fill="#c4c4c4"/><rect x="724.94" y="166.5" width="1.2" height="3.5" fill="#c4c4c4"/><rect x="730.07" y="166.5" width="1.2" height="3.5" fill="#c4c4c4"/><rect x="735.20" y="150" width="1.2" height="20" fill="#c4c4c4"/><rect x="740.33" y="166.5" width="1.2" height="3.5" fill="#c4c4c4"/><rect x="745.46" y="166.5" width="1.2" height="3.5" fill="#c4c4c4"/><rect x="750.59" y="166.5" width="1.2" height="3.5" fill="#c4c4c4"/><rect x="755.72" y="166.5" width="1.2" height="3.5" fill="#c4c4c4"/><rect x="760.85" y="164" width="1.2" height="6" fill="#c4c4c4"/><rect x="765.98" y="166.5" width="1.2" height="3.5" fill="#c4c4c4"/><rect x="771.11" y="166.5" width="1.2" height="3.5" fill="#c4c4c4"/><rect x="776.24" y="166.5" width="1.2" height="3.5" fill="#c4c4c4"/><rect x="781.37" y="166.5" width="1.2" height="3.5" fill="#c4c4c4"/><rect x="786.50" y="150" width="1.2" height="20" fill="#c4c4c4"/><rect x="791.63" y="166.5" width="1.2" height="3.5" fill="#c4c4c4"/><rect x="796.76" y="166.5" width="1.2" height="3.5" fill="#c4c4c4"/><rect x="801.89" y="166.5" width="1.2" height="3.5" fill="#c4c4c4"/><rect x="807.02" y="166.5" width="1.2" height="3.5" fill="#c4c4c4"/><rect x="812.15" y="164" width="1.2" height="6" fill="#c4c4c4"/><rect x="817.28" y="166.5" width="1.2" height="3.5" fill="#c4c4c4"/><rect x="822.41" y="166.5" width="1.2" height="3.5" fill="#c4c4c4"/><rect x="827.54" y="166.5" width="1.2" height="3.5" fill="#c4c4c4"/><rect x="832.67" y="166.5" width="1.2" height="3.5" fill="#c4c4c4"/><rect x="837.80" y="150" width="1.2" height="20" fill="#c4c4c4"/><rect x="842.93" y="166.5" width="1.2" height="3.5" fill="#c4c4c4"/><rect x="848.06" y="166.5" width="1.2" height="3.5" fill="#c4c4c4"/><rect x="853.19" y="166.5" width="1.2" height="3.5" fill="#c4c4c4"/><rect x="858.32" y="166.5" width="1.2" height="3.5" fill="#c4c4c4"/><rect x="863.45" y="164" width="1.2" height="6" fill="#c4c4c4"/><rect x="868.58" y="166.5" width="1.2" height="3.5" fill="#c4c4c4"/><rect x="873.71" y="166.5" width="1.2" height="3.5" fill="#c4c4c4"/><rect x="878.84" y="166.5" width="1.2" height="3.5" fill="#c4c4c4"/><rect x="883.97" y="166.5" width="1.2" height="3.5" fill="#c4c4c4"/><rect x="889.10" y="150" width="1.2" height="20" fill="#c4c4c4"/><rect x="894.23" y="166.5" width="1.2" height="3.5" fill="#c4c4c4"/><rect x="899.36" y="166.5" width="1.2" height="3.5" fill="#c4c4c4"/><rect x="904.49" y="166.5" width="1.2" height="3.5" fill="#c4c4c4"/><rect x="909.62" y="166.5" width="1.2" height="3.5" fill="#c4c4c4"/><rect x="914.75" y="164" width="1.2" height="6" fill="#c4c4c4"/><rect x="919.88" y="166.5" width="1.2" height="3.5" fill="#c4c4c4"/><rect x="925.01" y="166.5" width="1.2" height="3.5" fill="#c4c4c4"/><rect x="930.14" y="166.5" width="1.2" height="3.5" fill="#c4c4c4"/><rect x="935.27" y="166.5" width="1.2" height="3.5" fill="#c4c4c4"/><rect x="940.40" y="150" width="1.2" height="20" fill="#c4c4c4"/><rect x="945.53" y="166.5" width="1.2" height="3.5" fill="#c4c4c4"/><rect x="950.66" y="166.5" width="1.2" height="3.5" fill="#c4c4c4"/><rect x="955.79" y="166.5" width="1.2" height="3.5" fill="#c4c4c4"/><rect x="960.92" y="166.5" width="1.2" height="3.5" fill="#c4c4c4"/><rect x="966.05" y="164" width="1.2" height="6" fill="#c4c4c4"/><rect x="971.18" y="166.5" width="1.2" height="3.5" fill="#c4c4c4"/><rect x="976.31" y="166.5" width="1.2" height="3.5" fill="#c4c4c4"/><rect x="981.44" y="166.5" width="1.2" height="3.5" fill="#c4c4c4"/><rect x="986.57" y="166.5" width="1.2" height="3.5" fill="#c4c4c4"/><rect x="991.70" y="150" width="1.2" height="20" fill="#c4c4c4"/><rect x="996.83" y="166.5" width="1.2" height="3.5" fill="#c4c4c4"/><rect x="1001.96" y="166.5" width="1.2" height="3.5" fill="#c4c4c4"/><rect x="1007.09" y="166.5" width="1.2" height="3.5" fill="#c4c4c4"/><rect x="1012.22" y="166.5" width="1.2" height="3.5" fill="#c4c4c4"/><rect x="1017.35" y="164" width="1.2" height="6" fill="#c4c4c4"/><rect x="1022.48" y="166.5" width="1.2" height="3.5" fill="#c4c4c4"/><rect x="1027.61" y="166.5" width="1.2" height="3.5" fill="#c4c4c4"/><rect x="1032.74" y="166.5" width="1.2" height="3.5" fill="#c4c4c4"/><rect x="1037.87" y="166.5" width="1.2" height="3.5" fill="#c4c4c4"/><rect x="1043.00" y="150" width="1.2" height="20" fill="#c4c4c4"/><rect x="1048.13" y="166.5" width="1.2" height="3.5" fill="#c4c4c4"/><rect x="1053.26" y="166.5" width="1.2" height="3.5" fill="#c4c4c4"/><rect x="1058.39" y="166.5" width="1.2" height="3.5" fill="#c4c4c4"/><rect x="1063.52" y="166.5" width="1.2" height="3.5" fill="#c4c4c4"/><rect x="1068.65" y="164" width="1.2" height="6" fill="#c4c4c4"/><rect x="1073.78" y="166.5" width="1.2" height="3.5" fill="#c4c4c4"/><rect x="1078.91" y="166.5" width="1.2" height="3.5" fill="#c4c4c4"/><rect x="1084.04" y="166.5" width="1.2" height="3.5" fill="#c4c4c4"/><rect x="1089.17" y="166.5" width="1.2" height="3.5" fill="#c4c4c4"/><rect x="1094.30" y="150" width="1.2" height="20" fill="#c4c4c4"/><rect x="1099.43" y="166.5" width="1.2" height="3.5" fill="#c4c4c4"/><rect x="1104.56" y="166.5" width="1.2" height="3.5" fill="#c4c4c4"/><rect x="1109.69" y="166.5" width="1.2" height="3.5" fill="#c4c4c4"/><rect x="1114.82" y="166.5" width="1.2" height="3.5" fill="#c4c4c4"/><rect x="1119.95" y="164" width="1.2" height="6" fill="#c4c4c4"/><rect x="1125.08" y="166.5" width="1.2" height="3.5" fill="#c4c4c4"/><rect x="1130.21" y="166.5" width="1.2" height="3.5" fill="#c4c4c4"/><rect x="1135.34" y="166.5" width="1.2" height="3.5" fill="#c4c4c4"/><rect x="1140.47" y="166.5" width="1.2" height="3.5" fill="#c4c4c4"/><rect x="1145.60" y="150" width="1.2" height="20" fill="#c4c4c4"/><rect x="1150.73" y="166.5" width="1.2" height="3.5" fill="#c4c4c4"/><rect x="1155.86" y="166.5" width="1.2" height="3.5" fill="#c4c4c4"/><rect x="1160.99" y="166.5" width="1.2" height="3.5" fill="#c4c4c4"/><rect x="1166.12" y="166.5" width="1.2" height="3.5" fill="#c4c4c4"/><rect x="1171.25" y="164" width="1.2" height="6" fill="#c4c4c4"/><rect x="1176.38" y="166.5" width="1.2" height="3.5" fill="#c4c4c4"/><rect x="1181.51" y="166.5" width="1.2" height="3.5" fill="#c4c4c4"/><rect x="1186.64" y="166.5" width="1.2" height="3.5" fill="#c4c4c4"/><rect x="1191.77" y="166.5" width="1.2" height="3.5" fill="#c4c4c4"/><rect x="1196.90" y="150" width="1.2" height="20" fill="#c4c4c4"/><rect x="1202.03" y="166.5" width="1.2" height="3.5" fill="#c4c4c4"/><rect x="1207.16" y="166.5" width="1.2" height="3.5" fill="#c4c4c4"/><rect x="1212.29" y="166.5" width="1.2" height="3.5" fill="#c4c4c4"/><rect x="1217.42" y="166.5" width="1.2" height="3.5" fill="#c4c4c4"/><rect x="1222.55" y="164" width="1.2" height="6" fill="#c4c4c4"/><rect x="1227.68" y="166.5" width="1.2" height="3.5" fill="#c4c4c4"/><rect x="1232.81" y="166.5" width="1.2" height="3.5" fill="#c4c4c4"/><rect x="1237.94" y="166.5" width="1.2" height="3.5" fill="#c4c4c4"/><rect x="1243.07" y="166.5" width="1.2" height="3.5" fill="#c4c4c4"/><rect x="1248.20" y="150" width="1.2" height="20" fill="#c4c4c4"/><rect x="1253.33" y="166.5" width="1.2" height="3.5" fill="#c4c4c4"/><rect x="1258.46" y="166.5" width="1.2" height="3.5" fill="#c4c4c4"/><rect x="1263.59" y="166.5" width="1.2" height="3.5" fill="#c4c4c4"/><rect x="1268.72" y="166.5" width="1.2" height="3.5" fill="#c4c4c4"/><rect x="1273.85" y="164" width="1.2" height="6" fill="#c4c4c4"/><rect x="1278.98" y="166.5" width="1.2" height="3.5" fill="#c4c4c4"/><rect x="1284.11" y="166.5" width="1.2" height="3.5" fill="#c4c4c4"/><rect x="1289.24" y="166.5" width="1.2" height="3.5" fill="#c4c4c4"/><rect x="1294.37" y="166.5" width="1.2" height="3.5" fill="#c4c4c4"/><rect x="1299.50" y="150" width="1.2" height="20" fill="#c4c4c4"/><rect x="1304.63" y="166.5" width="1.2" height="3.5" fill="#c4c4c4"/><rect x="1309.76" y="166.5" width="1.2" height="3.5" fill="#c4c4c4"/><rect x="1314.89" y="166.5" width="1.2" height="3.5" fill="#c4c4c4"/><rect x="1320.02" y="166.5" width="1.2" height="3.5" fill="#c4c4c4"/><rect x="1325.15" y="164" width="1.2" height="6" fill="#c4c4c4"/><rect x="1330.28" y="166.5" width="1.2" height="3.5" fill="#c4c4c4"/><rect x="1335.41" y="166.5" width="1.2" height="3.5" fill="#c4c4c4"/><rect x="1340.54" y="166.5" width="1.2" height="3.5" fill="#c4c4c4"/><rect x="1345.67" y="166.5" width="1.2" height="3.5" fill="#c4c4c4"/><rect x="1350.80" y="150" width="1.2" height="20" fill="#c4c4c4"/><rect x="1355.93" y="166.5" width="1.2" height="3.5" fill="#c4c4c4"/><rect x="1361.06" y="166.5" width="1.2" height="3.5" fill="#c4c4c4"/><rect x="1366.19" y="166.5" width="1.2" height="3.5" fill="#c4c4c4"/><rect x="1371.32" y="166.5" width="1.2" height="3.5" fill="#c4c4c4"/><rect x="1376.45" y="164" width="1.2" height="6" fill="#c4c4c4"/><rect x="1381.58" y="166.5" width="1.2" height="3.5" fill="#c4c4c4"/><rect x="1386.71" y="166.5" width="1.2" height="3.5" fill="#c4c4c4"/><rect x="1391.84" y="166.5" width="1.2" height="3.5" fill="#c4c4c4"/><rect x="1396.97" y="166.5" width="1.2" height="3.5" fill="#c4c4c4"/><rect x="1402.10" y="150" width="1.2" height="20" fill="#c4c4c4"/><rect x="1407.23" y="166.5" width="1.2" height="3.5" fill="#c4c4c4"/><rect x="1412.36" y="166.5" width="1.2" height="3.5" fill="#c4c4c4"/><rect x="1417.49" y="166.5" width="1.2" height="3.5" fill="#c4c4c4"/><rect x="1422.62" y="166.5" width="1.2" height="3.5" fill="#c4c4c4"/><rect x="1427.75" y="164" width="1.2" height="6" fill="#c4c4c4"/><rect x="1432.88" y="166.5" width="1.2" height="3.5" fill="#c4c4c4"/><rect x="1438.01" y="166.5" width="1.2" height="3.5" fill="#c4c4c4"/><rect x="1443.14" y="166.5" width="1.2" height="3.5" fill="#c4c4c4"/><rect x="1448.27" y="166.5" width="1.2" height="3.5" fill="#c4c4c4"/><rect x="1453.40" y="150" width="1.2" height="20" fill="#c4c4c4"/><rect x="1458.53" y="166.5" width="1.2" height="3.5" fill="#c4c4c4"/><rect x="1463.66" y="166.5" width="1.2" height="3.5" fill="#c4c4c4"/><rect x="1468.79" y="166.5" width="1.2" height="3.5" fill="#c4c4c4"/><rect x="1473.92" y="166.5" width="1.2" height="3.5" fill="#c4c4c4"/><rect x="1479.05" y="164" width="1.2" height="6" fill="#c4c4c4"/><rect x="1484.18" y="166.5" width="1.2" height="3.5" fill="#c4c4c4"/><rect x="1489.31" y="166.5" width="1.2" height="3.5" fill="#c4c4c4"/><rect x="1494.44" y="166.5" width="1.2" height="3.5" fill="#c4c4c4"/><rect x="1499.57" y="166.5" width="1.2" height="3.5" fill="#c4c4c4"/><rect x="1504.70" y="150" width="1.2" height="20" fill="#c4c4c4"/><rect x="1509.83" y="166.5" width="1.2" height="3.5" fill="#c4c4c4"/><rect x="1514.96" y="166.5" width="1.2" height="3.5" fill="#c4c4c4"/><rect x="1520.09" y="166.5" width="1.2" height="3.5" fill="#c4c4c4"/><rect x="1525.22" y="166.5" width="1.2" height="3.5" fill="#c4c4c4"/><rect x="1530.35" y="164" width="1.2" height="6" fill="#c4c4c4"/><rect x="1535.48" y="166.5" width="1.2" height="3.5" fill="#c4c4c4"/><rect x="1540.61" y="166.5" width="1.2" height="3.5" fill="#c4c4c4"/><rect x="1545.74" y="166.5" width="1.2" height="3.5" fill="#c4c4c4"/><rect x="1550.87" y="166.5" width="1.2" height="3.5" fill="#c4c4c4"/><rect x="1556.00" y="150" width="1.2" height="20" fill="#c4c4c4"/><rect x="1561.13" y="166.5" width="1.2" height="3.5" fill="#c4c4c4"/><rect x="1566.26" y="166.5" width="1.2" height="3.5" fill="#c4c4c4"/><rect x="1571.39" y="166.5" width="1.2" height="3.5" fill="#c4c4c4"/><rect x="1576.52" y="166.5" width="1.2" height="3.5" fill="#c4c4c4"/><rect x="1581.65" y="164" width="1.2" height="6" fill="#c4c4c4"/><rect x="1586.78" y="166.5" width="1.2" height="3.5" fill="#c4c4c4"/><rect x="1591.91" y="166.5" width="1.2" height="3.5" fill="#c4c4c4"/><rect x="1597.04" y="166.5" width="1.2" height="3.5" fill="#c4c4c4"/><rect x="1602.17" y="166.5" width="1.2" height="3.5" fill="#c4c4c4"/><rect x="1607.30" y="150" width="1.2" height="20" fill="#c4c4c4"/><rect x="1612.43" y="166.5" width="1.2" height="3.5" fill="#c4c4c4"/><rect x="1617.56" y="166.5" width="1.2" height="3.5" fill="#c4c4c4"/><rect x="1622.69" y="166.5" width="1.2" height="3.5" fill="#c4c4c4"/><rect x="1627.82" y="166.5" width="1.2" height="3.5" fill="#c4c4c4"/></svg><span style="position:absolute;left:225.20px;top:152.60px;font-family:'Liberation Mono',monospace;font-size:14.5px;line-height:14.5px;letter-spacing:2.011px;color:#d0d0d0;white-space:pre;margin-left:-192px;margin-top:-149px;transform:scaleX(.84);transform-origin:0 0;">360</span><span style="position:absolute;left:276.50px;top:152.60px;font-family:'Liberation Mono',monospace;font-size:14.5px;line-height:14.5px;letter-spacing:2.011px;color:#d0d0d0;white-space:pre;margin-left:-192px;margin-top:-149px;transform:scaleX(.84);transform-origin:0 0;">180</span><span style="position:absolute;left:327.80px;top:152.60px;font-family:'Liberation Mono',monospace;font-size:14.5px;line-height:14.5px;letter-spacing:2.011px;color:#d0d0d0;white-space:pre;margin-left:-192px;margin-top:-149px;transform:scaleX(.84);transform-origin:0 0;">0</span><span style="position:absolute;left:379.10px;top:152.60px;font-family:'Liberation Mono',monospace;font-size:14.5px;line-height:14.5px;letter-spacing:2.011px;color:#d0d0d0;white-space:pre;margin-left:-192px;margin-top:-149px;transform:scaleX(.84);transform-origin:0 0;">180</span><span style="position:absolute;left:430.40px;top:152.60px;font-family:'Liberation Mono',monospace;font-size:14.5px;line-height:14.5px;letter-spacing:2.011px;color:#d0d0d0;white-space:pre;margin-left:-192px;margin-top:-149px;transform:scaleX(.84);transform-origin:0 0;">360</span><span style="position:absolute;left:481.70px;top:152.60px;font-family:'Liberation Mono',monospace;font-size:14.5px;line-height:14.5px;letter-spacing:2.011px;color:#d0d0d0;white-space:pre;margin-left:-192px;margin-top:-149px;transform:scaleX(.84);transform-origin:0 0;">540</span><span style="position:absolute;left:533.00px;top:152.60px;font-family:'Liberation Mono',monospace;font-size:14.5px;line-height:14.5px;letter-spacing:2.011px;color:#d0d0d0;white-space:pre;margin-left:-192px;margin-top:-149px;transform:scaleX(.84);transform-origin:0 0;">720</span><span style="position:absolute;left:584.30px;top:152.60px;font-family:'Liberation Mono',monospace;font-size:14.5px;line-height:14.5px;letter-spacing:2.011px;color:#d0d0d0;white-space:pre;margin-left:-192px;margin-top:-149px;transform:scaleX(.84);transform-origin:0 0;">900</span><span style="position:absolute;left:635.60px;top:152.60px;font-family:'Liberation Mono',monospace;font-size:14.5px;line-height:14.5px;letter-spacing:2.011px;color:#d0d0d0;white-space:pre;margin-left:-192px;margin-top:-149px;transform:scaleX(.84);transform-origin:0 0;">1080</span><span style="position:absolute;left:686.90px;top:152.60px;font-family:'Liberation Mono',monospace;font-size:14.5px;line-height:14.5px;letter-spacing:2.011px;color:#d0d0d0;white-space:pre;margin-left:-192px;margin-top:-149px;transform:scaleX(.84);transform-origin:0 0;">1260</span><span style="position:absolute;left:738.20px;top:152.60px;font-family:'Liberation Mono',monospace;font-size:14.5px;line-height:14.5px;letter-spacing:2.011px;color:#d0d0d0;white-space:pre;margin-left:-192px;margin-top:-149px;transform:scaleX(.84);transform-origin:0 0;">1440</span><span style="position:absolute;left:789.50px;top:152.60px;font-family:'Liberation Mono',monospace;font-size:14.5px;line-height:14.5px;letter-spacing:2.011px;color:#d0d0d0;white-space:pre;margin-left:-192px;margin-top:-149px;transform:scaleX(.84);transform-origin:0 0;">1620</span><span style="position:absolute;left:840.80px;top:152.60px;font-family:'Liberation Mono',monospace;font-size:14.5px;line-height:14.5px;letter-spacing:2.011px;color:#d0d0d0;white-space:pre;margin-left:-192px;margin-top:-149px;transform:scaleX(.84);transform-origin:0 0;">1800</span><span style="position:absolute;left:892.10px;top:152.60px;font-family:'Liberation Mono',monospace;font-size:14.5px;line-height:14.5px;letter-spacing:2.011px;color:#d0d0d0;white-space:pre;margin-left:-192px;margin-top:-149px;transform:scaleX(.84);transform-origin:0 0;">1980</span><span style="position:absolute;left:943.40px;top:152.60px;font-family:'Liberation Mono',monospace;font-size:14.5px;line-height:14.5px;letter-spacing:2.011px;color:#d0d0d0;white-space:pre;margin-left:-192px;margin-top:-149px;transform:scaleX(.84);transform-origin:0 0;">2160</span><span style="position:absolute;left:994.70px;top:152.60px;font-family:'Liberation Mono',monospace;font-size:14.5px;line-height:14.5px;letter-spacing:2.011px;color:#d0d0d0;white-space:pre;margin-left:-192px;margin-top:-149px;transform:scaleX(.84);transform-origin:0 0;">2340</span><span style="position:absolute;left:1046.00px;top:152.60px;font-family:'Liberation Mono',monospace;font-size:14.5px;line-height:14.5px;letter-spacing:2.011px;color:#d0d0d0;white-space:pre;margin-left:-192px;margin-top:-149px;transform:scaleX(.84);transform-origin:0 0;">2520</span><span style="position:absolute;left:1097.30px;top:152.60px;font-family:'Liberation Mono',monospace;font-size:14.5px;line-height:14.5px;letter-spacing:2.011px;color:#d0d0d0;white-space:pre;margin-left:-192px;margin-top:-149px;transform:scaleX(.84);transform-origin:0 0;">2700</span><span style="position:absolute;left:1148.60px;top:152.60px;font-family:'Liberation Mono',monospace;font-size:14.5px;line-height:14.5px;letter-spacing:2.011px;color:#d0d0d0;white-space:pre;margin-left:-192px;margin-top:-149px;transform:scaleX(.84);transform-origin:0 0;">2880</span><span style="position:absolute;left:1199.90px;top:152.60px;font-family:'Liberation Mono',monospace;font-size:14.5px;line-height:14.5px;letter-spacing:2.011px;color:#d0d0d0;white-space:pre;margin-left:-192px;margin-top:-149px;transform:scaleX(.84);transform-origin:0 0;">3060</span><span style="position:absolute;left:1251.20px;top:152.60px;font-family:'Liberation Mono',monospace;font-size:14.5px;line-height:14.5px;letter-spacing:2.011px;color:#d0d0d0;white-space:pre;margin-left:-192px;margin-top:-149px;transform:scaleX(.84);transform-origin:0 0;">3240</span><span style="position:absolute;left:1302.50px;top:152.60px;font-family:'Liberation Mono',monospace;font-size:14.5px;line-height:14.5px;letter-spacing:2.011px;color:#d0d0d0;white-space:pre;margin-left:-192px;margin-top:-149px;transform:scaleX(.84);transform-origin:0 0;">3420</span><span style="position:absolute;left:1353.80px;top:152.60px;font-family:'Liberation Mono',monospace;font-size:14.5px;line-height:14.5px;letter-spacing:2.011px;color:#d0d0d0;white-space:pre;margin-left:-192px;margin-top:-149px;transform:scaleX(.84);transform-origin:0 0;">3600</span><span style="position:absolute;left:1405.10px;top:152.60px;font-family:'Liberation Mono',monospace;font-size:14.5px;line-height:14.5px;letter-spacing:2.011px;color:#d0d0d0;white-space:pre;margin-left:-192px;margin-top:-149px;transform:scaleX(.84);transform-origin:0 0;">3780</span><span style="position:absolute;left:1456.40px;top:152.60px;font-family:'Liberation Mono',monospace;font-size:14.5px;line-height:14.5px;letter-spacing:2.011px;color:#d0d0d0;white-space:pre;margin-left:-192px;margin-top:-149px;transform:scaleX(.84);transform-origin:0 0;">3960</span><span style="position:absolute;left:1507.70px;top:152.60px;font-family:'Liberation Mono',monospace;font-size:14.5px;line-height:14.5px;letter-spacing:2.011px;color:#d0d0d0;white-space:pre;margin-left:-192px;margin-top:-149px;transform:scaleX(.84);transform-origin:0 0;">4140</span><span style="position:absolute;left:1559.00px;top:152.60px;font-family:'Liberation Mono',monospace;font-size:14.5px;line-height:14.5px;letter-spacing:2.011px;color:#d0d0d0;white-space:pre;margin-left:-192px;margin-top:-149px;transform:scaleX(.84);transform-origin:0 0;">4320</span><span style="position:absolute;left:1610.30px;top:152.60px;font-family:'Liberation Mono',monospace;font-size:14.5px;line-height:14.5px;letter-spacing:2.011px;color:#d0d0d0;white-space:pre;margin-left:-192px;margin-top:-149px;transform:scaleX(.84);transform-origin:0 0;">4500</span></div>
<div id="vruler" class="abs"><svg width="21" height="1168" viewBox="192 171 21 1168" style="left:0;top:0"><rect x="211.5" y="171" width="1.5" height="1168" fill="#c4c4c4"/><rect x="192" y="1337" width="21" height="1.5" fill="#c4c4c4"/><rect x="208" y="170.80" width="4" height="1.2" fill="#c4c4c4"/><rect x="208" y="175.94" width="4" height="1.2" fill="#c4c4c4"/><rect x="208" y="181.07" width="4" height="1.2" fill="#c4c4c4"/><rect x="208" y="186.20" width="4" height="1.2" fill="#c4c4c4"/><rect x="205" y="191.34" width="7" height="1.2" fill="#c4c4c4"/><rect x="208" y="196.47" width="4" height="1.2" fill="#c4c4c4"/><rect x="208" y="201.60" width="4" height="1.2" fill="#c4c4c4"/><rect x="208" y="206.73" width="4" height="1.2" fill="#c4c4c4"/><rect x="208" y="211.87" width="4" height="1.2" fill="#c4c4c4"/><rect x="192" y="217.00" width="20" height="1.2" fill="#c4c4c4"/><rect x="208" y="222.13" width="4" height="1.2" fill="#c4c4c4"/><rect x="208" y="227.27" width="4" height="1.2" fill="#c4c4c4"/><rect x="208" y="232.40" width="4" height="1.2" fill="#c4c4c4"/><rect x="208" y="237.53" width="4" height="1.2" fill="#c4c4c4"/><rect x="205" y="242.66" width="7" height="1.2" fill="#c4c4c4"/><rect x="208" y="247.80" width="4" height="1.2" fill="#c4c4c4"/><rect x="208" y="252.93" width="4" height="1.2" fill="#c4c4c4"/><rect x="208" y="258.06" width="4" height="1.2" fill="#c4c4c4"/><rect x="208" y="263.20" width="4" height="1.2" fill="#c4c4c4"/><rect x="192" y="268.33" width="20" height="1.2" fill="#c4c4c4"/><rect x="208" y="273.46" width="4" height="1.2" fill="#c4c4c4"/><rect x="208" y="278.60" width="4" height="1.2" fill="#c4c4c4"/><rect x="208" y="283.73" width="4" height="1.2" fill="#c4c4c4"/><rect x="208" y="288.86" width="4" height="1.2" fill="#c4c4c4"/><rect x="205" y="294.00" width="7" height="1.2" fill="#c4c4c4"/><rect x="208" y="299.13" width="4" height="1.2" fill="#c4c4c4"/><rect x="208" y="304.26" width="4" height="1.2" fill="#c4c4c4"/><rect x="208" y="309.39" width="4" height="1.2" fill="#c4c4c4"/><rect x="208" y="314.53" width="4" height="1.2" fill="#c4c4c4"/><rect x="192" y="319.66" width="20" height="1.2" fill="#c4c4c4"/><rect x="208" y="324.79" width="4" height="1.2" fill="#c4c4c4"/><rect x="208" y="329.93" width="4" height="1.2" fill="#c4c4c4"/><rect x="208" y="335.06" width="4" height="1.2" fill="#c4c4c4"/><rect x="208" y="340.19" width="4" height="1.2" fill="#c4c4c4"/><rect x="205" y="345.32" width="7" height="1.2" fill="#c4c4c4"/><rect x="208" y="350.46" width="4" height="1.2" fill="#c4c4c4"/><rect x="208" y="355.59" width="4" height="1.2" fill="#c4c4c4"/><rect x="208" y="360.72" width="4" height="1.2" fill="#c4c4c4"/><rect x="208" y="365.86" width="4" height="1.2" fill="#c4c4c4"/><rect x="192" y="370.99" width="20" height="1.2" fill="#c4c4c4"/><rect x="208" y="376.12" width="4" height="1.2" fill="#c4c4c4"/><rect x="208" y="381.26" width="4" height="1.2" fill="#c4c4c4"/><rect x="208" y="386.39" width="4" height="1.2" fill="#c4c4c4"/><rect x="208" y="391.52" width="4" height="1.2" fill="#c4c4c4"/><rect x="205" y="396.65" width="7" height="1.2" fill="#c4c4c4"/><rect x="208" y="401.79" width="4" height="1.2" fill="#c4c4c4"/><rect x="208" y="406.92" width="4" height="1.2" fill="#c4c4c4"/><rect x="208" y="412.05" width="4" height="1.2" fill="#c4c4c4"/><rect x="208" y="417.19" width="4" height="1.2" fill="#c4c4c4"/><rect x="192" y="422.32" width="20" height="1.2" fill="#c4c4c4"/><rect x="208" y="427.45" width="4" height="1.2" fill="#c4c4c4"/><rect x="208" y="432.59" width="4" height="1.2" fill="#c4c4c4"/><rect x="208" y="437.72" width="4" height="1.2" fill="#c4c4c4"/><rect x="208" y="442.85" width="4" height="1.2" fill="#c4c4c4"/><rect x="205" y="447.98" width="7" height="1.2" fill="#c4c4c4"/><rect x="208" y="453.12" width="4" height="1.2" fill="#c4c4c4"/><rect x="208" y="458.25" width="4" height="1.2" fill="#c4c4c4"/><rect x="208" y="463.38" width="4" height="1.2" fill="#c4c4c4"/><rect x="208" y="468.52" width="4" height="1.2" fill="#c4c4c4"/><rect x="192" y="473.65" width="20" height="1.2" fill="#c4c4c4"/><rect x="208" y="478.78" width="4" height="1.2" fill="#c4c4c4"/><rect x="208" y="483.92" width="4" height="1.2" fill="#c4c4c4"/><rect x="208" y="489.05" width="4" height="1.2" fill="#c4c4c4"/><rect x="208" y="494.18" width="4" height="1.2" fill="#c4c4c4"/><rect x="205" y="499.31" width="7" height="1.2" fill="#c4c4c4"/><rect x="208" y="504.45" width="4" height="1.2" fill="#c4c4c4"/><rect x="208" y="509.58" width="4" height="1.2" fill="#c4c4c4"/><rect x="208" y="514.71" width="4" height="1.2" fill="#c4c4c4"/><rect x="208" y="519.85" width="4" height="1.2" fill="#c4c4c4"/><rect x="192" y="524.98" width="20" height="1.2" fill="#c4c4c4"/><rect x="208" y="530.11" width="4" height="1.2" fill="#c4c4c4"/><rect x="208" y="535.25" width="4" height="1.2" fill="#c4c4c4"/><rect x="208" y="540.38" width="4" height="1.2" fill="#c4c4c4"/><rect x="208" y="545.51" width="4" height="1.2" fill="#c4c4c4"/><rect x="205" y="550.64" width="7" height="1.2" fill="#c4c4c4"/><rect x="208" y="555.78" width="4" height="1.2" fill="#c4c4c4"/><rect x="208" y="560.91" width="4" height="1.2" fill="#c4c4c4"/><rect x="208" y="566.04" width="4" height="1.2" fill="#c4c4c4"/><rect x="208" y="571.18" width="4" height="1.2" fill="#c4c4c4"/><rect x="192" y="576.31" width="20" height="1.2" fill="#c4c4c4"/><rect x="208" y="581.44" width="4" height="1.2" fill="#c4c4c4"/><rect x="208" y="586.58" width="4" height="1.2" fill="#c4c4c4"/><rect x="208" y="591.71" width="4" height="1.2" fill="#c4c4c4"/><rect x="208" y="596.84" width="4" height="1.2" fill="#c4c4c4"/><rect x="205" y="601.98" width="7" height="1.2" fill="#c4c4c4"/><rect x="208" y="607.11" width="4" height="1.2" fill="#c4c4c4"/><rect x="208" y="612.24" width="4" height="1.2" fill="#c4c4c4"/><rect x="208" y="617.37" width="4" height="1.2" fill="#c4c4c4"/><rect x="208" y="622.51" width="4" height="1.2" fill="#c4c4c4"/><rect x="192" y="627.64" width="20" height="1.2" fill="#c4c4c4"/><rect x="208" y="632.77" width="4" height="1.2" fill="#c4c4c4"/><rect x="208" y="637.91" width="4" height="1.2" fill="#c4c4c4"/><rect x="208" y="643.04" width="4" height="1.2" fill="#c4c4c4"/><rect x="208" y="648.17" width="4" height="1.2" fill="#c4c4c4"/><rect x="205" y="653.30" width="7" height="1.2" fill="#c4c4c4"/><rect x="208" y="658.44" width="4" height="1.2" fill="#c4c4c4"/><rect x="208" y="663.57" width="4" height="1.2" fill="#c4c4c4"/><rect x="208" y="668.70" width="4" height="1.2" fill="#c4c4c4"/><rect x="208" y="673.84" width="4" height="1.2" fill="#c4c4c4"/><rect x="192" y="678.97" width="20" height="1.2" fill="#c4c4c4"/><rect x="208" y="684.10" width="4" height="1.2" fill="#c4c4c4"/><rect x="208" y="689.24" width="4" height="1.2" fill="#c4c4c4"/><rect x="208" y="694.37" width="4" height="1.2" fill="#c4c4c4"/><rect x="208" y="699.50" width="4" height="1.2" fill="#c4c4c4"/><rect x="205" y="704.63" width="7" height="1.2" fill="#c4c4c4"/><rect x="208" y="709.77" width="4" height="1.2" fill="#c4c4c4"/><rect x="208" y="714.90" width="4" height="1.2" fill="#c4c4c4"/><rect x="208" y="720.03" width="4" height="1.2" fill="#c4c4c4"/><rect x="208" y="725.17" width="4" height="1.2" fill="#c4c4c4"/><rect x="192" y="730.30" width="20" height="1.2" fill="#c4c4c4"/><rect x="208" y="735.43" width="4" height="1.2" fill="#c4c4c4"/><rect x="208" y="740.57" width="4" height="1.2" fill="#c4c4c4"/><rect x="208" y="745.70" width="4" height="1.2" fill="#c4c4c4"/><rect x="208" y="750.83" width="4" height="1.2" fill="#c4c4c4"/><rect x="205" y="755.97" width="7" height="1.2" fill="#c4c4c4"/><rect x="208" y="761.10" width="4" height="1.2" fill="#c4c4c4"/><rect x="208" y="766.23" width="4" height="1.2" fill="#c4c4c4"/><rect x="208" y="771.36" width="4" height="1.2" fill="#c4c4c4"/><rect x="208" y="776.50" width="4" height="1.2" fill="#c4c4c4"/><rect x="192" y="781.63" width="20" height="1.2" fill="#c4c4c4"/><rect x="208" y="786.76" width="4" height="1.2" fill="#c4c4c4"/><rect x="208" y="791.90" width="4" height="1.2" fill="#c4c4c4"/><rect x="208" y="797.03" width="4" height="1.2" fill="#c4c4c4"/><rect x="208" y="802.16" width="4" height="1.2" fill="#c4c4c4"/><rect x="205" y="807.29" width="7" height="1.2" fill="#c4c4c4"/><rect x="208" y="812.43" width="4" height="1.2" fill="#c4c4c4"/><rect x="208" y="817.56" width="4" height="1.2" fill="#c4c4c4"/><rect x="208" y="822.69" width="4" height="1.2" fill="#c4c4c4"/><rect x="208" y="827.83" width="4" height="1.2" fill="#c4c4c4"/><rect x="192" y="832.96" width="20" height="1.2" fill="#c4c4c4"/><rect x="208" y="838.09" width="4" height="1.2" fill="#c4c4c4"/><rect x="208" y="843.23" width="4" height="1.2" fill="#c4c4c4"/><rect x="208" y="848.36" width="4" height="1.2" fill="#c4c4c4"/><rect x="208" y="853.49" width="4" height="1.2" fill="#c4c4c4"/><rect x="205" y="858.62" width="7" height="1.2" fill="#c4c4c4"/><rect x="208" y="863.76" width="4" height="1.2" fill="#c4c4c4"/><rect x="208" y="868.89" width="4" height="1.2" fill="#c4c4c4"/><rect x="208" y="874.02" width="4" height="1.2" fill="#c4c4c4"/><rect x="208" y="879.16" width="4" height="1.2" fill="#c4c4c4"/><rect x="192" y="884.29" width="20" height="1.2" fill="#c4c4c4"/><rect x="208" y="889.42" width="4" height="1.2" fill="#c4c4c4"/><rect x="208" y="894.56" width="4" height="1.2" fill="#c4c4c4"/><rect x="208" y="899.69" width="4" height="1.2" fill="#c4c4c4"/><rect x="208" y="904.82" width="4" height="1.2" fill="#c4c4c4"/><rect x="205" y="909.96" width="7" height="1.2" fill="#c4c4c4"/><rect x="208" y="915.09" width="4" height="1.2" fill="#c4c4c4"/><rect x="208" y="920.22" width="4" height="1.2" fill="#c4c4c4"/><rect x="208" y="925.35" width="4" height="1.2" fill="#c4c4c4"/><rect x="208" y="930.49" width="4" height="1.2" fill="#c4c4c4"/><rect x="192" y="935.62" width="20" height="1.2" fill="#c4c4c4"/><rect x="208" y="940.75" width="4" height="1.2" fill="#c4c4c4"/><rect x="208" y="945.89" width="4" height="1.2" fill="#c4c4c4"/><rect x="208" y="951.02" width="4" height="1.2" fill="#c4c4c4"/><rect x="208" y="956.15" width="4" height="1.2" fill="#c4c4c4"/><rect x="205" y="961.28" width="7" height="1.2" fill="#c4c4c4"/><rect x="208" y="966.42" width="4" height="1.2" fill="#c4c4c4"/><rect x="208" y="971.55" width="4" height="1.2" fill="#c4c4c4"/><rect x="208" y="976.68" width="4" height="1.2" fill="#c4c4c4"/><rect x="208" y="981.82" width="4" height="1.2" fill="#c4c4c4"/><rect x="192" y="986.95" width="20" height="1.2" fill="#c4c4c4"/><rect x="208" y="992.08" width="4" height="1.2" fill="#c4c4c4"/><rect x="208" y="997.22" width="4" height="1.2" fill="#c4c4c4"/><rect x="208" y="1002.35" width="4" height="1.2" fill="#c4c4c4"/><rect x="208" y="1007.48" width="4" height="1.2" fill="#c4c4c4"/><rect x="205" y="1012.61" width="7" height="1.2" fill="#c4c4c4"/><rect x="208" y="1017.75" width="4" height="1.2" fill="#c4c4c4"/><rect x="208" y="1022.88" width="4" height="1.2" fill="#c4c4c4"/><rect x="208" y="1028.01" width="4" height="1.2" fill="#c4c4c4"/><rect x="208" y="1033.15" width="4" height="1.2" fill="#c4c4c4"/><rect x="192" y="1038.28" width="20" height="1.2" fill="#c4c4c4"/><rect x="208" y="1043.41" width="4" height="1.2" fill="#c4c4c4"/><rect x="208" y="1048.55" width="4" height="1.2" fill="#c4c4c4"/><rect x="208" y="1053.68" width="4" height="1.2" fill="#c4c4c4"/><rect x="208" y="1058.81" width="4" height="1.2" fill="#c4c4c4"/><rect x="205" y="1063.95" width="7" height="1.2" fill="#c4c4c4"/><rect x="208" y="1069.08" width="4" height="1.2" fill="#c4c4c4"/><rect x="208" y="1074.21" width="4" height="1.2" fill="#c4c4c4"/><rect x="208" y="1079.34" width="4" height="1.2" fill="#c4c4c4"/><rect x="208" y="1084.48" width="4" height="1.2" fill="#c4c4c4"/><rect x="192" y="1089.61" width="20" height="1.2" fill="#c4c4c4"/><rect x="208" y="1094.74" width="4" height="1.2" fill="#c4c4c4"/><rect x="208" y="1099.88" width="4" height="1.2" fill="#c4c4c4"/><rect x="208" y="1105.01" width="4" height="1.2" fill="#c4c4c4"/><rect x="208" y="1110.14" width="4" height="1.2" fill="#c4c4c4"/><rect x="205" y="1115.28" width="7" height="1.2" fill="#c4c4c4"/><rect x="208" y="1120.41" width="4" height="1.2" fill="#c4c4c4"/><rect x="208" y="1125.54" width="4" height="1.2" fill="#c4c4c4"/><rect x="208" y="1130.67" width="4" height="1.2" fill="#c4c4c4"/><rect x="208" y="1135.81" width="4" height="1.2" fill="#c4c4c4"/><rect x="192" y="1140.94" width="20" height="1.2" fill="#c4c4c4"/><rect x="208" y="1146.07" width="4" height="1.2" fill="#c4c4c4"/><rect x="208" y="1151.21" width="4" height="1.2" fill="#c4c4c4"/><rect x="208" y="1156.34" width="4" height="1.2" fill="#c4c4c4"/><rect x="208" y="1161.47" width="4" height="1.2" fill="#c4c4c4"/><rect x="205" y="1166.61" width="7" height="1.2" fill="#c4c4c4"/><rect x="208" y="1171.74" width="4" height="1.2" fill="#c4c4c4"/><rect x="208" y="1176.87" width="4" height="1.2" fill="#c4c4c4"/><rect x="208" y="1182.00" width="4" height="1.2" fill="#c4c4c4"/><rect x="208" y="1187.14" width="4" height="1.2" fill="#c4c4c4"/><rect x="192" y="1192.27" width="20" height="1.2" fill="#c4c4c4"/><rect x="208" y="1197.40" width="4" height="1.2" fill="#c4c4c4"/><rect x="208" y="1202.54" width="4" height="1.2" fill="#c4c4c4"/><rect x="208" y="1207.67" width="4" height="1.2" fill="#c4c4c4"/><rect x="208" y="1212.80" width="4" height="1.2" fill="#c4c4c4"/><rect x="205" y="1217.94" width="7" height="1.2" fill="#c4c4c4"/><rect x="208" y="1223.07" width="4" height="1.2" fill="#c4c4c4"/><rect x="208" y="1228.20" width="4" height="1.2" fill="#c4c4c4"/><rect x="208" y="1233.33" width="4" height="1.2" fill="#c4c4c4"/><rect x="208" y="1238.47" width="4" height="1.2" fill="#c4c4c4"/><rect x="192" y="1243.60" width="20" height="1.2" fill="#c4c4c4"/><rect x="208" y="1248.73" width="4" height="1.2" fill="#c4c4c4"/><rect x="208" y="1253.87" width="4" height="1.2" fill="#c4c4c4"/><rect x="208" y="1259.00" width="4" height="1.2" fill="#c4c4c4"/><rect x="208" y="1264.13" width="4" height="1.2" fill="#c4c4c4"/><rect x="205" y="1269.27" width="7" height="1.2" fill="#c4c4c4"/><rect x="208" y="1274.40" width="4" height="1.2" fill="#c4c4c4"/><rect x="208" y="1279.53" width="4" height="1.2" fill="#c4c4c4"/><rect x="208" y="1284.66" width="4" height="1.2" fill="#c4c4c4"/><rect x="208" y="1289.80" width="4" height="1.2" fill="#c4c4c4"/><rect x="192" y="1294.93" width="20" height="1.2" fill="#c4c4c4"/><rect x="208" y="1300.06" width="4" height="1.2" fill="#c4c4c4"/><rect x="208" y="1305.20" width="4" height="1.2" fill="#c4c4c4"/><rect x="208" y="1310.33" width="4" height="1.2" fill="#c4c4c4"/><rect x="208" y="1315.46" width="4" height="1.2" fill="#c4c4c4"/><rect x="205" y="1320.60" width="7" height="1.2" fill="#c4c4c4"/><rect x="208" y="1325.73" width="4" height="1.2" fill="#c4c4c4"/><rect x="208" y="1330.86" width="4" height="1.2" fill="#c4c4c4"/><rect x="208" y="1335.99" width="4" height="1.2" fill="#c4c4c4"/></svg><div style="left:14.800000000000011px;top:73.40px;width:0;height:0;transform:rotate(-90deg);transform-origin:0 0"><span style="position:absolute;left:0.00px;top:-11.60px;font-family:'Liberation Mono',monospace;font-size:14.5px;line-height:14.5px;letter-spacing:2.011px;color:#d0d0d0;white-space:pre;transform:scaleX(.84);transform-origin:0 0;">360</span></div><div style="left:14.800000000000011px;top:124.73px;width:0;height:0;transform:rotate(-90deg);transform-origin:0 0"><span style="position:absolute;left:0.00px;top:-11.60px;font-family:'Liberation Mono',monospace;font-size:14.5px;line-height:14.5px;letter-spacing:2.011px;color:#d0d0d0;white-space:pre;transform:scaleX(.84);transform-origin:0 0;">540</span></div><div style="left:14.800000000000011px;top:176.06px;width:0;height:0;transform:rotate(-90deg);transform-origin:0 0"><span style="position:absolute;left:0.00px;top:-11.60px;font-family:'Liberation Mono',monospace;font-size:14.5px;line-height:14.5px;letter-spacing:2.011px;color:#d0d0d0;white-space:pre;transform:scaleX(.84);transform-origin:0 0;">720</span></div><div style="left:14.800000000000011px;top:227.39px;width:0;height:0;transform:rotate(-90deg);transform-origin:0 0"><span style="position:absolute;left:0.00px;top:-11.60px;font-family:'Liberation Mono',monospace;font-size:14.5px;line-height:14.5px;letter-spacing:2.011px;color:#d0d0d0;white-space:pre;transform:scaleX(.84);transform-origin:0 0;">900</span></div><div style="left:14.800000000000011px;top:287.72px;width:0;height:0;transform:rotate(-90deg);transform-origin:0 0"><span style="position:absolute;left:0.00px;top:-11.60px;font-family:'Liberation Mono',monospace;font-size:14.5px;line-height:14.5px;letter-spacing:2.011px;color:#d0d0d0;white-space:pre;transform:scaleX(.84);transform-origin:0 0;">1080</span></div><div style="left:14.800000000000011px;top:339.05px;width:0;height:0;transform:rotate(-90deg);transform-origin:0 0"><span style="position:absolute;left:0.00px;top:-11.60px;font-family:'Liberation Mono',monospace;font-size:14.5px;line-height:14.5px;letter-spacing:2.011px;color:#d0d0d0;white-space:pre;transform:scaleX(.84);transform-origin:0 0;">1260</span></div><div style="left:14.800000000000011px;top:390.38px;width:0;height:0;transform:rotate(-90deg);transform-origin:0 0"><span style="position:absolute;left:0.00px;top:-11.60px;font-family:'Liberation Mono',monospace;font-size:14.5px;line-height:14.5px;letter-spacing:2.011px;color:#d0d0d0;white-space:pre;transform:scaleX(.84);transform-origin:0 0;">1440</span></div><div style="left:14.800000000000011px;top:441.71px;width:0;height:0;transform:rotate(-90deg);transform-origin:0 0"><span style="position:absolute;left:0.00px;top:-11.60px;font-family:'Liberation Mono',monospace;font-size:14.5px;line-height:14.5px;letter-spacing:2.011px;color:#d0d0d0;white-space:pre;transform:scaleX(.84);transform-origin:0 0;">1620</span></div><div style="left:14.800000000000011px;top:493.04px;width:0;height:0;transform:rotate(-90deg);transform-origin:0 0"><span style="position:absolute;left:0.00px;top:-11.60px;font-family:'Liberation Mono',monospace;font-size:14.5px;line-height:14.5px;letter-spacing:2.011px;color:#d0d0d0;white-space:pre;transform:scaleX(.84);transform-origin:0 0;">1800</span></div><div style="left:14.800000000000011px;top:544.37px;width:0;height:0;transform:rotate(-90deg);transform-origin:0 0"><span style="position:absolute;left:0.00px;top:-11.60px;font-family:'Liberation Mono',monospace;font-size:14.5px;line-height:14.5px;letter-spacing:2.011px;color:#d0d0d0;white-space:pre;transform:scaleX(.84);transform-origin:0 0;">1980</span></div><div style="left:14.800000000000011px;top:595.70px;width:0;height:0;transform:rotate(-90deg);transform-origin:0 0"><span style="position:absolute;left:0.00px;top:-11.60px;font-family:'Liberation Mono',monospace;font-size:14.5px;line-height:14.5px;letter-spacing:2.011px;color:#d0d0d0;white-space:pre;transform:scaleX(.84);transform-origin:0 0;">2160</span></div><div style="left:14.800000000000011px;top:647.03px;width:0;height:0;transform:rotate(-90deg);transform-origin:0 0"><span style="position:absolute;left:0.00px;top:-11.60px;font-family:'Liberation Mono',monospace;font-size:14.5px;line-height:14.5px;letter-spacing:2.011px;color:#d0d0d0;white-space:pre;transform:scaleX(.84);transform-origin:0 0;">2340</span></div><div style="left:14.800000000000011px;top:698.36px;width:0;height:0;transform:rotate(-90deg);transform-origin:0 0"><span style="position:absolute;left:0.00px;top:-11.60px;font-family:'Liberation Mono',monospace;font-size:14.5px;line-height:14.5px;letter-spacing:2.011px;color:#d0d0d0;white-space:pre;transform:scaleX(.84);transform-origin:0 0;">2520</span></div><div style="left:14.800000000000011px;top:749.69px;width:0;height:0;transform:rotate(-90deg);transform-origin:0 0"><span style="position:absolute;left:0.00px;top:-11.60px;font-family:'Liberation Mono',monospace;font-size:14.5px;line-height:14.5px;letter-spacing:2.011px;color:#d0d0d0;white-space:pre;transform:scaleX(.84);transform-origin:0 0;">2700</span></div><div style="left:14.800000000000011px;top:801.02px;width:0;height:0;transform:rotate(-90deg);transform-origin:0 0"><span style="position:absolute;left:0.00px;top:-11.60px;font-family:'Liberation Mono',monospace;font-size:14.5px;line-height:14.5px;letter-spacing:2.011px;color:#d0d0d0;white-space:pre;transform:scaleX(.84);transform-origin:0 0;">2880</span></div><div style="left:14.800000000000011px;top:852.35px;width:0;height:0;transform:rotate(-90deg);transform-origin:0 0"><span style="position:absolute;left:0.00px;top:-11.60px;font-family:'Liberation Mono',monospace;font-size:14.5px;line-height:14.5px;letter-spacing:2.011px;color:#d0d0d0;white-space:pre;transform:scaleX(.84);transform-origin:0 0;">3060</span></div><div style="left:14.800000000000011px;top:903.68px;width:0;height:0;transform:rotate(-90deg);transform-origin:0 0"><span style="position:absolute;left:0.00px;top:-11.60px;font-family:'Liberation Mono',monospace;font-size:14.5px;line-height:14.5px;letter-spacing:2.011px;color:#d0d0d0;white-space:pre;transform:scaleX(.84);transform-origin:0 0;">3240</span></div><div style="left:14.800000000000011px;top:955.01px;width:0;height:0;transform:rotate(-90deg);transform-origin:0 0"><span style="position:absolute;left:0.00px;top:-11.60px;font-family:'Liberation Mono',monospace;font-size:14.5px;line-height:14.5px;letter-spacing:2.011px;color:#d0d0d0;white-space:pre;transform:scaleX(.84);transform-origin:0 0;">3420</span></div><div style="left:14.800000000000011px;top:1006.34px;width:0;height:0;transform:rotate(-90deg);transform-origin:0 0"><span style="position:absolute;left:0.00px;top:-11.60px;font-family:'Liberation Mono',monospace;font-size:14.5px;line-height:14.5px;letter-spacing:2.011px;color:#d0d0d0;white-space:pre;transform:scaleX(.84);transform-origin:0 0;">3600</span></div><div style="left:14.800000000000011px;top:1057.67px;width:0;height:0;transform:rotate(-90deg);transform-origin:0 0"><span style="position:absolute;left:0.00px;top:-11.60px;font-family:'Liberation Mono',monospace;font-size:14.5px;line-height:14.5px;letter-spacing:2.011px;color:#d0d0d0;white-space:pre;transform:scaleX(.84);transform-origin:0 0;">3780</span></div><div style="left:14.800000000000011px;top:1109.00px;width:0;height:0;transform:rotate(-90deg);transform-origin:0 0"><span style="position:absolute;left:0.00px;top:-11.60px;font-family:'Liberation Mono',monospace;font-size:14.5px;line-height:14.5px;letter-spacing:2.011px;color:#d0d0d0;white-space:pre;transform:scaleX(.84);transform-origin:0 0;">3960</span></div><div style="left:14.800000000000011px;top:1160.33px;width:0;height:0;transform:rotate(-90deg);transform-origin:0 0"><span style="position:absolute;left:0.00px;top:-11.60px;font-family:'Liberation Mono',monospace;font-size:14.5px;line-height:14.5px;letter-spacing:2.011px;color:#d0d0d0;white-space:pre;transform:scaleX(.84);transform-origin:0 0;">4140</span></div><div style="left:14.800000000000011px;top:1211.66px;width:0;height:0;transform:rotate(-90deg);transform-origin:0 0"><span style="position:absolute;left:0.00px;top:-11.60px;font-family:'Liberation Mono',monospace;font-size:14.5px;line-height:14.5px;letter-spacing:2.011px;color:#d0d0d0;white-space:pre;transform:scaleX(.84);transform-origin:0 0;">4320</span></div></div>
<div id="status" class="abs"><!-- relative to #status (page x-190, y-1339) -->
<svg width="1438" height="17" viewBox="190 1339 1438 17" style="left:0;top:0">
<rect x="190" y="1339" width="2" height="17" fill="#383838"/>
<rect x="197" y="1343.5" width="103.5" height="14" fill="#4a4a4a" stroke="#6c6c6c" stroke-width="1"/>
<path d="M198 1356V1355L300 1344.5V1356Z" fill="#2e2e2e"/>
<rect x="240" y="1339" width="4" height="17" fill="#727272"/>
<rect x="311.5" y="1343.5" width="103" height="14" fill="#4a4a4a" stroke="#6c6c6c" stroke-width="1"/>
<circle cx="389" cy="1374" r="31" fill="#2e2e2e"/>
<rect x="312" y="1344" width="50" height="12" fill="#444"/>
<rect x="361" y="1339" width="4" height="17" fill="#727272"/>
<rect x="853.5" y="1340.5" width="631" height="20" rx="6" fill="#5a5a5a"/>
</svg>
<span style="position:absolute;left:268.50px;top:1347.19px;font-family:'Liberation Sans',sans-serif;font-size:17.5px;line-height:17.5px;letter-spacing:-0.391px;color:#ececec;white-space:pre;margin-left:-190px;margin-top:-1339px">28.5</span>
<span style="position:absolute;left:315.00px;top:1347.19px;font-family:'Liberation Sans',sans-serif;font-size:17.5px;line-height:17.5px;letter-spacing:-0.443px;color:#ececec;white-space:pre;margin-left:-190px;margin-top:-1339px">0.0</span>
</div>
</body></html>
